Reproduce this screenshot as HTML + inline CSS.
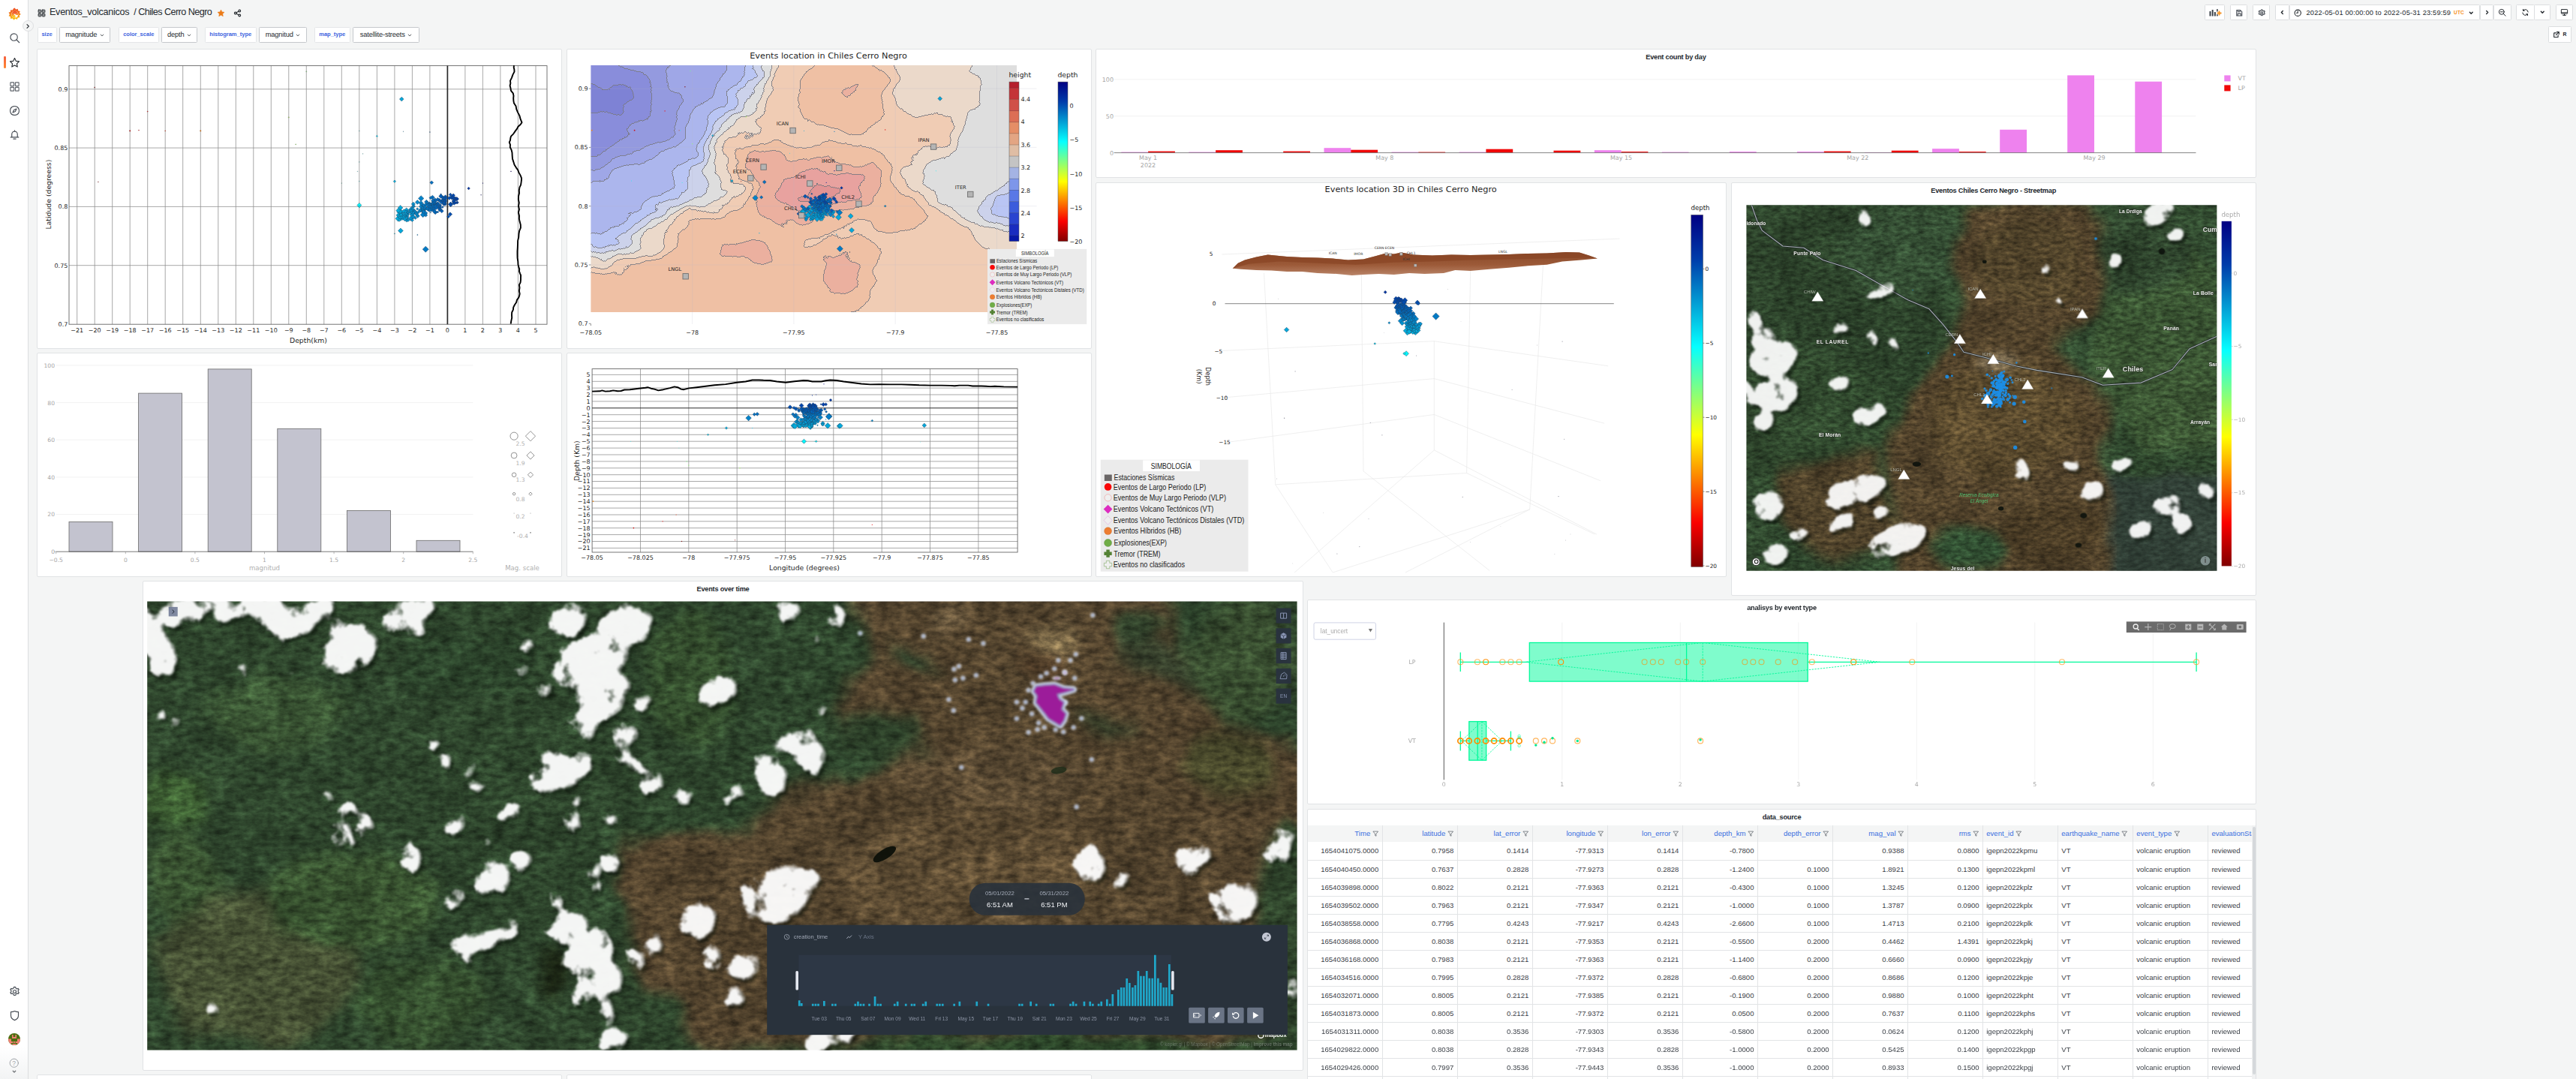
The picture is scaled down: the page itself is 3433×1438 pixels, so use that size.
<!DOCTYPE html>
<html lang="en"><head><meta charset="utf-8"><title>Chiles Cerro Negro - Grafana</title>
<style>
*{box-sizing:border-box}
html,body{margin:0;padding:0}
body{width:3433px;height:1438px;overflow:hidden;background:#f4f5f5;font-family:"Liberation Sans",sans-serif;color:#24292e;position:relative}
.panel{position:absolute;background:#fff;border:1px solid #e1e3e5;border-radius:2px;overflow:hidden}
.ptitle{position:absolute;left:0;right:0;top:5px;text-align:center;font-size:9.2px;font-weight:bold;color:#24292e;letter-spacing:-0.22px;line-height:11px}
.abs{position:absolute}
svg{position:absolute;left:0;top:0;overflow:visible}
svg text{white-space:pre}
.dj{font-family:"DejaVu Sans",sans-serif}

</style></head>
<body>
<div class="abs" id="sidemenu" style="left:0;top:0;width:37.5px;height:1438px;background:#fff;border-right:1px solid #dcdee0"></div>
<svg class="abs" style="left:10.5px;top:10px" width="17" height="18" viewBox="0 0 34 36">
<defs><linearGradient id="glg" x1="0" y1="1" x2="0" y2="0"><stop offset="0" stop-color="#fbca0a"/><stop offset="0.55" stop-color="#f37a20"/><stop offset="1" stop-color="#ef4e28"/></linearGradient></defs>
<path fill="url(#glg)" d="M17 1 L20.5 5.2 L25.5 3.6 L26.3 8.6 L31.5 9.8 L29.8 14.6 L33.5 18 L29.6 21.2 L30.6 26.4 L25.4 26.8 L23.6 31.8 L19 29.4 L14.8 33.5 L11.6 29 L6.2 29.8 L6 24.6 L1.2 22.4 L3.8 18 L1 13.4 L5.8 11.6 L6.4 6.4 L11.6 7.2 L14 2.6 Z"/>
<circle cx="17.5" cy="18.5" r="9.2" fill="#fff"/>
<path fill="none" stroke="url(#glg)" stroke-width="3.6" stroke-linecap="round" d="M24.5 18.5 A7 7 0 1 0 17.5 25.5"/>
<path fill="none" stroke="url(#glg)" stroke-width="3" stroke-linecap="round" d="M17.5 22 A3.5 3.5 0 1 1 21 18.5"/>
</svg>
<div class="abs" style="left:5px;top:75px;width:2.7px;height:16px;border-radius:1.3px;background:linear-gradient(#f55f3e,#f83)"></div>
<svg class="abs" style="left:11.5px;top:42.5px" width="15.0" height="15.0" viewBox="0 0 24 24" fill="none" stroke="#464c54" stroke-width="1.84" stroke-linecap="round" stroke-linejoin="round"><circle cx="10.5" cy="10.5" r="7.5"/><path d="M16 16 L22 22"/></svg>
<svg class="abs" style="left:11.5px;top:75.5px" width="15.0" height="15.0" viewBox="0 0 24 24" fill="none" stroke="#24292e" stroke-width="1.84" stroke-linecap="round" stroke-linejoin="round"><path d="M12 2.5 L14.9 8.6 L21.6 9.5 L16.7 14.2 L17.9 20.9 L12 17.7 L6.1 20.9 L7.3 14.2 L2.4 9.5 L9.1 8.6 Z"/></svg>
<svg class="abs" style="left:11.5px;top:107.5px" width="15.0" height="15.0" viewBox="0 0 24 24" fill="none" stroke="#60656c" stroke-width="1.84" stroke-linecap="round" stroke-linejoin="round"><rect x="3" y="3" width="7.5" height="7.5" rx="0.8"/><rect x="13.5" y="3" width="7.5" height="7.5" rx="0.8"/><rect x="3" y="13.5" width="7.5" height="7.5" rx="0.8"/><rect x="13.5" y="13.5" width="7.5" height="7.5" rx="0.8"/></svg>
<svg class="abs" style="left:11.5px;top:139.5px" width="15.0" height="15.0" viewBox="0 0 24 24" fill="none" stroke="#464c54" stroke-width="1.84" stroke-linecap="round" stroke-linejoin="round"><circle cx="12" cy="12" r="9.5" stroke-dasharray="13 1.6"/><path d="M16 8 L13.5 13.5 L8 16 L10.5 10.5 Z"/></svg>
<svg class="abs" style="left:11.5px;top:171.5px" width="15.0" height="15.0" viewBox="0 0 24 24" fill="none" stroke="#464c54" stroke-width="1.84" stroke-linecap="round" stroke-linejoin="round"><path d="M6 17.5 V11 a6 6 0 0 1 12 0 V17.5 M3.5 17.5 H20.5 M9.5 21 H14.5 M12 3 v2"/></svg>
<div class="abs" style="left:29.5px;top:27px;width:15px;height:15px;border-radius:50%;background:#f4f5f5;border:1px solid #dcdee0"></div>
<svg class="abs" style="left:33.3px;top:30.6px" width="8.0" height="8.0" viewBox="0 0 24 24" fill="none" stroke="#24292e" stroke-width="3.30" stroke-linecap="round" stroke-linejoin="round"><path d="M9 5 L16 12 L9 19"/></svg>
<svg class="abs" style="left:11.5px;top:1313.5px" width="15.0" height="15.0" viewBox="0 0 24 24" fill="none" stroke="#464c54" stroke-width="1.84" stroke-linecap="round" stroke-linejoin="round"><circle cx="12" cy="12" r="3.2"/><path d="M12 2.2 l2 .3 .8 2.6 2.1 1.2 2.6-.9 1.6 2.4-1.7 2 .1 1.2.0 1.2 1.7 2-1.6 2.5-2.6-.9-2.1 1.2-.8 2.6-2 .3-2-.3-.8-2.6-2.1-1.2-2.6.9-1.6-2.5 1.7-2 -.1-1.2 .1-1.2-1.7-2 1.6-2.4 2.6.9 2.1-1.2.8-2.6z"/></svg>
<svg class="abs" style="left:11.5px;top:1345.5px" width="15.0" height="15.0" viewBox="0 0 24 24" fill="none" stroke="#464c54" stroke-width="1.84" stroke-linecap="round" stroke-linejoin="round"><path d="M12 2.5 C9 4 6.5 4.3 4 4.3 V12 c0 5 3.5 8 8 9.8 c4.5-1.8 8-4.8 8-9.800 V4.3 C17.5 4.3 15 4 12 2.500z"/></svg>
<svg class="abs" style="left:11px;top:1377px" width="16" height="16" viewBox="0 0 16 16"><defs><clipPath id="avc"><circle cx="8" cy="8" r="8"/></clipPath></defs><g clip-path="url(#avc)"><rect width="16" height="16" fill="#4a6f10"/><path fill="#f08074" d="M5 2h1.6v3h2.8V2H11v5H5zM0 7.500h4V11h2v2H4v3H0zM16 7.500h-4V11h-2v2h2v3h4zM6.500 11h3v1.800h-3zM5.500 14h5v2h-5z"/></g></svg>
<svg class="abs" style="left:12.2px;top:1410.2px" width="13.5" height="13.5" viewBox="0 0 24 24" fill="none" stroke="#7b8087" stroke-width="1.60" stroke-linecap="round" stroke-linejoin="round"><circle cx="12" cy="12" r="10"/></svg>
<div class="abs" style="left:16.3px;top:1411px;font-size:8.5px;color:#8e9297;line-height:12px">?</div>
<svg class="abs" style="left:16.0px;top:1424.5px" width="6.0" height="6.0" viewBox="0 0 24 24" fill="none" stroke="#24292e" stroke-width="4.80" stroke-linecap="round" stroke-linejoin="round"><path d="M5 9 L12 16 L19 9"/></svg>
<div class="abs" style="left:0;top:1395px;width:37px;height:43px;background:linear-gradient(rgba(255,255,255,0),rgba(230,232,234,.5))"></div>
<svg class="abs" style="left:49.8px;top:11.7px" width="11.0" height="11.0" viewBox="0 0 24 24" fill="none" stroke="#24292e" stroke-width="2.07" stroke-linecap="round" stroke-linejoin="round"><rect x="2.5" y="2.5" width="8" height="8" rx="1"/><rect x="13.500" y="2.500" width="8" height="8" rx="1"/><rect x="2.500" y="13.500" width="8" height="8" rx="1"/><rect x="13.500" y="13.500" width="8" height="8" rx="1"/><path d="M2.500 6.500h19M2.500 17.500h19M6.500 2.500v19M17.500 2.500v19" stroke-width="1.2"/></svg>
<div class="abs" id="dtitle" style="left:66px;top:8.6px;font-size:12.6px;line-height:15px;color:#24292e;white-space:nowrap;letter-spacing:-0.28px"><span>Eventos_volcanicos</span><span style="margin-left:6px;letter-spacing:-0.54px">/ Chiles Cerro Negro</span></div>
<svg class="abs" style="left:288.5px;top:11.5px" width="11" height="11" viewBox="0 0 24 24"><path fill="#eb7b18" stroke="#eb7b18" stroke-width="1.5" stroke-linejoin="round" d="M12 2.5 L14.9 8.6 L21.6 9.5 L16.7 14.2 L17.9 20.9 L12 17.7 L6.1 20.9 L7.3 14.2 L2.4 9.5 L9.1 8.6 Z"/></svg>
<svg class="abs" style="left:311.0px;top:11.5px" width="11.0" height="11.0" viewBox="0 0 24 24" fill="none" stroke="#24292e" stroke-width="2.40" stroke-linecap="round" stroke-linejoin="round"><circle cx="18" cy="5.500" r="3"/><circle cx="6" cy="12" r="3"/><circle cx="18" cy="18.500" r="3"/><path d="M8.700 10.500 L15.300 7 M8.700 13.500 L15.300 17"/></svg>
<div class="abs vlabel" style="left:49.5px;top:35.5px;width:26.0px">size</div>
<div class="abs vval" style="left:79.0px;top:35.5px;width:68.0px"><span>magnitude</span><svg style="position:static;margin-left:3.5px" width="6" height="6" viewBox="0 0 24 24" fill="none" stroke="#24292e" stroke-width="3.4" stroke-linecap="round" stroke-linejoin="round"><path d="M5 8.500 L12 15.500 L19 8.500"/></svg></div>
<div class="abs vlabel" style="left:158.0px;top:35.5px;width:53.5px">color_scale</div>
<div class="abs vval" style="left:215.0px;top:35.5px;width:48.0px"><span>depth</span><svg style="position:static;margin-left:3.5px" width="6" height="6" viewBox="0 0 24 24" fill="none" stroke="#24292e" stroke-width="3.4" stroke-linecap="round" stroke-linejoin="round"><path d="M5 8.500 L12 15.500 L19 8.500"/></svg></div>
<div class="abs vlabel" style="left:273.0px;top:35.5px;width:68.5px">histogram_type</div>
<div class="abs vval" style="left:345.0px;top:35.5px;width:64.0px"><span>magnitud</span><svg style="position:static;margin-left:3.5px" width="6" height="6" viewBox="0 0 24 24" fill="none" stroke="#24292e" stroke-width="3.4" stroke-linecap="round" stroke-linejoin="round"><path d="M5 8.500 L12 15.500 L19 8.500"/></svg></div>
<div class="abs vlabel" style="left:419.0px;top:35.5px;width:47.5px">map_type</div>
<div class="abs vval" style="left:470.0px;top:35.5px;width:89.0px"><span>satellite-streets</span><svg style="position:static;margin-left:3.5px" width="6" height="6" viewBox="0 0 24 24" fill="none" stroke="#24292e" stroke-width="3.4" stroke-linecap="round" stroke-linejoin="round"><path d="M5 8.500 L12 15.500 L19 8.500"/></svg></div>
<style>
.vlabel{height:21.3px;background:#fff;border:1px solid #e4e6e8;border-radius:1.5px;font-size:7.6px;font-weight:bold;color:#4266e0;line-height:18.3px;text-align:center;white-space:nowrap;letter-spacing:-0.05px}
.vval{height:21.3px;background:#fff;border:1px solid #c5c8cc;border-radius:1.5px;font-size:9.3px;color:#24292e;line-height:19.5px;padding-top:1.4px;white-space:nowrap;display:flex;align-items:center;justify-content:center;letter-spacing:-0.15px}
.tbtn{position:absolute;top:6.2px;height:21.3px;background:#fff;border:1px solid #dcdee0;border-radius:1.500px}
</style>
<div class="tbtn" style="left:2937.8px;width:27.7px;top:6.2px"></div>
<div class="tbtn" style="left:2971.8px;width:23.7px;top:6.2px"></div>
<div class="tbtn" style="left:3001.8px;width:23.7px;top:6.2px"></div>
<div class="tbtn" style="left:3031.8px;width:19.2px;top:6.2px"></div>
<div class="tbtn" style="left:3050.5px;width:254.5px;top:6.2px"></div>
<div class="tbtn" style="left:3304.5px;width:18.5px;top:6.2px"></div>
<div class="tbtn" style="left:3322.5px;width:24.5px;top:6.2px"></div>
<div class="tbtn" style="left:3352.5px;width:25.0px;top:6.2px"></div>
<div class="tbtn" style="left:3376.5px;width:22.5px;top:6.2px"></div>
<div class="tbtn" style="left:3405.5px;width:23.5px;top:6.2px"></div>
<div class="tbtn" style="left:3396.0px;width:30.5px;top:35.4px"></div>
<svg class="abs" style="left:2943.500px;top:10px" width="17" height="13" viewBox="0 0 17 13"><g fill="#3d434a"><rect x="0.500" y="5" width="2" height="6.500" rx=".5"/><rect x="3.700" y="3" width="2" height="8.500" rx=".5"/><rect x="6.900" y="6" width="2" height="5.500" rx=".5"/><rect x="10.100" y="2" width="1.600" height="3.500" rx=".5"/><rect x="10.100" y="9" width="1.600" height="2.500" rx=".5"/></g><path d="M13.500 4.500v6M10.500 7.500h6" stroke="#f5901d" stroke-width="1.800"/></svg>
<svg class="abs" style="left:2978.8px;top:11.6px" width="10.5" height="10.5" viewBox="0 0 24 24" fill="none" stroke="#464c54" stroke-width="2.51" stroke-linecap="round" stroke-linejoin="round"><path d="M4 3.500h11l5 5V20.500H4z M8 3.500v5h6v-5 M7.500 20.500v-6.500h9v6.500" /></svg>
<svg class="abs" style="left:3008.8px;top:11.6px" width="10.5" height="10.5" viewBox="0 0 24 24" fill="none" stroke="#464c54" stroke-width="2.51" stroke-linecap="round" stroke-linejoin="round"><circle cx="12" cy="12" r="3.200"/><path d="M12 2.200 l2 .3 .8 2.600 2.100 1.200 2.600-.9 1.600 2.400-1.700 2 .1 1.200.0 1.200 1.700 2-1.600 2.500-2.600-.9-2.100 1.200-.8 2.600-2 .3-2-.3-.8-2.600-2.100-1.200-2.600.9-1.600-2.500 1.700-2 -.1-1.200 .1-1.200-1.700-2 1.600-2.400 2.600.9 2.100-1.200.8-2.600z"/></svg>
<svg class="abs" style="left:3038.0px;top:13.3px" width="7.0" height="7.0" viewBox="0 0 24 24" fill="none" stroke="#24292e" stroke-width="4.46" stroke-linecap="round" stroke-linejoin="round"><path d="M15 5 L8 12 L15 19"/></svg>
<svg class="abs" style="left:3057.2px;top:11.6px" width="10.5" height="10.5" viewBox="0 0 24 24" fill="none" stroke="#24292e" stroke-width="2.51" stroke-linecap="round" stroke-linejoin="round"><circle cx="12" cy="12" r="9.500"/><path d="M12 6.500V12H8"/></svg>
<div class="abs" id="trange" style="left:3073.5px;top:10.7px;font-size:9.3px;line-height:12px;color:#24292e;white-space:nowrap;letter-spacing:0.17px">2022-05-01 00:00:00 to 2022-05-31 23:59:59</div>
<div class="abs" style="left:3270px;top:11.6px;font-size:6.500px;line-height:9px;color:#f5901d;font-weight:bold;letter-spacing:.2px">UTC</div>
<svg class="abs" style="left:3290.2px;top:13.6px" width="6.5" height="6.5" viewBox="0 0 24 24" fill="none" stroke="#24292e" stroke-width="5.54" stroke-linecap="round" stroke-linejoin="round"><path d="M5 8.500 L12 15.500 L19 8.500"/></svg>
<svg class="abs" style="left:3310.5px;top:13.3px" width="7.0" height="7.0" viewBox="0 0 24 24" fill="none" stroke="#24292e" stroke-width="4.46" stroke-linecap="round" stroke-linejoin="round"><path d="M9 5 L16 12 L9 19"/></svg>
<svg class="abs" style="left:3329.0px;top:11.3px" width="11.0" height="11.0" viewBox="0 0 24 24" fill="none" stroke="#24292e" stroke-width="2.18" stroke-linecap="round" stroke-linejoin="round"><circle cx="10.500" cy="10.500" r="7.500"/><path d="M16 16 L22 22 M7 10.500h7"/></svg>
<svg class="abs" style="left:3359.5px;top:11.3px" width="11.0" height="11.0" viewBox="0 0 24 24" fill="none" stroke="#24292e" stroke-width="2.18" stroke-linecap="round" stroke-linejoin="round"><path d="M20 11 A8 8 0 0 0 5.500 7 M4 13 a8 8 0 0 0 14.500 4 M5.500 3v4h4 M18.500 21v-4h-4"/></svg>
<svg class="abs" style="left:3384.8px;top:13.1px" width="6.5" height="6.5" viewBox="0 0 24 24" fill="none" stroke="#24292e" stroke-width="5.54" stroke-linecap="round" stroke-linejoin="round"><path d="M5 8.500 L12 15.500 L19 8.500"/></svg>
<svg class="abs" style="left:3412.0px;top:11.3px" width="11.0" height="11.0" viewBox="0 0 24 24" fill="none" stroke="#24292e" stroke-width="2.18" stroke-linecap="round" stroke-linejoin="round"><rect x="3" y="3.500" width="18" height="12.500" rx="1.500"/><path d="M3 12.500h18 M8 20.500h8 M12 16v4.500"/></svg>
<svg class="abs" style="left:3401.5px;top:41.1px" width="10.0" height="10.0" viewBox="0 0 24 24" fill="none" stroke="#24292e" stroke-width="2.64" stroke-linecap="round" stroke-linejoin="round"><path d="M13 4h7v7 M20 4 L10.500 13.500 M17 14v5.500a1 1 0 0 1-1 1H5a1 1 0 0 1-1-1V8a1 1 0 0 1 1-1h5.500"/></svg>
<div class="abs" style="left:3415.500px;top:41.4px;font-size:6.800px;line-height:9px;font-weight:bold;color:#24292e">R</div><div class="panel" id="p1" style="left:49.0px;top:65.4px;width:700.2px;height:399.6px"><svg width="698.2" height="397.6" viewBox="50.0 66.4 698.2 397.6" class="dj"><path d="M102.7 88.0V432.6M126.2 88.0V432.6M149.7 88.0V432.6M173.2 88.0V432.6M196.7 88.0V432.6M220.2 88.0V432.6M243.7 88.0V432.6M267.3 88.0V432.6M290.8 88.0V432.6M314.3 88.0V432.6M337.8 88.0V432.6M361.3 88.0V432.6M384.8 88.0V432.6M408.3 88.0V432.6M431.8 88.0V432.6M455.3 88.0V432.6M478.8 88.0V432.6M502.4 88.0V432.6M525.9 88.0V432.6M549.4 88.0V432.6M572.9 88.0V432.6M619.9 88.0V432.6M643.4 88.0V432.6M666.9 88.0V432.6M690.4 88.0V432.6M714.0 88.0V432.6M92.0 119.2H729.0M92.0 197.5H729.0M92.0 275.8H729.0M92.0 354.1H729.0" stroke="#8c8c8c" stroke-width="0.75" fill="none"/><rect x="92.0" y="88.0" width="637.0" height="344.6" fill="none" stroke="#666" stroke-width="0.9"/><path d="M596.4 88.0V432.6" stroke="#2a2a2a" stroke-width="1.7"/><path d="M685.0 87.5L684.7 90.3L685.4 93.2L685.5 96.0L683.4 100.0L682.0 104.0L680.0 108.0L680.4 111.3L679.6 114.7L680.5 118.0L681.0 121.3L683.8 124.7L684.5 128.0L684.2 131.3L684.4 134.7L685.0 138.0L687.6 142.0L688.3 146.0L690.0 150.0L692.4 154.5L693.6 159.1L695.5 163.6L693.6 166.4L690.5 169.2L689.0 172.0L686.6 175.3L684.3 178.7L681.0 182.0L680.3 184.7L680.0 187.3L678.8 190.0L680.0 193.3L679.8 196.7L681.5 200.0L682.5 204.0L682.7 208.0L683.0 212.0L684.3 216.0L685.5 220.0L688.0 224.0L690.3 227.0L691.3 230.0L693.0 233.0L694.1 235.3L695.0 237.7L695.0 240.0L694.6 243.3L694.1 246.7L692.5 250.0L691.8 254.0L692.0 258.0L691.0 262.0L690.9 266.3L691.8 270.7L691.0 275.0L692.0 279.3L690.9 283.7L692.0 288.0L691.9 292.0L692.7 296.0L693.8 300.0L693.9 304.0L692.2 308.0L691.5 312.0L691.2 316.7L690.1 321.3L690.0 326.0L689.8 330.7L689.5 335.3L689.5 340.0L689.6 344.3L690.3 348.7L690.5 353.0L691.2 356.0L692.2 359.0L692.0 362.0L693.0 364.7L694.1 367.3L694.0 370.0L694.0 373.3L693.6 376.7L692.0 380.0L692.5 384.0L691.9 388.0L692.7 392.0L692.1 394.7L691.1 397.3L689.0 400.0L688.1 403.3L685.9 406.7L684.2 410.0L683.9 413.3L682.2 416.7L682.0 420.0L682.2 424.0L681.3 428.0L680.7 432.0" stroke="#000" stroke-width="1.9" fill="none" stroke-linejoin="round"/><circle cx="267.3" cy="174.8" r="0.82" fill="#fd8400" stroke="#402020" stroke-width="0.25" opacity="0.9"/><circle cx="173.2" cy="174.8" r="0.82" fill="#d30000" stroke="#402020" stroke-width="0.25" opacity="0.9"/><circle cx="196.7" cy="149.0" r="0.63" fill="#fa0200" stroke="#402020" stroke-width="0.25" opacity="0.9"/><circle cx="126.2" cy="116.9" r="0.63" fill="#800000" stroke="#402020" stroke-width="0.25" opacity="0.9"/><circle cx="220.2" cy="174.8" r="0.53" fill="#fb2d00" stroke="#402020" stroke-width="0.25" opacity="0.9"/><circle cx="130.9" cy="242.9" r="0.53" fill="#880000" stroke="#402020" stroke-width="0.25" opacity="0.9"/><circle cx="478.8" cy="242.1" r="0.45" fill="#05f7fb" stroke="#402020" stroke-width="0.25" opacity="0.9"/><circle cx="478.8" cy="174.8" r="0.45" fill="#05f7fb" stroke="#402020" stroke-width="0.25" opacity="0.9"/><circle cx="455.3" cy="244.5" r="0.45" fill="#25ffdf" stroke="#402020" stroke-width="0.25" opacity="0.9"/><circle cx="408.3" cy="95.7" r="0.60" fill="#7aff88" stroke="#402020" stroke-width="0.25" opacity="0.9"/><circle cx="394.2" cy="192.8" r="0.60" fill="#93ff6e" stroke="#402020" stroke-width="0.25" opacity="0.9"/><circle cx="384.8" cy="156.8" r="0.68" fill="#a4ff5d" stroke="#402020" stroke-width="0.25" opacity="0.9"/><circle cx="483.6" cy="205.3" r="0.45" fill="#05f0f9" stroke="#402020" stroke-width="0.25" opacity="0.9"/><circle cx="478.8" cy="216.3" r="0.45" fill="#05f7fb" stroke="#402020" stroke-width="0.25" opacity="0.9"/><circle cx="476.5" cy="228.8" r="0.45" fill="#05fafd" stroke="#402020" stroke-width="0.25" opacity="0.9"/><circle cx="537.6" cy="175.6" r="0.45" fill="#03a4d7" stroke="#402020" stroke-width="0.25" opacity="0.9"/><circle cx="572.9" cy="176.4" r="0.60" fill="#0173c2" stroke="#402020" stroke-width="0.25" opacity="0.9"/><circle cx="556.4" cy="313.4" r="0.68" fill="#028acc" stroke="#402020" stroke-width="0.25" opacity="0.9"/><circle cx="681.0" cy="228.8" r="0.60" fill="#000083" stroke="#402020" stroke-width="0.25" opacity="0.9"/><circle cx="643.4" cy="244.5" r="0.53" fill="#002198" stroke="#402020" stroke-width="0.25" opacity="0.9"/><circle cx="641.1" cy="260.1" r="0.53" fill="#002399" stroke="#402020" stroke-width="0.25" opacity="0.9"/><circle cx="185.0" cy="174.0" r="0.63" fill="#e70000" stroke="#402020" stroke-width="0.25" opacity="0.9"/><circle cx="525.9" cy="311.8" r="0.60" fill="#03b5df" stroke="#402020" stroke-width="0.25" opacity="0.9"/><path d="M539.2 285.1L544.0 289.9L539.2 294.6L534.5 289.9Z" fill="#03a2d6" stroke="#24405e" stroke-width="0.45"/><path d="M567.2 328.6L571.3 332.6L567.2 336.7L563.2 332.6Z" fill="#027ac5" stroke="#24405e" stroke-width="0.45"/><path d="M565.8 280.4L569.9 284.4L565.8 288.4L561.8 284.4Z" fill="#027cc6" stroke="#24405e" stroke-width="0.45"/><path d="M534.2 279.2L538.1 283.1L534.2 287.1L530.3 283.1Z" fill="#03a9d9" stroke="#24405e" stroke-width="0.45"/><path d="M534.1 286.8L538.0 290.7L534.1 294.6L530.2 290.7Z" fill="#03a9da" stroke="#24405e" stroke-width="0.45"/><path d="M536.2 283.9L540.0 287.8L536.2 291.7L532.3 287.8Z" fill="#03a6d8" stroke="#24405e" stroke-width="0.45"/><path d="M530.7 287.9L534.6 291.7L530.7 295.6L526.9 291.7Z" fill="#03aedc" stroke="#24405e" stroke-width="0.45"/><path d="M561.1 261.1L564.9 264.8L561.1 268.6L557.4 264.8Z" fill="#0283c9" stroke="#24405e" stroke-width="0.45"/><path d="M532.5 279.2L536.3 282.9L532.5 286.7L528.8 282.9Z" fill="#03abda" stroke="#24405e" stroke-width="0.45"/><path d="M549.5 278.5L553.2 282.2L549.5 285.8L545.8 282.2Z" fill="#0293d0" stroke="#24405e" stroke-width="0.45"/><path d="M571.9 269.4L575.5 273.0L571.9 276.6L568.3 273.0Z" fill="#0174c2" stroke="#24405e" stroke-width="0.45"/><path d="M579.7 264.1L583.2 267.6L579.7 271.2L576.1 267.6Z" fill="#0169be" stroke="#24405e" stroke-width="0.45"/><path d="M573.4 272.3L576.9 275.9L573.4 279.4L569.8 275.9Z" fill="#0172c1" stroke="#24405e" stroke-width="0.45"/><path d="M579.3 268.3L582.8 271.9L579.3 275.4L575.8 271.9Z" fill="#016abe" stroke="#24405e" stroke-width="0.45"/><path d="M577.7 275.4L581.3 278.9L577.7 282.4L574.2 278.9Z" fill="#016cbf" stroke="#24405e" stroke-width="0.45"/><path d="M563.4 276.2L566.9 279.7L563.4 283.2L559.9 279.7Z" fill="#0280c8" stroke="#24405e" stroke-width="0.45"/><path d="M591.0 265.7L594.5 269.2L591.0 272.7L587.5 269.2Z" fill="#0159b7" stroke="#24405e" stroke-width="0.45"/><path d="M563.7 283.2L567.2 286.6L563.7 290.1L560.2 286.6Z" fill="#027fc7" stroke="#24405e" stroke-width="0.45"/><path d="M532.9 285.7L536.4 289.1L532.9 292.6L529.5 289.1Z" fill="#03abda" stroke="#24405e" stroke-width="0.45"/><path d="M574.0 271.5L577.5 274.9L574.0 278.4L570.6 274.9Z" fill="#0171c1" stroke="#24405e" stroke-width="0.45"/><path d="M533.9 304.5L537.3 307.9L533.9 311.3L530.5 307.9Z" fill="#03a9da" stroke="#24405e" stroke-width="0.45"/><path d="M592.8 264.7L596.2 268.1L592.8 271.5L589.4 268.1Z" fill="#0157b6" stroke="#24405e" stroke-width="0.45"/><path d="M549.5 276.2L552.8 279.5L549.5 282.9L546.1 279.5Z" fill="#0293d0" stroke="#24405e" stroke-width="0.45"/><path d="M531.3 283.8L534.6 287.2L531.3 290.5L527.9 287.2Z" fill="#03addb" stroke="#24405e" stroke-width="0.45"/><path d="M533.6 274.0L536.9 277.4L533.6 280.7L530.3 277.4Z" fill="#03aada" stroke="#24405e" stroke-width="0.45"/><path d="M540.0 286.0L543.4 289.3L540.0 292.6L536.7 289.3Z" fill="#03a1d6" stroke="#24405e" stroke-width="0.45"/><path d="M600.6 269.5L603.9 272.8L600.6 276.1L597.3 272.8Z" fill="#004cb1" stroke="#24405e" stroke-width="0.45"/><path d="M550.5 286.0L553.8 289.3L550.5 292.6L547.2 289.3Z" fill="#0292cf" stroke="#24405e" stroke-width="0.45"/><path d="M542.0 289.9L545.3 293.2L542.0 296.5L538.7 293.2Z" fill="#039ed5" stroke="#24405e" stroke-width="0.45"/><path d="M566.1 274.9L569.4 278.1L566.1 281.4L562.8 278.1Z" fill="#027cc6" stroke="#24405e" stroke-width="0.45"/><path d="M541.6 287.3L544.8 290.5L541.6 293.6L538.5 290.5Z" fill="#039ed5" stroke="#24405e" stroke-width="0.45"/><path d="M602.2 260.4L605.4 263.6L602.2 266.7L599.1 263.6Z" fill="#0049b0" stroke="#24405e" stroke-width="0.45"/><path d="M533.5 279.2L536.7 282.4L533.5 285.5L530.4 282.4Z" fill="#03aada" stroke="#24405e" stroke-width="0.45"/><path d="M606.8 262.4L610.0 265.6L606.8 268.7L603.7 265.6Z" fill="#0043ad" stroke="#24405e" stroke-width="0.45"/><path d="M563.1 272.2L566.2 275.3L563.1 278.4L560.0 275.3Z" fill="#0280c8" stroke="#24405e" stroke-width="0.45"/><path d="M581.2 272.7L584.3 275.8L581.2 278.9L578.2 275.8Z" fill="#0167bd" stroke="#24405e" stroke-width="0.45"/><path d="M541.7 277.3L544.8 280.4L541.7 283.5L538.6 280.4Z" fill="#039ed5" stroke="#24405e" stroke-width="0.45"/><path d="M547.4 288.5L550.5 291.6L547.4 294.7L544.3 291.6Z" fill="#0296d1" stroke="#24405e" stroke-width="0.45"/><path d="M539.3 288.9L542.4 291.9L539.3 295.0L536.2 291.9Z" fill="#03a2d6" stroke="#24405e" stroke-width="0.45"/><path d="M562.7 277.4L565.8 280.5L562.7 283.5L559.6 280.5Z" fill="#0281c8" stroke="#24405e" stroke-width="0.45"/><path d="M580.6 271.6L583.6 274.6L580.6 277.7L577.5 274.6Z" fill="#0168bd" stroke="#24405e" stroke-width="0.45"/><path d="M530.8 278.0L533.9 281.0L530.8 284.0L527.8 281.0Z" fill="#03aedc" stroke="#24405e" stroke-width="0.45"/><path d="M561.0 267.9L564.0 270.9L561.0 273.9L558.0 270.9Z" fill="#0283c9" stroke="#24405e" stroke-width="0.45"/><path d="M585.6 274.0L588.6 277.0L585.6 280.0L582.5 277.0Z" fill="#0161ba" stroke="#24405e" stroke-width="0.45"/><path d="M605.2 267.7L608.3 270.7L605.2 273.7L602.2 270.7Z" fill="#0045ae" stroke="#24405e" stroke-width="0.45"/><path d="M478.8 270.9L481.9 273.9L478.8 276.9L475.8 273.9Z" fill="#05f7fb" stroke="#24405e" stroke-width="0.45"/><path d="M538.4 279.1L541.4 282.1L538.4 285.1L535.4 282.1Z" fill="#03a3d7" stroke="#24405e" stroke-width="0.45"/><path d="M552.9 280.0L555.9 283.0L552.9 286.0L549.9 283.0Z" fill="#028fce" stroke="#24405e" stroke-width="0.45"/><path d="M579.9 272.1L582.9 275.1L579.9 278.1L577.0 275.1Z" fill="#0169bd" stroke="#24405e" stroke-width="0.45"/><path d="M552.6 279.6L555.6 282.5L552.6 285.5L549.7 282.5Z" fill="#028fce" stroke="#24405e" stroke-width="0.45"/><path d="M556.3 266.9L559.2 269.9L556.3 272.8L553.3 269.9Z" fill="#028acc" stroke="#24405e" stroke-width="0.45"/><path d="M587.7 259.0L590.6 261.9L587.7 264.8L584.7 261.9Z" fill="#015eb9" stroke="#24405e" stroke-width="0.45"/><path d="M583.4 269.1L586.3 272.0L583.4 274.9L580.5 272.0Z" fill="#0164bb" stroke="#24405e" stroke-width="0.45"/><path d="M578.1 266.1L581.0 269.0L578.1 272.0L575.1 269.0Z" fill="#016bbf" stroke="#24405e" stroke-width="0.45"/><path d="M535.3 129.6L538.1 132.5L535.3 135.4L532.4 132.5Z" fill="#03a7d9" stroke="#24405e" stroke-width="0.45"/><path d="M576.4 260.6L579.3 263.4L576.4 266.3L573.6 263.4Z" fill="#016ec0" stroke="#24405e" stroke-width="0.45"/><path d="M580.2 280.5L583.0 283.3L580.2 286.2L577.3 283.3Z" fill="#0168bd" stroke="#24405e" stroke-width="0.45"/><path d="M572.7 269.8L575.6 272.6L572.7 275.4L569.9 272.6Z" fill="#0173c2" stroke="#24405e" stroke-width="0.45"/><path d="M542.4 280.7L545.2 283.5L542.4 286.3L539.6 283.5Z" fill="#029dd4" stroke="#24405e" stroke-width="0.45"/><path d="M583.4 269.7L586.2 272.5L583.4 275.4L580.5 272.5Z" fill="#0164bb" stroke="#24405e" stroke-width="0.45"/><path d="M591.7 269.3L594.6 272.1L591.7 274.9L588.9 272.1Z" fill="#0158b6" stroke="#24405e" stroke-width="0.45"/><path d="M568.3 266.7L571.1 269.5L568.3 272.3L565.5 269.5Z" fill="#0279c5" stroke="#24405e" stroke-width="0.45"/><path d="M575.4 277.1L578.2 279.9L575.4 282.6L572.7 279.9Z" fill="#016fc0" stroke="#24405e" stroke-width="0.45"/><path d="M582.0 271.0L584.8 273.8L582.0 276.6L579.3 273.8Z" fill="#0166bc" stroke="#24405e" stroke-width="0.45"/><path d="M578.3 272.5L581.0 275.2L578.3 278.0L575.5 275.2Z" fill="#016bbe" stroke="#24405e" stroke-width="0.45"/><path d="M592.5 267.7L595.3 270.4L592.5 273.2L589.7 270.4Z" fill="#0157b6" stroke="#24405e" stroke-width="0.45"/><path d="M571.1 276.8L573.9 279.6L571.1 282.3L568.4 279.6Z" fill="#0175c3" stroke="#24405e" stroke-width="0.45"/><path d="M547.1 277.1L549.8 279.8L547.1 282.6L544.3 279.8Z" fill="#0297d2" stroke="#24405e" stroke-width="0.45"/><path d="M599.9 283.2L602.7 286.0L599.9 288.7L597.2 286.0Z" fill="#004db1" stroke="#24405e" stroke-width="0.45"/><path d="M554.7 281.9L557.4 284.6L554.7 287.3L552.0 284.6Z" fill="#028ccd" stroke="#24405e" stroke-width="0.45"/><path d="M592.6 269.1L595.3 271.8L592.6 274.5L589.9 271.8Z" fill="#0157b6" stroke="#24405e" stroke-width="0.45"/><path d="M608.8 263.0L611.5 265.7L608.8 268.4L606.1 265.7Z" fill="#0040ac" stroke="#24405e" stroke-width="0.45"/><path d="M562.7 274.3L565.4 277.0L562.7 279.7L560.0 277.0Z" fill="#0281c8" stroke="#24405e" stroke-width="0.45"/><path d="M591.9 267.1L594.6 269.8L591.9 272.5L589.2 269.8Z" fill="#0158b6" stroke="#24405e" stroke-width="0.45"/><path d="M582.2 273.4L584.9 276.0L582.2 278.7L579.5 276.0Z" fill="#0165bc" stroke="#24405e" stroke-width="0.45"/><path d="M593.6 260.1L596.3 262.8L593.6 265.4L591.0 262.8Z" fill="#0155b5" stroke="#24405e" stroke-width="0.45"/><path d="M572.6 271.8L575.3 274.5L572.6 277.1L570.0 274.5Z" fill="#0173c2" stroke="#24405e" stroke-width="0.45"/><path d="M556.7 285.6L559.4 288.2L556.7 290.9L554.1 288.2Z" fill="#0289cc" stroke="#24405e" stroke-width="0.45"/><path d="M567.5 275.5L570.2 278.2L567.5 280.8L564.9 278.2Z" fill="#027ac5" stroke="#24405e" stroke-width="0.45"/><path d="M550.9 269.7L553.5 272.3L550.9 274.9L548.2 272.3Z" fill="#0292cf" stroke="#24405e" stroke-width="0.45"/><path d="M542.6 283.7L545.2 286.3L542.6 288.9L540.0 286.3Z" fill="#029dd4" stroke="#24405e" stroke-width="0.45"/><path d="M571.3 271.4L573.9 274.0L571.3 276.6L568.7 274.0Z" fill="#0175c3" stroke="#24405e" stroke-width="0.45"/><path d="M547.6 280.6L550.2 283.2L547.6 285.8L545.0 283.2Z" fill="#0296d1" stroke="#24405e" stroke-width="0.45"/><path d="M588.7 266.1L591.3 268.7L588.7 271.3L586.1 268.7Z" fill="#015cb8" stroke="#24405e" stroke-width="0.45"/><path d="M577.1 265.4L579.7 267.9L577.1 270.5L574.5 267.9Z" fill="#016dbf" stroke="#24405e" stroke-width="0.45"/><path d="M541.1 280.6L543.6 283.2L541.1 285.8L538.5 283.2Z" fill="#039fd5" stroke="#24405e" stroke-width="0.45"/><path d="M550.0 283.4L552.6 286.0L550.0 288.6L547.5 286.0Z" fill="#0293d0" stroke="#24405e" stroke-width="0.45"/><path d="M585.5 264.6L588.1 267.2L585.5 269.7L582.9 267.2Z" fill="#0161ba" stroke="#24405e" stroke-width="0.45"/><path d="M604.5 265.8L607.1 268.4L604.5 270.9L602.0 268.4Z" fill="#0046ae" stroke="#24405e" stroke-width="0.45"/><path d="M590.5 261.3L593.1 263.9L590.5 266.4L588.0 263.9Z" fill="#015ab7" stroke="#24405e" stroke-width="0.45"/><path d="M580.0 272.7L582.5 275.2L580.0 277.8L577.4 275.2Z" fill="#0169bd" stroke="#24405e" stroke-width="0.45"/><path d="M588.7 279.1L591.3 281.7L588.7 284.2L586.2 281.7Z" fill="#015cb8" stroke="#24405e" stroke-width="0.45"/><path d="M579.0 279.7L581.5 282.2L579.0 284.8L576.4 282.2Z" fill="#016abe" stroke="#24405e" stroke-width="0.45"/><path d="M564.4 279.8L566.9 282.4L564.4 284.9L561.9 282.4Z" fill="#027ec7" stroke="#24405e" stroke-width="0.45"/><path d="M554.9 282.7L557.4 285.2L554.9 287.7L552.4 285.2Z" fill="#028ccd" stroke="#24405e" stroke-width="0.45"/><path d="M560.9 278.3L563.4 280.8L560.9 283.3L558.4 280.8Z" fill="#0283c9" stroke="#24405e" stroke-width="0.45"/><path d="M575.2 241.3L577.7 243.7L575.2 246.1L572.8 243.7Z" fill="#016fc0" stroke="#24405e" stroke-width="0.45"/><path d="M604.2 258.3L606.6 260.7L604.2 263.2L601.7 260.7Z" fill="#0047af" stroke="#24405e" stroke-width="0.45"/><path d="M598.8 261.9L601.2 264.3L598.8 266.8L596.3 264.3Z" fill="#004eb2" stroke="#24405e" stroke-width="0.45"/><path d="M560.1 278.0L562.5 280.5L560.1 282.9L557.6 280.5Z" fill="#0285ca" stroke="#24405e" stroke-width="0.45"/><path d="M543.1 282.9L545.6 285.3L543.1 287.8L540.7 285.3Z" fill="#029cd4" stroke="#24405e" stroke-width="0.45"/><path d="M560.8 273.1L563.2 275.6L560.8 278.0L558.4 275.6Z" fill="#0284c9" stroke="#24405e" stroke-width="0.45"/><path d="M600.3 270.0L602.7 272.5L600.3 274.9L597.9 272.5Z" fill="#004cb1" stroke="#24405e" stroke-width="0.45"/><path d="M562.1 270.6L564.5 273.0L562.1 275.4L559.7 273.0Z" fill="#0282c8" stroke="#24405e" stroke-width="0.45"/><path d="M534.4 283.8L536.8 286.2L534.4 288.5L532.0 286.2Z" fill="#03a9d9" stroke="#24405e" stroke-width="0.45"/><path d="M591.3 268.0L593.7 270.4L591.3 272.8L588.9 270.4Z" fill="#0159b7" stroke="#24405e" stroke-width="0.45"/><path d="M592.7 263.7L595.1 266.1L592.7 268.5L590.3 266.1Z" fill="#0157b6" stroke="#24405e" stroke-width="0.45"/><path d="M534.4 284.5L536.8 286.8L534.4 289.2L532.1 286.8Z" fill="#03a9d9" stroke="#24405e" stroke-width="0.45"/><path d="M563.4 275.4L565.8 277.8L563.4 280.2L561.1 277.8Z" fill="#0280c8" stroke="#24405e" stroke-width="0.45"/><path d="M564.3 271.7L566.7 274.1L564.3 276.4L562.0 274.1Z" fill="#027fc7" stroke="#24405e" stroke-width="0.45"/><path d="M593.9 262.5L596.2 264.8L593.9 267.1L591.5 264.8Z" fill="#0155b5" stroke="#24405e" stroke-width="0.45"/><path d="M569.8 276.2L572.2 278.5L569.8 280.9L567.5 278.5Z" fill="#0277c4" stroke="#24405e" stroke-width="0.45"/><path d="M588.8 266.4L591.1 268.8L588.8 271.1L586.5 268.8Z" fill="#015cb8" stroke="#24405e" stroke-width="0.45"/><path d="M572.6 275.7L575.0 278.0L572.6 280.3L570.3 278.0Z" fill="#0173c2" stroke="#24405e" stroke-width="0.45"/><path d="M567.4 284.8L569.8 287.2L567.4 289.5L565.1 287.2Z" fill="#027ac5" stroke="#24405e" stroke-width="0.45"/><path d="M551.1 272.9L553.4 275.2L551.1 277.5L548.8 275.2Z" fill="#0291cf" stroke="#24405e" stroke-width="0.45"/><path d="M576.2 269.2L578.5 271.6L576.2 273.9L573.9 271.6Z" fill="#016ec0" stroke="#24405e" stroke-width="0.45"/><path d="M567.1 270.8L569.4 273.1L567.1 275.4L564.8 273.1Z" fill="#027bc5" stroke="#24405e" stroke-width="0.45"/><path d="M572.9 278.2L575.2 280.5L572.9 282.8L570.6 280.5Z" fill="#0173c2" stroke="#24405e" stroke-width="0.45"/><path d="M605.4 262.2L607.7 264.5L605.4 266.8L603.1 264.5Z" fill="#0045ae" stroke="#24405e" stroke-width="0.45"/><path d="M603.7 261.8L606.0 264.1L603.7 266.4L601.5 264.1Z" fill="#0047af" stroke="#24405e" stroke-width="0.45"/><path d="M604.9 266.2L607.2 268.5L604.9 270.7L602.7 268.5Z" fill="#0046ae" stroke="#24405e" stroke-width="0.45"/><path d="M581.2 275.5L583.4 277.7L581.2 279.9L578.9 277.7Z" fill="#0167bd" stroke="#24405e" stroke-width="0.45"/><path d="M574.4 273.8L576.7 276.1L574.4 278.3L572.2 276.1Z" fill="#0170c1" stroke="#24405e" stroke-width="0.45"/><path d="M591.7 268.5L593.9 270.7L591.7 272.9L589.5 270.7Z" fill="#0158b6" stroke="#24405e" stroke-width="0.45"/><path d="M569.8 271.8L572.0 274.0L569.8 276.2L567.6 274.0Z" fill="#0277c4" stroke="#24405e" stroke-width="0.45"/><path d="M583.3 263.7L585.5 265.9L583.3 268.1L581.1 265.9Z" fill="#0164bb" stroke="#24405e" stroke-width="0.45"/><path d="M586.8 276.8L589.0 279.0L586.8 281.1L584.6 279.0Z" fill="#015fb9" stroke="#24405e" stroke-width="0.45"/><path d="M541.9 288.6L544.1 290.8L541.9 293.0L539.8 290.8Z" fill="#039ed5" stroke="#24405e" stroke-width="0.45"/><path d="M574.1 261.9L576.2 264.1L574.1 266.2L571.9 264.1Z" fill="#0171c1" stroke="#24405e" stroke-width="0.45"/><path d="M549.4 291.7L551.5 293.8L549.4 296.0L547.2 293.8Z" fill="#0294d0" stroke="#24405e" stroke-width="0.45"/><path d="M566.0 275.5L568.2 277.7L566.0 279.8L563.9 277.7Z" fill="#027cc6" stroke="#24405e" stroke-width="0.45"/><path d="M589.5 265.2L591.7 267.3L589.5 269.5L587.4 267.3Z" fill="#015bb8" stroke="#24405e" stroke-width="0.45"/><path d="M537.6 287.4L539.7 289.6L537.6 291.7L535.5 289.6Z" fill="#03a4d7" stroke="#24405e" stroke-width="0.45"/><path d="M600.3 257.7L602.4 259.8L600.3 261.9L598.2 259.8Z" fill="#004cb1" stroke="#24405e" stroke-width="0.45"/><path d="M579.4 267.4L581.5 269.6L579.4 271.7L577.3 269.6Z" fill="#0169be" stroke="#24405e" stroke-width="0.45"/><path d="M555.8 285.0L557.9 287.0L555.8 289.1L553.7 287.0Z" fill="#028bcc" stroke="#24405e" stroke-width="0.45"/><path d="M586.4 273.5L588.5 275.6L586.4 277.7L584.3 275.6Z" fill="#0160b9" stroke="#24405e" stroke-width="0.45"/><path d="M609.3 268.2L611.4 270.3L609.3 272.4L607.3 270.3Z" fill="#003fab" stroke="#24405e" stroke-width="0.45"/><path d="M532.3 291.5L534.3 293.6L532.3 295.7L530.2 293.6Z" fill="#03acdb" stroke="#24405e" stroke-width="0.45"/><path d="M609.0 263.1L611.1 265.2L609.0 267.2L607.0 265.2Z" fill="#0040ac" stroke="#24405e" stroke-width="0.45"/><path d="M562.9 278.1L564.9 280.1L562.9 282.1L560.8 280.1Z" fill="#0281c8" stroke="#24405e" stroke-width="0.45"/><path d="M544.1 291.8L546.1 293.8L544.1 295.8L542.0 293.8Z" fill="#029bd3" stroke="#24405e" stroke-width="0.45"/><path d="M592.0 262.3L594.1 264.4L592.0 266.4L590.0 264.4Z" fill="#0158b6" stroke="#24405e" stroke-width="0.45"/><path d="M566.6 274.2L568.7 276.2L566.6 278.2L564.6 276.2Z" fill="#027bc6" stroke="#24405e" stroke-width="0.45"/><path d="M546.3 279.5L548.3 281.5L546.3 283.5L544.3 281.5Z" fill="#0298d2" stroke="#24405e" stroke-width="0.45"/><path d="M597.6 287.1L599.6 289.1L597.6 291.1L595.6 289.1Z" fill="#0150b3" stroke="#24405e" stroke-width="0.45"/><path d="M588.0 268.5L590.0 270.5L588.0 272.4L586.0 270.5Z" fill="#015db9" stroke="#24405e" stroke-width="0.45"/><path d="M543.3 281.5L545.3 283.5L543.3 285.5L541.3 283.5Z" fill="#029cd4" stroke="#24405e" stroke-width="0.45"/><path d="M572.8 273.7L574.8 275.7L572.8 277.7L570.9 275.7Z" fill="#0173c2" stroke="#24405e" stroke-width="0.45"/><path d="M547.8 284.5L549.7 286.4L547.8 288.4L545.8 286.4Z" fill="#0296d1" stroke="#24405e" stroke-width="0.45"/><path d="M585.2 277.0L587.1 279.0L585.2 281.0L583.2 279.0Z" fill="#0161ba" stroke="#24405e" stroke-width="0.45"/><path d="M535.4 287.8L537.4 289.8L535.4 291.7L533.5 289.8Z" fill="#03a7d9" stroke="#24405e" stroke-width="0.45"/><path d="M543.0 286.9L544.9 288.8L543.0 290.8L541.0 288.8Z" fill="#029dd4" stroke="#24405e" stroke-width="0.45"/><path d="M557.9 280.9L559.8 282.9L557.9 284.8L555.9 282.9Z" fill="#0288cb" stroke="#24405e" stroke-width="0.45"/><path d="M542.2 284.9L544.1 286.9L542.2 288.8L540.2 286.9Z" fill="#039ed5" stroke="#24405e" stroke-width="0.45"/><path d="M550.9 282.0L552.9 283.9L550.9 285.8L549.0 283.9Z" fill="#0291cf" stroke="#24405e" stroke-width="0.45"/><path d="M553.6 289.1L555.5 291.0L553.6 292.9L551.7 291.0Z" fill="#028ece" stroke="#24405e" stroke-width="0.45"/><path d="M569.1 268.8L571.0 270.7L569.1 272.6L567.2 270.7Z" fill="#0278c4" stroke="#24405e" stroke-width="0.45"/><path d="M586.0 266.1L587.9 268.0L586.0 269.9L584.1 268.0Z" fill="#0160ba" stroke="#24405e" stroke-width="0.45"/><path d="M585.9 278.6L587.8 280.4L585.9 282.3L584.1 280.4Z" fill="#0160ba" stroke="#24405e" stroke-width="0.45"/><path d="M538.7 283.7L540.5 285.6L538.7 287.4L536.9 285.6Z" fill="#03a3d7" stroke="#24405e" stroke-width="0.45"/><path d="M547.8 279.3L549.6 281.1L547.8 282.9L546.0 281.1Z" fill="#0296d1" stroke="#24405e" stroke-width="0.45"/><path d="M576.9 272.4L578.7 274.2L576.9 276.0L575.1 274.2Z" fill="#016dbf" stroke="#24405e" stroke-width="0.45"/><path d="M624.6 249.7L626.4 251.5L624.6 253.3L622.8 251.5Z" fill="#0031a3" stroke="#24405e" stroke-width="0.45"/><path d="M542.9 285.7L544.7 287.5L542.9 289.2L541.1 287.5Z" fill="#029dd4" stroke="#24405e" stroke-width="0.45"/><path d="M541.2 283.7L543.0 285.5L541.2 287.3L539.4 285.5Z" fill="#039fd5" stroke="#24405e" stroke-width="0.45"/><path d="M592.2 266.3L594.0 268.0L592.2 269.8L590.5 268.0Z" fill="#0157b6" stroke="#24405e" stroke-width="0.45"/><path d="M553.3 280.7L555.1 282.5L553.3 284.2L551.6 282.5Z" fill="#028ece" stroke="#24405e" stroke-width="0.45"/><path d="M544.7 282.0L546.4 283.7L544.7 285.4L543.0 283.7Z" fill="#029ad3" stroke="#24405e" stroke-width="0.45"/><path d="M525.9 240.4L527.6 242.1L525.9 243.8L524.2 242.1Z" fill="#03b5df" stroke="#24405e" stroke-width="0.45"/><path d="M586.2 272.6L587.9 274.3L586.2 276.0L584.5 274.3Z" fill="#0160ba" stroke="#24405e" stroke-width="0.45"/><path d="M590.1 262.5L591.8 264.2L590.1 265.9L588.4 264.2Z" fill="#015ab7" stroke="#24405e" stroke-width="0.45"/><path d="M607.4 269.2L609.0 270.8L607.4 272.5L605.7 270.8Z" fill="#0042ad" stroke="#24405e" stroke-width="0.45"/><path d="M556.3 277.2L557.9 278.9L556.3 280.5L554.6 278.9Z" fill="#028acc" stroke="#24405e" stroke-width="0.45"/><path d="M578.2 268.7L579.8 270.3L578.2 271.9L576.6 270.3Z" fill="#016bbf" stroke="#24405e" stroke-width="0.45"/><path d="M575.7 274.3L577.2 275.8L575.7 277.4L574.1 275.8Z" fill="#016fc0" stroke="#24405e" stroke-width="0.45"/><path d="M531.6 286.1L533.1 287.6L531.6 289.1L530.1 287.6Z" fill="#03addb" stroke="#24405e" stroke-width="0.45"/><path d="M543.1 285.4L544.6 286.9L543.1 288.4L541.6 286.9Z" fill="#029cd4" stroke="#24405e" stroke-width="0.45"/><path d="M583.4 281.4L584.9 282.9L583.4 284.4L581.9 282.9Z" fill="#0164bb" stroke="#24405e" stroke-width="0.45"/><path d="M571.3 274.4L572.8 275.9L571.3 277.3L569.8 275.9Z" fill="#0175c3" stroke="#24405e" stroke-width="0.45"/><path d="M589.8 274.9L591.3 276.4L589.8 277.8L588.4 276.4Z" fill="#015bb7" stroke="#24405e" stroke-width="0.45"/><path d="M548.6 275.6L550.0 277.0L548.6 278.4L547.1 277.0Z" fill="#0295d1" stroke="#24405e" stroke-width="0.45"/><path d="M577.2 273.9L578.6 275.3L577.2 276.8L575.8 275.3Z" fill="#016dbf" stroke="#24405e" stroke-width="0.45"/><path d="M543.6 281.8L545.0 283.2L543.6 284.6L542.2 283.2Z" fill="#029cd4" stroke="#24405e" stroke-width="0.45"/><path d="M536.7 290.9L538.0 292.3L536.7 293.7L535.3 292.3Z" fill="#03a5d8" stroke="#24405e" stroke-width="0.45"/><path d="M579.6 270.2L581.0 271.5L579.6 272.9L578.3 271.5Z" fill="#0169be" stroke="#24405e" stroke-width="0.45"/><path d="M478.8 274.4L480.2 275.8L478.8 277.2L477.5 275.8Z" fill="#05f7fb" stroke="#24405e" stroke-width="0.45"/><path d="M551.7 274.4L553.1 275.8L551.7 277.2L550.4 275.8Z" fill="#0290cf" stroke="#24405e" stroke-width="0.45"/><path d="M600.7 261.4L602.0 262.8L600.7 264.1L599.3 262.8Z" fill="#004bb1" stroke="#24405e" stroke-width="0.45"/><path d="M589.9 266.0L591.2 267.3L589.9 268.6L588.5 267.3Z" fill="#015bb7" stroke="#24405e" stroke-width="0.45"/><path d="M587.4 272.4L588.7 273.7L587.4 275.0L586.2 273.7Z" fill="#015eb9" stroke="#24405e" stroke-width="0.45"/><path d="M604.6 263.8L605.9 265.1L604.6 266.3L603.4 265.1Z" fill="#0046ae" stroke="#24405e" stroke-width="0.45"/><path d="M593.9 271.9L595.2 273.1L593.9 274.3L592.7 273.1Z" fill="#0155b5" stroke="#24405e" stroke-width="0.45"/><path d="M579.1 272.4L580.2 273.5L579.1 274.7L577.9 273.5Z" fill="#016abe" stroke="#24405e" stroke-width="0.45"/><path d="M502.4 180.7L503.5 181.8L502.4 183.0L501.2 181.8Z" fill="#04d6ed" stroke="#24405e" stroke-width="0.45"/><path d="M575.2 270.3L576.3 271.4L575.2 272.6L574.1 271.4Z" fill="#016fc0" stroke="#24405e" stroke-width="0.45"/><path d="M587.6 258.3L588.6 259.4L587.6 260.5L586.5 259.4Z" fill="#015eb9" stroke="#24405e" stroke-width="0.45"/><path d="M609.6 269.3L610.6 270.3L609.6 271.3L608.7 270.3Z" fill="#003fab" stroke="#24405e" stroke-width="0.45"/><path d="M591.2 266.2L592.2 267.2L591.2 268.1L590.3 267.2Z" fill="#0159b7" stroke="#24405e" stroke-width="0.45"/><path d="M535.7 287.8L536.6 288.7L535.7 289.6L534.7 288.7Z" fill="#03a7d9" stroke="#24405e" stroke-width="0.45"/><path d="M576.3 278.6L577.1 279.4L576.3 280.2L575.5 279.4Z" fill="#016ec0" stroke="#24405e" stroke-width="0.45"/><path d="M573.8 283.0L574.6 283.7L573.8 284.5L573.1 283.7Z" fill="#0171c1" stroke="#24405e" stroke-width="0.45"/><path d="M562.9 273.1L563.6 273.8L562.9 274.5L562.1 273.8Z" fill="#0281c8" stroke="#24405e" stroke-width="0.45"/><path d="M551.2 279.4L551.9 280.1L551.2 280.8L550.5 280.1Z" fill="#0291cf" stroke="#24405e" stroke-width="0.45"/><path d="M604.3 270.2L605.0 270.9L604.3 271.6L603.6 270.9Z" fill="#0046af" stroke="#24405e" stroke-width="0.45"/><path d="M573.2 271.0L573.9 271.7L573.2 272.4L572.5 271.7Z" fill="#0172c2" stroke="#24405e" stroke-width="0.45"/><path d="M562.6 279.7L563.3 280.4L562.6 281.1L561.9 280.4Z" fill="#0281c8" stroke="#24405e" stroke-width="0.45"/><path d="M607.4 265.9L608.1 266.6L607.4 267.3L606.7 266.6Z" fill="#0042ad" stroke="#24405e" stroke-width="0.45"/><path d="M582.3 271.8L583.0 272.5L582.3 273.2L581.6 272.5Z" fill="#0165bc" stroke="#24405e" stroke-width="0.45"/><g font-size="8" fill="#1f1f1f"><text x="102.7" y="443" text-anchor="middle">−21</text><text x="126.2" y="443" text-anchor="middle">−20</text><text x="149.7" y="443" text-anchor="middle">−19</text><text x="173.2" y="443" text-anchor="middle">−18</text><text x="196.7" y="443" text-anchor="middle">−17</text><text x="220.2" y="443" text-anchor="middle">−16</text><text x="243.7" y="443" text-anchor="middle">−15</text><text x="267.3" y="443" text-anchor="middle">−14</text><text x="290.8" y="443" text-anchor="middle">−13</text><text x="314.3" y="443" text-anchor="middle">−12</text><text x="337.8" y="443" text-anchor="middle">−11</text><text x="361.3" y="443" text-anchor="middle">−10</text><text x="384.8" y="443" text-anchor="middle">−9</text><text x="408.3" y="443" text-anchor="middle">−8</text><text x="431.8" y="443" text-anchor="middle">−7</text><text x="455.3" y="443" text-anchor="middle">−6</text><text x="478.8" y="443" text-anchor="middle">−5</text><text x="502.4" y="443" text-anchor="middle">−4</text><text x="525.9" y="443" text-anchor="middle">−3</text><text x="549.4" y="443" text-anchor="middle">−2</text><text x="572.9" y="443" text-anchor="middle">−1</text><text x="596.4" y="443" text-anchor="middle">0</text><text x="619.9" y="443" text-anchor="middle">1</text><text x="643.4" y="443" text-anchor="middle">2</text><text x="666.9" y="443" text-anchor="middle">3</text><text x="690.4" y="443" text-anchor="middle">4</text><text x="714.0" y="443" text-anchor="middle">5</text><text x="90.3" y="122.2" text-anchor="end">0.9</text><text x="90.3" y="200.5" text-anchor="end">0.85</text><text x="90.3" y="278.8" text-anchor="end">0.8</text><text x="90.3" y="357.1" text-anchor="end">0.75</text><text x="90.3" y="435.4" text-anchor="end">0.7</text></g><text x="411" y="457.3" text-anchor="middle" font-size="9.3" fill="#1f1f1f">Depth(km)</text><text transform="translate(68,259.5) rotate(-90)" text-anchor="middle" font-size="9.3" fill="#1f1f1f">Latidude (degreess)</text></svg></div>
<div class="panel" id="p2" style="left:754.5px;top:65.4px;width:700.2px;height:399.6px"><svg width="698.2" height="397.6" viewBox="755.5 66.4 698.2 397.6" class="dj"><defs><clipPath id="p2clip"><rect x="786.9" y="87.4" width="567.6" height="329.0"/></clipPath><filter id="p2f" x="600" y="-100" width="1000" height="800" filterUnits="userSpaceOnUse" color-interpolation-filters="sRGB">
<feGaussianBlur in="SourceGraphic" stdDeviation="15" result="b"/>
<feTurbulence type="fractalNoise" baseFrequency="0.011 0.017" numOctaves="3" seed="11" result="n"/>
<feDisplacementMap in="b" in2="n" scale="62" xChannelSelector="R" yChannelSelector="G" result="d0"/>
<feTurbulence type="fractalNoise" baseFrequency="0.035" numOctaves="2" seed="5" result="n2"/>
<feDisplacementMap in="d0" in2="n2" scale="6" xChannelSelector="G" yChannelSelector="R" result="d"/>
<feComponentTransfer in="d" result="q"><feFuncR type="discrete" tableValues="0.0000 0.0769 0.1538 0.2308 0.3077 0.3846 0.4615 0.5385 0.6154 0.6923 0.7692 0.8462 0.9231 1.0000"/><feFuncG type="discrete" tableValues="0.0000 0.0769 0.1538 0.2308 0.3077 0.3846 0.4615 0.5385 0.6154 0.6923 0.7692 0.8462 0.9231 1.0000"/><feFuncB type="discrete" tableValues="0.0000 0.0769 0.1538 0.2308 0.3077 0.3846 0.4615 0.5385 0.6154 0.6923 0.7692 0.8462 0.9231 1.0000"/></feComponentTransfer>
<feConvolveMatrix in="q" order="3" kernelMatrix="0 -1 0 -1 4 -1 0 -1 0" divisor="1" bias="0" preserveAlpha="true" edgeMode="duplicate" result="e"/>
<feColorMatrix in="e" type="matrix" values="0 0 0 0 0.47  0 0 0 0 0.47  0 0 0 0 0.5  11 0 0 0 0" result="ln"/>
<feComponentTransfer in="d" result="c"><feFuncR type="discrete" tableValues="0.498 0.541 0.584 0.627 0.678 0.729 0.800 0.871 0.925 0.945 0.941 0.925 0.910 0.886"/><feFuncG type="discrete" tableValues="0.510 0.553 0.604 0.655 0.714 0.773 0.824 0.871 0.851 0.800 0.753 0.694 0.639 0.584"/><feFuncB type="discrete" tableValues="0.839 0.859 0.878 0.906 0.933 0.957 0.925 0.871 0.796 0.706 0.647 0.627 0.627 0.584"/></feComponentTransfer>
<feMerge result="m"><feMergeNode in="c"/><feMergeNode in="ln"/></feMerge><feGaussianBlur in="m" stdDeviation="0.45"/>
</filter><linearGradient id="p2h" x1="0" y1="0" x2="0" y2="1"><stop offset="0.0000" stop-color="#b5202c"/><stop offset="0.0386" stop-color="#b5202c"/><stop offset="0.0386" stop-color="#c43438"/><stop offset="0.1098" stop-color="#c43438"/><stop offset="0.1098" stop-color="#d05048"/><stop offset="0.1810" stop-color="#d05048"/><stop offset="0.1810" stop-color="#dc6e55"/><stop offset="0.2522" stop-color="#dc6e55"/><stop offset="0.2522" stop-color="#e58e66"/><stop offset="0.3234" stop-color="#e58e66"/><stop offset="0.3234" stop-color="#e3a583"/><stop offset="0.3946" stop-color="#e3a583"/><stop offset="0.3946" stop-color="#dfbda4"/><stop offset="0.4658" stop-color="#dfbda4"/><stop offset="0.4658" stop-color="#c4c4c4"/><stop offset="0.5370" stop-color="#c4c4c4"/><stop offset="0.5370" stop-color="#a4b3e4"/><stop offset="0.6082" stop-color="#a4b3e4"/><stop offset="0.6082" stop-color="#7d96ea"/><stop offset="0.6794" stop-color="#7d96ea"/><stop offset="0.6794" stop-color="#5a78e6"/><stop offset="0.7506" stop-color="#5a78e6"/><stop offset="0.7506" stop-color="#3c5cdc"/><stop offset="0.8218" stop-color="#3c5cdc"/><stop offset="0.8218" stop-color="#2a44d0"/><stop offset="0.8930" stop-color="#2a44d0"/><stop offset="0.8930" stop-color="#1a2cc0"/><stop offset="0.9642" stop-color="#1a2cc0"/><stop offset="0.9642" stop-color="#0818a8"/><stop offset="1.0000" stop-color="#0818a8"/></linearGradient><linearGradient id="p2jet" x1="0" y1="0" x2="0" y2="1"><stop offset="0.000" stop-color="rgb(0,0,131)"/><stop offset="0.125" stop-color="rgb(0,60,170)"/><stop offset="0.375" stop-color="rgb(5,255,255)"/><stop offset="0.625" stop-color="rgb(255,255,0)"/><stop offset="0.875" stop-color="rgb(250,0,0)"/><stop offset="1.000" stop-color="rgb(128,0,0)"/></linearGradient></defs><g clip-path="url(#p2clip)"><g filter="url(#p2f)"><rect x="600" y="-100" width="1000" height="800" fill="rgb(180,180,180)"/><polygon points="1160.3,22.0 1471.9,22.0 1471.9,185.4 1262.9,191.1 1205.9,174.0 1171.7,136.0" fill="rgb(158,158,158)"/><polygon points="1175.5,326.0 1471.9,326.0 1471.9,477.9 1205.9,477.9 1186.9,401.9" fill="rgb(166,166,166)"/><ellipse cx="1129.9" cy="124.6" rx="57.0" ry="28.5" fill="rgb(202,202,202)"/><ellipse cx="1255.3" cy="174.0" rx="34.2" ry="13.3" fill="rgb(184,184,184)"/><ellipse cx="1255.3" cy="360.2" rx="41.8" ry="15.2" fill="rgb(188,188,188)"/><ellipse cx="845.0" cy="382.9" rx="125.4" ry="41.8" fill="rgb(200,200,200)"/><ellipse cx="1000.8" cy="333.6" rx="57.0" ry="22.8" fill="rgb(209,209,209)"/><ellipse cx="1114.7" cy="364.0" rx="34.2" ry="30.4" fill="rgb(209,209,209)"/><ellipse cx="1050.2" cy="401.9" rx="95.0" ry="22.8" fill="rgb(199,199,199)"/><ellipse cx="962.8" cy="291.8" rx="98.8" ry="26.6" fill="rgb(197,197,197)"/><ellipse cx="1198.3" cy="272.8" rx="34.2" ry="45.6" fill="rgb(195,195,195)"/><polygon points="1319.9,22.0 1471.9,22.0 1471.9,333.6 1312.3,322.2 1274.3,291.8 1243.9,261.4 1198.3,238.6 1217.3,212.0 1270.5,191.1 1293.3,136.0" fill="rgb(135,135,135)"/><polygon points="1471.9,227.2 1342.7,246.2 1308.5,269.0 1342.7,303.2 1471.9,322.2" fill="rgb(93,93,93)"/><polygon points="1042.6,22.0 1021.7,136.0 985.6,185.4 955.2,219.6 928.6,236.7 1023.6,235.5 1054.0,257.6 921.0,276.6 883.0,299.4 850.7,341.2 674.0,394.3 674.0,22.0" fill="rgb(129,129,129)"/><polygon points="1002.7,22.0 981.8,136.0 947.6,185.4 917.2,219.6 883.0,242.4 962.8,246.9 875.4,268.2 839.3,291.8 807.0,327.9 674.0,364.0 674.0,22.0" fill="rgb(78,78,78)"/><polygon points="940.0,22.0 941.9,117.0 917.2,155.0 890.6,185.4 856.4,210.1 674.0,234.8 674.0,22.0" fill="rgb(44,44,44)"/><polygon points="818.4,94.2 879.2,124.6 845.0,160.7 807.0,183.5 674.0,189.2 674.0,94.2" fill="rgb(15,15,15)"/><ellipse cx="902.0" cy="103.7" rx="41.8" ry="9.9" fill="rgb(87,87,87)" transform="rotate(-12 902.0 103.7)"/><ellipse cx="1091.9" cy="248.8" rx="81.7" ry="39.9" fill="rgb(213,213,213)" transform="rotate(-8 1091.9 248.8)"/><ellipse cx="1101.4" cy="251.1" rx="38.0" ry="19.8" fill="rgb(250,250,250)" transform="rotate(-5 1101.4 251.1)"/><ellipse cx="1012.2" cy="229.8" rx="32.3" ry="16.0" fill="rgb(228,228,228)" transform="rotate(-10 1012.2 229.8)"/></g></g><path d="M922.2 87.4V432.4M1057.4 87.4V432.4M1192.7 87.4V432.4M1328.0 87.4V432.4M786.9 118.5H1381.0M786.9 196.8H1381.0M786.9 275.1H1381.0M786.9 353.4H1381.0" stroke="#b8b8c8" stroke-width="0.5" opacity="0.45" fill="none"/><circle cx="788.3" cy="174.1" r="0.88" fill="#fd8400" opacity="0.9"/><circle cx="845.1" cy="174.1" r="0.88" fill="#d30000" opacity="0.9"/><circle cx="885.6" cy="148.3" r="0.68" fill="#fa0200" opacity="0.9"/><circle cx="912.4" cy="116.2" r="0.68" fill="#800000" opacity="0.9"/><circle cx="904.6" cy="174.1" r="0.57" fill="#fb2d00" opacity="0.9"/><circle cx="987.1" cy="242.2" r="0.57" fill="#880000" opacity="0.9"/><circle cx="841.0" cy="241.4" r="0.50" fill="#05f7fb" opacity="0.9"/><circle cx="905.9" cy="174.1" r="0.50" fill="#05f7fb" opacity="0.9"/><circle cx="908.6" cy="243.8" r="0.50" fill="#25ffdf" opacity="0.9"/><circle cx="919.5" cy="95.0" r="0.65" fill="#7aff88" opacity="0.9"/><circle cx="922.2" cy="192.1" r="0.65" fill="#93ff6e" opacity="0.9"/><circle cx="993.9" cy="156.1" r="0.72" fill="#a4ff5d" opacity="0.9"/><circle cx="1052.0" cy="204.6" r="0.50" fill="#05f0f9" opacity="0.9"/><circle cx="1098.0" cy="215.6" r="0.50" fill="#05f7fb" opacity="0.9"/><circle cx="1246.8" cy="228.1" r="0.50" fill="#05fafd" opacity="0.9"/><circle cx="1071.0" cy="174.9" r="0.50" fill="#03a4d7" opacity="0.9"/><circle cx="1111.5" cy="175.7" r="0.65" fill="#0173c2" opacity="0.9"/><circle cx="1114.3" cy="312.7" r="0.72" fill="#028acc" opacity="0.9"/><circle cx="1111.5" cy="228.1" r="0.65" fill="#000083" opacity="0.9"/><circle cx="1100.7" cy="243.8" r="0.57" fill="#002198" opacity="0.9"/><circle cx="1095.3" cy="259.4" r="0.57" fill="#002399" opacity="0.9"/><circle cx="1179.2" cy="173.3" r="0.68" fill="#e70000" opacity="0.9"/><circle cx="1011.4" cy="311.1" r="0.65" fill="#03b5df" opacity="0.9"/><path d="M1083.0 284.4L1087.7 289.2L1083.0 293.9L1078.2 289.2Z" fill="#03a2d6" stroke="#24405e" stroke-width="0.45"/><path d="M1118.9 327.9L1122.9 331.9L1118.9 336.0L1114.8 331.9Z" fill="#027ac5" stroke="#24405e" stroke-width="0.45"/><path d="M1118.3 279.7L1122.3 283.7L1118.3 287.7L1114.3 283.7Z" fill="#027cc6" stroke="#24405e" stroke-width="0.45"/><path d="M1069.4 278.5L1073.3 282.4L1069.4 286.4L1065.4 282.4Z" fill="#03a9d9" stroke="#24405e" stroke-width="0.45"/><path d="M1117.0 286.1L1120.8 290.0L1117.0 293.9L1113.1 290.0Z" fill="#03a9da" stroke="#24405e" stroke-width="0.45"/><path d="M1076.3 283.2L1080.2 287.1L1076.3 291.0L1072.4 287.1Z" fill="#03a6d8" stroke="#24405e" stroke-width="0.45"/><path d="M1092.8 287.2L1096.6 291.0L1092.8 294.9L1088.9 291.0Z" fill="#03aedc" stroke="#24405e" stroke-width="0.45"/><path d="M1006.0 260.4L1009.8 264.1L1006.0 267.9L1002.3 264.1Z" fill="#0283c9" stroke="#24405e" stroke-width="0.45"/><path d="M1071.0 278.5L1074.8 282.2L1071.0 286.0L1067.3 282.2Z" fill="#03abda" stroke="#24405e" stroke-width="0.45"/><path d="M1093.2 277.8L1096.9 281.5L1093.2 285.1L1089.5 281.5Z" fill="#0293d0" stroke="#24405e" stroke-width="0.45"/><path d="M1088.3 275.5L1091.9 279.0L1088.3 282.5L1084.8 279.0Z" fill="#0280c8" stroke="#24405e" stroke-width="0.45"/><path d="M1106.4 282.5L1109.9 285.9L1106.4 289.4L1102.9 285.9Z" fill="#027fc7" stroke="#24405e" stroke-width="0.45"/><path d="M1133.2 285.0L1136.6 288.4L1133.2 291.9L1129.7 288.4Z" fill="#03abda" stroke="#24405e" stroke-width="0.45"/><path d="M1134.5 303.8L1138.0 307.2L1134.5 310.6L1131.1 307.2Z" fill="#03a9da" stroke="#24405e" stroke-width="0.45"/><path d="M1084.8 275.5L1088.2 278.8L1084.8 282.2L1081.5 278.8Z" fill="#0293d0" stroke="#24405e" stroke-width="0.45"/><path d="M1092.8 283.1L1096.2 286.5L1092.8 289.8L1089.5 286.5Z" fill="#03addb" stroke="#24405e" stroke-width="0.45"/><path d="M1078.3 273.3L1081.6 276.7L1078.3 280.0L1074.9 276.7Z" fill="#03aada" stroke="#24405e" stroke-width="0.45"/><path d="M1088.2 285.3L1091.5 288.6L1088.2 291.9L1084.9 288.6Z" fill="#03a1d6" stroke="#24405e" stroke-width="0.45"/><path d="M1091.7 285.3L1094.9 288.6L1091.7 291.9L1088.4 288.6Z" fill="#0292cf" stroke="#24405e" stroke-width="0.45"/><path d="M1088.4 289.2L1091.7 292.5L1088.4 295.8L1085.1 292.5Z" fill="#039ed5" stroke="#24405e" stroke-width="0.45"/><path d="M1094.3 274.2L1097.6 277.4L1094.3 280.7L1091.0 277.4Z" fill="#027cc6" stroke="#24405e" stroke-width="0.45"/><path d="M1095.7 286.6L1098.8 289.8L1095.7 292.9L1092.5 289.8Z" fill="#039ed5" stroke="#24405e" stroke-width="0.45"/><path d="M1091.0 278.5L1094.1 281.7L1091.0 284.8L1087.9 281.7Z" fill="#03aada" stroke="#24405e" stroke-width="0.45"/><path d="M1097.2 271.5L1100.3 274.6L1097.2 277.7L1094.1 274.6Z" fill="#0280c8" stroke="#24405e" stroke-width="0.45"/><path d="M1082.8 276.6L1085.9 279.7L1082.8 282.8L1079.7 279.7Z" fill="#039ed5" stroke="#24405e" stroke-width="0.45"/><path d="M1074.0 287.8L1077.1 290.9L1074.0 294.0L1070.9 290.9Z" fill="#0296d1" stroke="#24405e" stroke-width="0.45"/><path d="M1081.9 288.2L1085.0 291.2L1081.9 294.3L1078.8 291.2Z" fill="#03a2d6" stroke="#24405e" stroke-width="0.45"/><path d="M1074.8 276.7L1077.9 279.8L1074.8 282.8L1071.8 279.8Z" fill="#0281c8" stroke="#24405e" stroke-width="0.45"/><path d="M1091.5 277.3L1094.6 280.3L1091.5 283.3L1088.5 280.3Z" fill="#03aedc" stroke="#24405e" stroke-width="0.45"/><path d="M1088.5 267.2L1091.5 270.2L1088.5 273.2L1085.4 270.2Z" fill="#0283c9" stroke="#24405e" stroke-width="0.45"/><path d="M1083.7 270.2L1086.7 273.2L1083.7 276.2L1080.7 273.2Z" fill="#05f7fb" stroke="#24405e" stroke-width="0.45"/><path d="M1081.0 278.4L1084.0 281.4L1081.0 284.4L1078.0 281.4Z" fill="#03a3d7" stroke="#24405e" stroke-width="0.45"/><path d="M1102.8 279.3L1105.8 282.3L1102.8 285.3L1099.8 282.3Z" fill="#028fce" stroke="#24405e" stroke-width="0.45"/><path d="M1087.7 278.9L1090.7 281.8L1087.7 284.8L1084.7 281.8Z" fill="#028fce" stroke="#24405e" stroke-width="0.45"/><path d="M1100.1 266.2L1103.1 269.2L1100.1 272.1L1097.2 269.2Z" fill="#028acc" stroke="#24405e" stroke-width="0.45"/><path d="M1252.2 128.9L1255.1 131.8L1252.2 134.7L1249.4 131.8Z" fill="#03a7d9" stroke="#24405e" stroke-width="0.45"/><path d="M1110.0 280.0L1112.9 282.8L1110.0 285.6L1107.2 282.8Z" fill="#029dd4" stroke="#24405e" stroke-width="0.45"/><path d="M1086.4 276.4L1089.1 279.1L1086.4 281.9L1083.7 279.1Z" fill="#0297d2" stroke="#24405e" stroke-width="0.45"/><path d="M1079.6 281.2L1082.3 283.9L1079.6 286.6L1076.8 283.9Z" fill="#028ccd" stroke="#24405e" stroke-width="0.45"/><path d="M1094.8 273.6L1097.5 276.3L1094.8 279.0L1092.1 276.3Z" fill="#0281c8" stroke="#24405e" stroke-width="0.45"/><path d="M1094.6 284.9L1097.3 287.5L1094.6 290.2L1092.0 287.5Z" fill="#0289cc" stroke="#24405e" stroke-width="0.45"/><path d="M1070.9 274.8L1073.5 277.5L1070.9 280.1L1068.2 277.5Z" fill="#027ac5" stroke="#24405e" stroke-width="0.45"/><path d="M1099.8 269.0L1102.5 271.6L1099.8 274.2L1097.2 271.6Z" fill="#0292cf" stroke="#24405e" stroke-width="0.45"/><path d="M1096.2 283.0L1098.8 285.6L1096.2 288.2L1093.6 285.6Z" fill="#029dd4" stroke="#24405e" stroke-width="0.45"/><path d="M1091.6 279.9L1094.2 282.5L1091.6 285.1L1089.0 282.5Z" fill="#0296d1" stroke="#24405e" stroke-width="0.45"/><path d="M1091.1 279.9L1093.7 282.5L1091.1 285.1L1088.5 282.5Z" fill="#039fd5" stroke="#24405e" stroke-width="0.45"/><path d="M1089.6 282.7L1092.1 285.3L1089.6 287.9L1087.0 285.3Z" fill="#0293d0" stroke="#24405e" stroke-width="0.45"/><path d="M1090.1 279.1L1092.6 281.7L1090.1 284.2L1087.6 281.7Z" fill="#027ec7" stroke="#24405e" stroke-width="0.45"/><path d="M1091.1 282.0L1093.6 284.5L1091.1 287.0L1088.6 284.5Z" fill="#028ccd" stroke="#24405e" stroke-width="0.45"/><path d="M1098.4 277.6L1100.9 280.1L1098.4 282.6L1095.9 280.1Z" fill="#0283c9" stroke="#24405e" stroke-width="0.45"/><path d="M1084.9 277.3L1087.3 279.8L1084.9 282.2L1082.4 279.8Z" fill="#0285ca" stroke="#24405e" stroke-width="0.45"/><path d="M1099.4 282.2L1101.8 284.6L1099.4 287.1L1097.0 284.6Z" fill="#029cd4" stroke="#24405e" stroke-width="0.45"/><path d="M1097.5 272.4L1100.0 274.9L1097.5 277.3L1095.1 274.9Z" fill="#0284c9" stroke="#24405e" stroke-width="0.45"/><path d="M1096.5 269.9L1098.9 272.3L1096.5 274.7L1094.1 272.3Z" fill="#0282c8" stroke="#24405e" stroke-width="0.45"/><path d="M1084.1 283.1L1086.5 285.5L1084.1 287.8L1081.7 285.5Z" fill="#03a9d9" stroke="#24405e" stroke-width="0.45"/><path d="M1086.7 283.8L1089.1 286.1L1086.7 288.5L1084.3 286.1Z" fill="#03a9d9" stroke="#24405e" stroke-width="0.45"/><path d="M1098.1 274.7L1100.4 277.1L1098.1 279.5L1095.7 277.1Z" fill="#0280c8" stroke="#24405e" stroke-width="0.45"/><path d="M1089.3 271.0L1091.7 273.4L1089.3 275.7L1087.0 273.4Z" fill="#027fc7" stroke="#24405e" stroke-width="0.45"/><path d="M1084.8 284.1L1087.1 286.5L1084.8 288.8L1082.5 286.5Z" fill="#027ac5" stroke="#24405e" stroke-width="0.45"/><path d="M1089.1 272.2L1091.4 274.5L1089.1 276.8L1086.8 274.5Z" fill="#0291cf" stroke="#24405e" stroke-width="0.45"/><path d="M1089.4 270.1L1091.7 272.4L1089.4 274.7L1087.1 272.4Z" fill="#027bc5" stroke="#24405e" stroke-width="0.45"/><path d="M1080.2 287.9L1082.4 290.1L1080.2 292.3L1078.0 290.1Z" fill="#039ed5" stroke="#24405e" stroke-width="0.45"/><path d="M1073.7 291.0L1075.8 293.1L1073.7 295.3L1071.5 293.1Z" fill="#0294d0" stroke="#24405e" stroke-width="0.45"/><path d="M1099.4 274.8L1101.5 277.0L1099.4 279.1L1097.2 277.0Z" fill="#027cc6" stroke="#24405e" stroke-width="0.45"/><path d="M1110.1 286.7L1112.2 288.9L1110.1 291.0L1108.0 288.9Z" fill="#03a4d7" stroke="#24405e" stroke-width="0.45"/><path d="M1100.4 284.3L1102.5 286.3L1100.4 288.4L1098.3 286.3Z" fill="#028bcc" stroke="#24405e" stroke-width="0.45"/><path d="M1094.7 290.8L1096.8 292.9L1094.7 295.0L1092.6 292.9Z" fill="#03acdb" stroke="#24405e" stroke-width="0.45"/><path d="M1093.5 277.4L1095.5 279.4L1093.5 281.4L1091.5 279.4Z" fill="#0281c8" stroke="#24405e" stroke-width="0.45"/><path d="M1079.9 291.1L1082.0 293.1L1079.9 295.1L1077.9 293.1Z" fill="#029bd3" stroke="#24405e" stroke-width="0.45"/><path d="M1093.3 273.5L1095.3 275.5L1093.3 277.5L1091.3 275.5Z" fill="#027bc6" stroke="#24405e" stroke-width="0.45"/><path d="M1075.8 278.8L1077.8 280.8L1075.8 282.8L1073.8 280.8Z" fill="#0298d2" stroke="#24405e" stroke-width="0.45"/><path d="M1078.3 280.8L1080.3 282.8L1078.3 284.8L1076.3 282.8Z" fill="#029cd4" stroke="#24405e" stroke-width="0.45"/><path d="M1072.1 283.8L1074.1 285.7L1072.1 287.7L1070.1 285.7Z" fill="#0296d1" stroke="#24405e" stroke-width="0.45"/><path d="M1094.7 287.1L1096.6 289.1L1094.7 291.0L1092.7 289.1Z" fill="#03a7d9" stroke="#24405e" stroke-width="0.45"/><path d="M1096.2 286.2L1098.1 288.1L1096.2 290.1L1094.2 288.1Z" fill="#029dd4" stroke="#24405e" stroke-width="0.45"/><path d="M1085.3 280.2L1087.2 282.2L1085.3 284.1L1083.3 282.2Z" fill="#0288cb" stroke="#24405e" stroke-width="0.45"/><path d="M1083.2 284.2L1085.1 286.2L1083.2 288.1L1081.2 286.2Z" fill="#039ed5" stroke="#24405e" stroke-width="0.45"/><path d="M1097.8 281.3L1099.7 283.2L1097.8 285.1L1095.8 283.2Z" fill="#0291cf" stroke="#24405e" stroke-width="0.45"/><path d="M1093.9 288.4L1095.8 290.3L1093.9 292.2L1092.0 290.3Z" fill="#028ece" stroke="#24405e" stroke-width="0.45"/><path d="M1109.6 283.0L1111.5 284.9L1109.6 286.7L1107.8 284.9Z" fill="#03a3d7" stroke="#24405e" stroke-width="0.45"/><path d="M1103.2 278.6L1105.0 280.4L1103.2 282.2L1101.4 280.4Z" fill="#0296d1" stroke="#24405e" stroke-width="0.45"/><path d="M1090.2 285.0L1092.0 286.8L1090.2 288.5L1088.4 286.8Z" fill="#029dd4" stroke="#24405e" stroke-width="0.45"/><path d="M1094.4 283.0L1096.2 284.8L1094.4 286.6L1092.6 284.8Z" fill="#039fd5" stroke="#24405e" stroke-width="0.45"/><path d="M1074.2 280.0L1075.9 281.8L1074.2 283.5L1072.4 281.8Z" fill="#028ece" stroke="#24405e" stroke-width="0.45"/><path d="M1090.8 281.3L1092.5 283.0L1090.8 284.7L1089.0 283.0Z" fill="#029ad3" stroke="#24405e" stroke-width="0.45"/><path d="M974.9 239.7L976.6 241.4L974.9 243.1L973.2 241.4Z" fill="#03b5df" stroke="#24405e" stroke-width="0.45"/><path d="M1081.9 276.5L1083.6 278.2L1081.9 279.8L1080.3 278.2Z" fill="#028acc" stroke="#24405e" stroke-width="0.45"/><path d="M1086.0 285.4L1087.5 286.9L1086.0 288.4L1084.5 286.9Z" fill="#03addb" stroke="#24405e" stroke-width="0.45"/><path d="M1097.9 284.7L1099.4 286.2L1097.9 287.7L1096.4 286.2Z" fill="#029cd4" stroke="#24405e" stroke-width="0.45"/><path d="M1091.3 274.9L1092.7 276.3L1091.3 277.7L1089.8 276.3Z" fill="#0295d1" stroke="#24405e" stroke-width="0.45"/><path d="M1098.5 281.1L1099.9 282.5L1098.5 283.9L1097.1 282.5Z" fill="#029cd4" stroke="#24405e" stroke-width="0.45"/><path d="M1081.8 290.2L1083.2 291.6L1081.8 293.0L1080.4 291.6Z" fill="#03a5d8" stroke="#24405e" stroke-width="0.45"/><path d="M1100.7 273.7L1102.1 275.1L1100.7 276.5L1099.4 275.1Z" fill="#05f7fb" stroke="#24405e" stroke-width="0.45"/><path d="M1179.2 273.7L1180.5 275.1L1179.2 276.5L1177.8 275.1Z" fill="#0290cf" stroke="#24405e" stroke-width="0.45"/><path d="M949.2 180.0L950.4 181.1L949.2 182.3L948.1 181.1Z" fill="#04d6ed" stroke="#24405e" stroke-width="0.45"/><path d="M1102.6 287.1L1103.5 288.0L1102.6 288.9L1101.7 288.0Z" fill="#03a7d9" stroke="#24405e" stroke-width="0.45"/><path d="M1102.7 272.4L1103.5 273.1L1102.7 273.8L1102.0 273.1Z" fill="#0281c8" stroke="#24405e" stroke-width="0.45"/><path d="M1087.4 278.7L1088.1 279.4L1087.4 280.1L1086.7 279.4Z" fill="#0291cf" stroke="#24405e" stroke-width="0.45"/><path d="M1090.3 279.0L1091.0 279.7L1090.3 280.4L1089.6 279.7Z" fill="#0281c8" stroke="#24405e" stroke-width="0.45"/><path d="M1092.0 268.7L1095.6 272.3L1092.0 275.9L1088.4 272.3Z" fill="#0174c2" stroke="#24405e" stroke-width="0.45"/><path d="M1105.3 263.4L1108.9 266.9L1105.3 270.5L1101.8 266.9Z" fill="#0169be" stroke="#24405e" stroke-width="0.45"/><path d="M1094.5 271.6L1098.1 275.2L1094.5 278.7L1091.0 275.2Z" fill="#0172c1" stroke="#24405e" stroke-width="0.45"/><path d="M1096.3 267.6L1099.9 271.2L1096.3 274.7L1092.8 271.2Z" fill="#016abe" stroke="#24405e" stroke-width="0.45"/><path d="M1094.4 274.7L1097.9 278.2L1094.4 281.7L1090.9 278.2Z" fill="#016cbf" stroke="#24405e" stroke-width="0.45"/><path d="M1092.8 265.0L1096.3 268.5L1092.8 272.0L1089.3 268.5Z" fill="#0159b7" stroke="#24405e" stroke-width="0.45"/><path d="M1093.0 270.8L1096.4 274.2L1093.0 277.7L1089.5 274.2Z" fill="#0171c1" stroke="#24405e" stroke-width="0.45"/><path d="M1092.9 264.0L1096.3 267.4L1092.9 270.8L1089.5 267.4Z" fill="#0157b6" stroke="#24405e" stroke-width="0.45"/><path d="M1092.5 268.8L1095.8 272.1L1092.5 275.4L1089.2 272.1Z" fill="#004cb1" stroke="#24405e" stroke-width="0.45"/><path d="M1098.3 259.7L1101.5 262.9L1098.3 266.0L1095.2 262.9Z" fill="#0049b0" stroke="#24405e" stroke-width="0.45"/><path d="M1096.4 261.7L1099.6 264.9L1096.4 268.0L1093.3 264.9Z" fill="#0043ad" stroke="#24405e" stroke-width="0.45"/><path d="M1089.0 272.0L1092.1 275.1L1089.0 278.2L1085.9 275.1Z" fill="#0167bd" stroke="#24405e" stroke-width="0.45"/><path d="M1100.1 270.9L1103.1 273.9L1100.1 277.0L1097.0 273.9Z" fill="#0168bd" stroke="#24405e" stroke-width="0.45"/><path d="M1094.5 273.3L1097.5 276.3L1094.5 279.3L1091.5 276.3Z" fill="#0161ba" stroke="#24405e" stroke-width="0.45"/><path d="M1080.1 267.0L1083.1 270.0L1080.1 273.0L1077.1 270.0Z" fill="#0045ae" stroke="#24405e" stroke-width="0.45"/><path d="M1087.7 271.4L1090.7 274.4L1087.7 277.4L1084.7 274.4Z" fill="#0169bd" stroke="#24405e" stroke-width="0.45"/><path d="M1095.3 258.3L1098.2 261.2L1095.3 264.1L1092.4 261.2Z" fill="#015eb9" stroke="#24405e" stroke-width="0.45"/><path d="M1093.7 268.4L1096.6 271.3L1093.7 274.2L1090.7 271.3Z" fill="#0164bb" stroke="#24405e" stroke-width="0.45"/><path d="M1092.3 265.4L1095.2 268.3L1092.3 271.3L1089.4 268.3Z" fill="#016bbf" stroke="#24405e" stroke-width="0.45"/><path d="M1092.9 259.9L1095.7 262.7L1092.9 265.6L1090.0 262.7Z" fill="#016ec0" stroke="#24405e" stroke-width="0.45"/><path d="M1093.3 279.8L1096.1 282.6L1093.3 285.5L1090.4 282.6Z" fill="#0168bd" stroke="#24405e" stroke-width="0.45"/><path d="M1096.1 269.1L1098.9 271.9L1096.1 274.7L1093.2 271.9Z" fill="#0173c2" stroke="#24405e" stroke-width="0.45"/><path d="M1082.5 269.0L1085.4 271.8L1082.5 274.7L1079.7 271.8Z" fill="#0164bb" stroke="#24405e" stroke-width="0.45"/><path d="M1100.4 268.6L1103.2 271.4L1100.4 274.2L1097.5 271.4Z" fill="#0158b6" stroke="#24405e" stroke-width="0.45"/><path d="M1091.8 266.0L1094.5 268.8L1091.8 271.6L1089.0 268.8Z" fill="#0279c5" stroke="#24405e" stroke-width="0.45"/><path d="M1103.6 276.4L1106.3 279.2L1103.6 281.9L1100.8 279.2Z" fill="#016fc0" stroke="#24405e" stroke-width="0.45"/><path d="M1094.6 270.3L1097.3 273.1L1094.6 275.9L1091.8 273.1Z" fill="#0166bc" stroke="#24405e" stroke-width="0.45"/><path d="M1101.5 271.8L1104.3 274.5L1101.5 277.3L1098.8 274.5Z" fill="#016bbe" stroke="#24405e" stroke-width="0.45"/><path d="M1082.1 267.0L1084.8 269.7L1082.1 272.5L1079.3 269.7Z" fill="#0157b6" stroke="#24405e" stroke-width="0.45"/><path d="M1091.3 276.1L1094.1 278.9L1091.3 281.6L1088.6 278.9Z" fill="#0175c3" stroke="#24405e" stroke-width="0.45"/><path d="M1064.2 282.5L1066.9 285.3L1064.2 288.0L1061.5 285.3Z" fill="#004db1" stroke="#24405e" stroke-width="0.45"/><path d="M1087.6 268.4L1090.3 271.1L1087.6 273.8L1084.8 271.1Z" fill="#0157b6" stroke="#24405e" stroke-width="0.45"/><path d="M1110.9 262.3L1113.6 265.0L1110.9 267.7L1108.2 265.0Z" fill="#0040ac" stroke="#24405e" stroke-width="0.45"/><path d="M1098.2 266.4L1100.9 269.1L1098.2 271.8L1095.5 269.1Z" fill="#0158b6" stroke="#24405e" stroke-width="0.45"/><path d="M1096.3 272.7L1099.0 275.3L1096.3 278.0L1093.7 275.3Z" fill="#0165bc" stroke="#24405e" stroke-width="0.45"/><path d="M1072.5 259.4L1075.2 262.1L1072.5 264.7L1069.8 262.1Z" fill="#0155b5" stroke="#24405e" stroke-width="0.45"/><path d="M1092.9 271.1L1095.6 273.8L1092.9 276.4L1090.3 273.8Z" fill="#0173c2" stroke="#24405e" stroke-width="0.45"/><path d="M1090.9 270.7L1093.5 273.3L1090.9 275.9L1088.3 273.3Z" fill="#0175c3" stroke="#24405e" stroke-width="0.45"/><path d="M1084.0 265.4L1086.6 268.0L1084.0 270.6L1081.4 268.0Z" fill="#015cb8" stroke="#24405e" stroke-width="0.45"/><path d="M1088.1 264.7L1090.7 267.2L1088.1 269.8L1085.5 267.2Z" fill="#016dbf" stroke="#24405e" stroke-width="0.45"/><path d="M1087.3 263.9L1089.9 266.5L1087.3 269.0L1084.7 266.5Z" fill="#0161ba" stroke="#24405e" stroke-width="0.45"/><path d="M1096.9 265.1L1099.5 267.7L1096.9 270.2L1094.4 267.7Z" fill="#0046ae" stroke="#24405e" stroke-width="0.45"/><path d="M1099.1 260.6L1101.7 263.2L1099.1 265.7L1096.6 263.2Z" fill="#015ab7" stroke="#24405e" stroke-width="0.45"/><path d="M1103.0 272.0L1105.6 274.5L1103.0 277.1L1100.5 274.5Z" fill="#0169bd" stroke="#24405e" stroke-width="0.45"/><path d="M1107.8 278.4L1110.4 281.0L1107.8 283.5L1105.3 281.0Z" fill="#015cb8" stroke="#24405e" stroke-width="0.45"/><path d="M1101.3 279.0L1103.8 281.5L1101.3 284.1L1098.8 281.5Z" fill="#016abe" stroke="#24405e" stroke-width="0.45"/><path d="M1018.2 240.6L1020.7 243.0L1018.2 245.4L1015.8 243.0Z" fill="#016fc0" stroke="#24405e" stroke-width="0.45"/><path d="M1096.8 257.6L1099.2 260.0L1096.8 262.5L1094.4 260.0Z" fill="#0047af" stroke="#24405e" stroke-width="0.45"/><path d="M1096.5 261.2L1098.9 263.6L1096.5 266.1L1094.1 263.6Z" fill="#004eb2" stroke="#24405e" stroke-width="0.45"/><path d="M1091.7 269.3L1094.1 271.8L1091.7 274.2L1089.3 271.8Z" fill="#004cb1" stroke="#24405e" stroke-width="0.45"/><path d="M1102.5 267.3L1104.9 269.7L1102.5 272.1L1100.1 269.7Z" fill="#0159b7" stroke="#24405e" stroke-width="0.45"/><path d="M1080.0 263.0L1082.3 265.4L1080.0 267.8L1077.6 265.4Z" fill="#0157b6" stroke="#24405e" stroke-width="0.45"/><path d="M1098.4 261.8L1100.7 264.1L1098.4 266.4L1096.1 264.1Z" fill="#0155b5" stroke="#24405e" stroke-width="0.45"/><path d="M1099.7 275.5L1102.1 277.8L1099.7 280.2L1097.4 277.8Z" fill="#0277c4" stroke="#24405e" stroke-width="0.45"/><path d="M1094.5 265.7L1096.8 268.1L1094.5 270.4L1092.2 268.1Z" fill="#015cb8" stroke="#24405e" stroke-width="0.45"/><path d="M1103.3 275.0L1105.6 277.3L1103.3 279.6L1101.0 277.3Z" fill="#0173c2" stroke="#24405e" stroke-width="0.45"/><path d="M1106.5 268.5L1108.8 270.9L1106.5 273.2L1104.2 270.9Z" fill="#016ec0" stroke="#24405e" stroke-width="0.45"/><path d="M1072.3 277.5L1074.6 279.8L1072.3 282.1L1070.0 279.8Z" fill="#0173c2" stroke="#24405e" stroke-width="0.45"/><path d="M1092.4 261.5L1094.7 263.8L1092.4 266.1L1090.1 263.8Z" fill="#0045ae" stroke="#24405e" stroke-width="0.45"/><path d="M1090.7 261.1L1093.0 263.4L1090.7 265.7L1088.4 263.4Z" fill="#0047af" stroke="#24405e" stroke-width="0.45"/><path d="M1090.5 265.5L1092.7 267.8L1090.5 270.0L1088.2 267.8Z" fill="#0046ae" stroke="#24405e" stroke-width="0.45"/><path d="M1083.7 274.8L1085.9 277.0L1083.7 279.2L1081.4 277.0Z" fill="#0167bd" stroke="#24405e" stroke-width="0.45"/><path d="M1068.3 273.1L1070.6 275.4L1068.3 277.6L1066.1 275.4Z" fill="#0170c1" stroke="#24405e" stroke-width="0.45"/><path d="M1100.4 267.8L1102.6 270.0L1100.4 272.2L1098.1 270.0Z" fill="#0158b6" stroke="#24405e" stroke-width="0.45"/><path d="M1096.1 271.1L1098.3 273.3L1096.1 275.5L1093.9 273.3Z" fill="#0277c4" stroke="#24405e" stroke-width="0.45"/><path d="M1094.3 263.0L1096.4 265.2L1094.3 267.4L1092.1 265.2Z" fill="#0164bb" stroke="#24405e" stroke-width="0.45"/><path d="M1076.7 276.1L1078.8 278.3L1076.7 280.4L1074.5 278.3Z" fill="#015fb9" stroke="#24405e" stroke-width="0.45"/><path d="M1014.2 261.2L1016.3 263.4L1014.2 265.5L1012.0 263.4Z" fill="#0171c1" stroke="#24405e" stroke-width="0.45"/><path d="M1096.8 264.5L1098.9 266.6L1096.8 268.8L1094.6 266.6Z" fill="#015bb8" stroke="#24405e" stroke-width="0.45"/><path d="M1100.4 257.0L1102.5 259.1L1100.4 261.2L1098.3 259.1Z" fill="#004cb1" stroke="#24405e" stroke-width="0.45"/><path d="M1103.1 266.7L1105.2 268.9L1103.1 271.0L1101.0 268.9Z" fill="#0169be" stroke="#24405e" stroke-width="0.45"/><path d="M1105.6 272.8L1107.7 274.9L1105.6 277.0L1103.5 274.9Z" fill="#0160b9" stroke="#24405e" stroke-width="0.45"/><path d="M1114.3 267.5L1116.3 269.6L1114.3 271.7L1112.2 269.6Z" fill="#003fab" stroke="#24405e" stroke-width="0.45"/><path d="M1091.9 262.4L1093.9 264.5L1091.9 266.5L1089.9 264.5Z" fill="#0040ac" stroke="#24405e" stroke-width="0.45"/><path d="M1085.9 261.6L1088.0 263.7L1085.9 265.7L1083.9 263.7Z" fill="#0158b6" stroke="#24405e" stroke-width="0.45"/><path d="M1069.6 286.4L1071.6 288.4L1069.6 290.4L1067.6 288.4Z" fill="#0150b3" stroke="#24405e" stroke-width="0.45"/><path d="M1088.2 267.8L1090.2 269.8L1088.2 271.7L1086.2 269.8Z" fill="#015db9" stroke="#24405e" stroke-width="0.45"/><path d="M1104.5 273.0L1106.5 275.0L1104.5 277.0L1102.5 275.0Z" fill="#0173c2" stroke="#24405e" stroke-width="0.45"/><path d="M1089.9 276.3L1091.8 278.3L1089.9 280.3L1087.9 278.3Z" fill="#0161ba" stroke="#24405e" stroke-width="0.45"/><path d="M1083.3 268.1L1085.2 270.0L1083.3 271.9L1081.4 270.0Z" fill="#0278c4" stroke="#24405e" stroke-width="0.45"/><path d="M1086.2 265.4L1088.1 267.3L1086.2 269.2L1084.3 267.3Z" fill="#0160ba" stroke="#24405e" stroke-width="0.45"/><path d="M1090.4 277.9L1092.3 279.7L1090.4 281.6L1088.6 279.7Z" fill="#0160ba" stroke="#24405e" stroke-width="0.45"/><path d="M1083.0 271.7L1084.8 273.5L1083.0 275.3L1081.2 273.5Z" fill="#016dbf" stroke="#24405e" stroke-width="0.45"/><path d="M1121.0 249.0L1122.8 250.8L1121.0 252.6L1119.2 250.8Z" fill="#0031a3" stroke="#24405e" stroke-width="0.45"/><path d="M1112.9 265.6L1114.7 267.3L1112.9 269.1L1111.1 267.3Z" fill="#0157b6" stroke="#24405e" stroke-width="0.45"/><path d="M1080.9 271.9L1082.6 273.6L1080.9 275.3L1079.2 273.6Z" fill="#0160ba" stroke="#24405e" stroke-width="0.45"/><path d="M1076.3 261.8L1078.0 263.5L1076.3 265.2L1074.6 263.5Z" fill="#015ab7" stroke="#24405e" stroke-width="0.45"/><path d="M1099.4 268.5L1101.0 270.1L1099.4 271.8L1097.7 270.1Z" fill="#0042ad" stroke="#24405e" stroke-width="0.45"/><path d="M1090.1 268.0L1091.7 269.6L1090.1 271.2L1088.5 269.6Z" fill="#016bbf" stroke="#24405e" stroke-width="0.45"/><path d="M1089.3 273.6L1090.9 275.1L1089.3 276.7L1087.8 275.1Z" fill="#016fc0" stroke="#24405e" stroke-width="0.45"/><path d="M1114.9 280.7L1116.3 282.2L1114.9 283.7L1113.4 282.2Z" fill="#0164bb" stroke="#24405e" stroke-width="0.45"/><path d="M1102.1 273.7L1103.6 275.2L1102.1 276.6L1100.6 275.2Z" fill="#0175c3" stroke="#24405e" stroke-width="0.45"/><path d="M1106.1 274.2L1107.6 275.7L1106.1 277.1L1104.7 275.7Z" fill="#015bb7" stroke="#24405e" stroke-width="0.45"/><path d="M1086.0 273.2L1087.5 274.6L1086.0 276.1L1084.6 274.6Z" fill="#016dbf" stroke="#24405e" stroke-width="0.45"/><path d="M1091.0 269.5L1092.4 270.8L1091.0 272.2L1089.7 270.8Z" fill="#0169be" stroke="#24405e" stroke-width="0.45"/><path d="M1091.4 260.7L1092.7 262.1L1091.4 263.4L1090.0 262.1Z" fill="#004bb1" stroke="#24405e" stroke-width="0.45"/><path d="M1102.2 265.3L1103.6 266.6L1102.2 267.9L1100.9 266.6Z" fill="#015bb7" stroke="#24405e" stroke-width="0.45"/><path d="M1084.4 271.7L1085.6 273.0L1084.4 274.3L1083.1 273.0Z" fill="#015eb9" stroke="#24405e" stroke-width="0.45"/><path d="M1092.4 263.1L1093.6 264.4L1092.4 265.6L1091.1 264.4Z" fill="#0046ae" stroke="#24405e" stroke-width="0.45"/><path d="M1093.6 271.2L1094.8 272.4L1093.6 273.6L1092.4 272.4Z" fill="#0155b5" stroke="#24405e" stroke-width="0.45"/><path d="M1087.8 271.7L1088.9 272.8L1087.8 274.0L1086.6 272.8Z" fill="#016abe" stroke="#24405e" stroke-width="0.45"/><path d="M1092.1 269.6L1093.3 270.7L1092.1 271.9L1091.0 270.7Z" fill="#016fc0" stroke="#24405e" stroke-width="0.45"/><path d="M1081.3 257.6L1082.4 258.7L1081.3 259.8L1080.2 258.7Z" fill="#015eb9" stroke="#24405e" stroke-width="0.45"/><path d="M1107.3 268.6L1108.3 269.6L1107.3 270.6L1106.4 269.6Z" fill="#003fab" stroke="#24405e" stroke-width="0.45"/><path d="M1098.2 265.5L1099.2 266.5L1098.2 267.4L1097.3 266.5Z" fill="#0159b7" stroke="#24405e" stroke-width="0.45"/><path d="M1085.7 277.9L1086.6 278.7L1085.7 279.5L1084.9 278.7Z" fill="#016ec0" stroke="#24405e" stroke-width="0.45"/><path d="M1082.5 282.3L1083.3 283.0L1082.5 283.8L1081.8 283.0Z" fill="#0171c1" stroke="#24405e" stroke-width="0.45"/><path d="M1101.7 269.5L1102.4 270.2L1101.7 270.9L1101.0 270.2Z" fill="#0046af" stroke="#24405e" stroke-width="0.45"/><path d="M1107.7 270.3L1108.4 271.0L1107.7 271.7L1107.0 271.0Z" fill="#0172c2" stroke="#24405e" stroke-width="0.45"/><path d="M1093.2 265.2L1093.9 265.9L1093.2 266.6L1092.5 265.9Z" fill="#0042ad" stroke="#24405e" stroke-width="0.45"/><path d="M1101.4 271.1L1102.1 271.8L1101.4 272.5L1100.7 271.8Z" fill="#0165bc" stroke="#24405e" stroke-width="0.45"/><rect x="1052.4" y="170.7" width="7.4" height="7.4" fill="#b4b4b4" stroke="#6f6f6f" stroke-width="0.9"/><text x="1050.6" y="167.6" text-anchor="end" font-size="6.7" fill="#222">ICAN</text><rect x="1239.9" y="192.3" width="7.4" height="7.4" fill="#b4b4b4" stroke="#6f6f6f" stroke-width="0.9"/><text x="1238.1" y="189.2" text-anchor="end" font-size="6.7" fill="#222">IPAN</text><rect x="1013.4" y="219.3" width="7.4" height="7.4" fill="#b4b4b4" stroke="#6f6f6f" stroke-width="0.9"/><text x="1011.6" y="216.2" text-anchor="end" font-size="6.7" fill="#222">CERN</text><rect x="996.1" y="234.1" width="7.4" height="7.4" fill="#b4b4b4" stroke="#6f6f6f" stroke-width="0.9"/><text x="994.3" y="231.0" text-anchor="end" font-size="6.7" fill="#222">ECEN</text><rect x="1114.1" y="220.5" width="7.4" height="7.4" fill="#b4b4b4" stroke="#6f6f6f" stroke-width="0.9"/><text x="1112.3" y="217.4" text-anchor="end" font-size="6.7" fill="#222">IMOR</text><rect x="1075.1" y="241.2" width="7.4" height="7.4" fill="#b4b4b4" stroke="#6f6f6f" stroke-width="0.9"/><text x="1073.3" y="238.1" text-anchor="end" font-size="6.7" fill="#222">ICHI</text><rect x="1140.3" y="268.3" width="7.4" height="7.4" fill="#b4b4b4" stroke="#6f6f6f" stroke-width="0.9"/><text x="1138.5" y="265.2" text-anchor="end" font-size="6.7" fill="#222">CHL2</text><rect x="1064.0" y="283.8" width="7.4" height="7.4" fill="#b4b4b4" stroke="#6f6f6f" stroke-width="0.9"/><text x="1062.2" y="280.7" text-anchor="end" font-size="6.7" fill="#222">CHL1</text><rect x="1289.1" y="255.7" width="7.4" height="7.4" fill="#b4b4b4" stroke="#6f6f6f" stroke-width="0.9"/><text x="1287.3" y="252.6" text-anchor="end" font-size="6.7" fill="#222">ITER</text><rect x="909.5" y="365.0" width="7.4" height="7.4" fill="#b4b4b4" stroke="#6f6f6f" stroke-width="0.9"/><text x="907.7" y="361.9" text-anchor="end" font-size="6.7" fill="#222">LNGL</text><g font-size="8" fill="#1f1f1f"><text x="786.9" y="446" text-anchor="middle">−78.05</text><text x="922.2" y="446" text-anchor="middle">−78</text><text x="1057.4" y="446" text-anchor="middle">−77.95</text><text x="1192.7" y="446" text-anchor="middle">−77.9</text><text x="1328.0" y="446" text-anchor="middle">−77.85</text><text x="783" y="121.5" text-anchor="end">0.9</text><text x="783" y="199.8" text-anchor="end">0.85</text><text x="783" y="278.1" text-anchor="end">0.8</text><text x="783" y="356.4" text-anchor="end">0.75</text><text x="783" y="434.7" text-anchor="end">0.7</text></g><path d="M784.3 118.5h2.6M784.3 196.8h2.6M784.3 275.1h2.6M784.3 353.4h2.6M784.3 431.7h2.6M786.9 432v2.5" stroke="#444" stroke-width="0.6"/><text x="1103.5" y="78.8" text-anchor="middle" font-size="11.3" fill="#1f1f1f">Events location in Chiles Cerro Negro</text><rect x="1344.5" y="109.5" width="13" height="212.5" fill="url(#p2h)" stroke="#555" stroke-width="0.5"/><path d="M1344.5 117.7h13M1344.5 132.8h13M1344.5 148.0h13M1344.5 163.1h13M1344.5 178.2h13M1344.5 193.4h13M1344.5 208.5h13M1344.5 223.6h13M1344.5 238.7h13M1344.5 253.9h13M1344.5 269.0h13M1344.5 284.1h13M1344.5 299.3h13M1344.5 314.4h13" stroke="#444" stroke-width="0.5" opacity=".6"/><text x="1344" y="103" font-size="9.3" fill="#1f1f1f">height</text><g font-size="8" fill="#1f1f1f"><text x="1360" y="135.0">4.4</text><text x="1360" y="165.0">4</text><text x="1360" y="196.0">3.6</text><text x="1360" y="226.0">3.2</text><text x="1360" y="257.0">2.8</text><text x="1360" y="287.0">2.4</text><text x="1360" y="317.0">2</text></g><rect x="1409.5" y="109.5" width="13" height="212.5" fill="url(#p2jet)" stroke="#555" stroke-width="0.5"/><text x="1409" y="103" font-size="9.3" fill="#1f1f1f">depth</text><g font-size="8" fill="#1f1f1f"><text x="1425" y="144.9">0</text><text x="1425" y="189.9">−5</text><text x="1425" y="235.0">−10</text><text x="1425" y="280.0">−15</text><text x="1425" y="325.0">−20</text></g><g transform="translate(1315.5 332.3) scale(0.4935)" font-family="'Liberation Sans',sans-serif"><rect x="0" y="0" width="268" height="203" fill="#ebebeb"/><rect x="76.700" y="1" width="103.300" height="19.800" fill="#fff"/><text x="91.200" y="16.200" font-size="14.500" fill="#222" textLength="73.700" lengthAdjust="spacingAndGlyphs">SIMBOLOGÍA</text><rect x="6.900" y="27.0" width="13.500" height="11.500" fill="#6a6666"/><text x="24.2" y="37.7" font-size="14.500" fill="#1a1a1a" textLength="110.0" lengthAdjust="spacingAndGlyphs">Estaciones Sísmicas</text><circle cx="13.3" cy="49.4" r="6.600" fill="#fa0808"/><text x="23.1" y="55.2" font-size="14.500" fill="#1a1a1a" textLength="168.1" lengthAdjust="spacingAndGlyphs">Eventos de Largo Periodo (LP)</text><circle cx="13.3" cy="69.0" r="6.300" fill="#efefef" stroke="#ee8a8a" stroke-width="0.700"/><text x="23.1" y="74.0" font-size="14.500" fill="#1a1a1a" textLength="204.6" lengthAdjust="spacingAndGlyphs">Eventos de Muy Largo Periodo (VLP)</text><path d="M13.3 81.8l8 8l-8 8l-8-8z" fill="#dd2cc0"/><text x="23.1" y="94.8" font-size="14.500" fill="#1a1a1a" textLength="181.9" lengthAdjust="spacingAndGlyphs">Eventos Volcano Tectónicos (VT)</text><path d="M13.3 102.0l7.500 8l-7.500 8l-7.500-8z" fill="#efefef" stroke="#e0a0dc" stroke-width="0.700"/><text x="23.1" y="115.0" font-size="14.500" fill="#1a1a1a" textLength="237.9" lengthAdjust="spacingAndGlyphs">Eventos Volcano Tectónicos Distales (VTD)</text><circle cx="13.3" cy="129.4" r="6.700" fill="#ed7d31" stroke="#c06020" stroke-width=".5"/><text x="23.8" y="134.4" font-size="14.500" fill="#1a1a1a" textLength="122.7" lengthAdjust="spacingAndGlyphs">Eventos Híbridos (HB)</text><circle cx="13.3" cy="151.0" r="6.800" fill="#70ad47" stroke="#508030" stroke-width=".5"/><text x="24.2" y="156.3" font-size="14.500" fill="#1a1a1a" textLength="95.8" lengthAdjust="spacingAndGlyphs">Explosiones(EXP)</text><path d="M10.3 163.3h6v4h4v6h-4v4h-6v-4h-4v-6h4z" fill="#548235"/><text x="23.8" y="176.3" font-size="14.500" fill="#1a1a1a" textLength="84.8" lengthAdjust="spacingAndGlyphs">Tremor (TREM)</text><path d="M10.3 183.6h6v4h4v6h-4v4h-6v-4h-4v-6h4z" fill="#efefef" stroke="#70a050" stroke-width=".7"/><text x="23.1" y="195.6" font-size="14.500" fill="#1a1a1a" textLength="129.8" lengthAdjust="spacingAndGlyphs">Eventos no clasificados</text></g></svg></div>
<div class="panel" id="p3" style="left:49.0px;top:470.4px;width:700.2px;height:298.4px"><svg width="698.2" height="296.4" viewBox="50.0 471.4 698.2 296.4" class="dj"><path d="M74.7 685.9H630.4M74.7 636.3H630.4M74.7 586.6H630.4M74.7 537.0H630.4M74.7 487.3H630.4" stroke="#ececec" stroke-width="0.7"/><rect x="92.0" y="695.9" width="58" height="39.7" fill="#c3c3cf" stroke="#6a6a6a" stroke-width="0.8"/><rect x="184.6" y="524.5" width="58" height="211.1" fill="#c3c3cf" stroke="#6a6a6a" stroke-width="0.8"/><rect x="277.2" y="492.3" width="58" height="243.3" fill="#c3c3cf" stroke="#6a6a6a" stroke-width="0.8"/><rect x="369.8" y="571.7" width="58" height="163.9" fill="#c3c3cf" stroke="#6a6a6a" stroke-width="0.8"/><rect x="462.4" y="681.0" width="58" height="54.6" fill="#c3c3cf" stroke="#6a6a6a" stroke-width="0.8"/><rect x="555.0" y="720.7" width="58" height="14.9" fill="#c3c3cf" stroke="#6a6a6a" stroke-width="0.8"/><path d="M74.700 735.600H630.400" stroke="#555" stroke-width="0.8"/><path d="M74.7 735.6v3M167.3 735.6v3M259.9 735.6v3M352.5 735.6v3M445.1 735.6v3M537.7 735.6v3M630.3 735.6v3M72 735.6h2.700" stroke="#888" stroke-width="0.6"/><g font-size="7.6" fill="#a6a6a6"><text x="74.7" y="749.8" text-anchor="middle">−0.5</text><text x="167.3" y="749.8" text-anchor="middle">0</text><text x="259.9" y="749.8" text-anchor="middle">0.5</text><text x="352.5" y="749.8" text-anchor="middle">1</text><text x="445.1" y="749.8" text-anchor="middle">1.5</text><text x="537.7" y="749.8" text-anchor="middle">2</text><text x="630.3" y="749.8" text-anchor="middle">2.5</text><text x="73" y="738.6" text-anchor="end">0</text><text x="73" y="688.9" text-anchor="end">20</text><text x="73" y="639.3" text-anchor="end">40</text><text x="73" y="589.6" text-anchor="end">60</text><text x="73" y="540.0" text-anchor="end">80</text><text x="73" y="490.3" text-anchor="end">100</text></g><text x="352.5" y="760" text-anchor="middle" font-size="8.6" fill="#b0b0b0">magnitud</text><text x="696" y="760" text-anchor="middle" font-size="8.6" fill="#b0b0b0">Mag. scale</text><circle cx="685.1" cy="581.6" r="5.1" fill="none" stroke="#777" stroke-width="0.8"/><path d="M707.0 575.0L713.6 581.6L707.0 588.2L700.4 581.6Z" fill="none" stroke="#777" stroke-width="0.80"/><text x="693.5" y="594.8" text-anchor="middle" font-size="7.6" fill="#b0b0b0">2.5</text><circle cx="685.1" cy="607.4" r="3.9" fill="none" stroke="#777" stroke-width="0.8"/><path d="M707.0 602.3L712.1 607.4L707.0 612.5L701.9 607.4Z" fill="none" stroke="#777" stroke-width="0.80"/><text x="693.5" y="620.6" text-anchor="middle" font-size="7.6" fill="#b0b0b0">1.9</text><circle cx="685.1" cy="633.2" r="2.8" fill="none" stroke="#777" stroke-width="0.8"/><path d="M707.0 629.6L710.6 633.2L707.0 636.8L703.4 633.2Z" fill="none" stroke="#777" stroke-width="0.80"/><text x="693.5" y="642.7" text-anchor="middle" font-size="7.6" fill="#b0b0b0">1.3</text><circle cx="685.1" cy="658.6" r="1.7" fill="none" stroke="#777" stroke-width="0.8"/><path d="M707.0 656.4L709.2 658.6L707.0 660.8L704.8 658.6Z" fill="none" stroke="#777" stroke-width="0.80"/><text x="693.5" y="668.1" text-anchor="middle" font-size="7.6" fill="#b0b0b0">0.8</text><circle cx="685.1" cy="684.4" r="0.5" fill="#888"/><circle cx="707" cy="684.4" r="0.5" fill="#888"/><text x="693.5" y="691.4" text-anchor="middle" font-size="7.6" fill="#b0b0b0">0.2</text><circle cx="685.1" cy="710.2" r="0.9" fill="#888"/><circle cx="707" cy="710.2" r="0.9" fill="#888"/><text x="696.5" y="717.2" text-anchor="middle" font-size="7.6" fill="#b0b0b0">-0.4</text></svg></div>
<div class="panel" id="p4" style="left:754.5px;top:470.4px;width:700.2px;height:298.4px"><svg width="698.2" height="296.4" viewBox="755.5 471.4 698.2 296.4" class="dj"><path d="M853.0 492.0V736.4M917.3 492.0V736.4M981.7 492.0V736.4M1046.0 492.0V736.4M1110.3 492.0V736.4M1174.7 492.0V736.4M1239.0 492.0V736.4M1303.4 492.0V736.4M788.6 730.8H1355.6M788.6 721.9H1355.6M788.6 713.0H1355.6M788.6 704.1H1355.6M788.6 695.2H1355.6M788.6 686.4H1355.6M788.6 677.5H1355.6M788.6 668.6H1355.6M788.6 659.7H1355.6M788.6 650.8H1355.6M788.6 641.9H1355.6M788.6 633.1H1355.6M788.6 624.2H1355.6M788.6 615.3H1355.6M788.6 606.4H1355.6M788.6 597.5H1355.6M788.6 588.6H1355.6M788.6 579.7H1355.6M788.6 570.9H1355.6M788.6 562.0H1355.6M788.6 553.1H1355.6M788.6 535.3H1355.6M788.6 526.4H1355.6M788.6 517.5H1355.6M788.6 508.7H1355.6M788.6 499.8H1355.6" stroke="#8c8c8c" stroke-width="0.75" fill="none"/><rect x="788.6" y="492.0" width="567.0" height="244.4" fill="none" stroke="#666" stroke-width="0.9"/><path d="M788.6 544.2H1355.6" stroke="#2a2a2a" stroke-width="1"/><path d="M788.6 522.0L798.9 521.7L801.9 520.8L806.3 522.0L812.3 521.7L816.7 520.8L822.7 521.7L827.1 521.4L831.6 519.9L839.0 519.6L850.8 518.1L859.7 517.2L862.7 516.6L867.1 518.1L871.6 519.0L876.9 520.8L883.5 519.6L892.3 517.5L898.3 515.8L902.7 516.6L907.2 519.0L910.7 519.6L917.6 517.8L927.9 516.6L939.8 515.2L951.7 513.7L966.5 512.5L981.3 510.1L993.2 508.9L1002.1 506.9L1011.0 506.9L1016.9 507.2L1025.8 507.4L1034.7 508.9L1046.6 510.1L1058.4 508.6L1070.3 507.4L1076.2 507.7L1082.1 508.9L1094.0 508.9L1099.9 507.7L1105.9 506.9L1114.8 507.4L1123.7 508.9L1135.5 510.4L1147.4 511.9L1159.3 512.8L1171.1 512.5L1185.9 512.8L1200.8 512.8L1212.6 513.1L1224.5 513.7L1239.3 514.0L1254.2 514.0L1266.0 514.3L1271.9 514.6L1277.9 514.0L1289.7 514.0L1295.7 514.9L1307.5 514.9L1313.5 515.2L1319.4 515.5L1325.3 515.2L1337.2 515.8L1355.6 516.0" stroke="#000" stroke-width="1.9" fill="none" stroke-linejoin="round"/><circle cx="789.9" cy="668.6" r="0.82" fill="#fd8400" opacity="0.9"/><circle cx="843.9" cy="704.1" r="0.82" fill="#d30000" opacity="0.9"/><circle cx="882.6" cy="695.2" r="0.63" fill="#fa0200" opacity="0.9"/><circle cx="908.0" cy="721.9" r="0.63" fill="#800000" opacity="0.9"/><circle cx="900.6" cy="686.4" r="0.53" fill="#fb2d00" opacity="0.9"/><circle cx="979.1" cy="720.1" r="0.53" fill="#880000" opacity="0.9"/><circle cx="840.1" cy="588.6" r="0.45" fill="#05f7fb" opacity="0.9"/><circle cx="901.9" cy="588.6" r="0.45" fill="#05f7fb" opacity="0.9"/><circle cx="904.4" cy="597.5" r="0.45" fill="#25ffdf" opacity="0.9"/><circle cx="914.7" cy="615.3" r="0.60" fill="#7aff88" opacity="0.9"/><circle cx="917.3" cy="620.6" r="0.60" fill="#93ff6e" opacity="0.9"/><circle cx="985.5" cy="624.2" r="0.68" fill="#a4ff5d" opacity="0.9"/><circle cx="1040.9" cy="586.8" r="0.45" fill="#05f0f9" opacity="0.9"/><circle cx="1084.6" cy="588.6" r="0.45" fill="#05f7fb" opacity="0.9"/><circle cx="1226.2" cy="589.5" r="0.45" fill="#05fafd" opacity="0.9"/><circle cx="1058.9" cy="566.4" r="0.45" fill="#03a4d7" opacity="0.9"/><circle cx="1097.5" cy="553.1" r="0.60" fill="#0173c2" opacity="0.9"/><circle cx="1100.1" cy="559.3" r="0.68" fill="#028acc" opacity="0.9"/><circle cx="1097.5" cy="512.2" r="0.60" fill="#000083" opacity="0.9"/><circle cx="1087.2" cy="526.4" r="0.53" fill="#002198" opacity="0.9"/><circle cx="1082.0" cy="527.3" r="0.53" fill="#002399" opacity="0.9"/><circle cx="1161.8" cy="699.7" r="0.63" fill="#e70000" opacity="0.9"/><circle cx="1002.2" cy="570.9" r="0.60" fill="#03b5df" opacity="0.9"/><path d="M1070.3 561.1L1075.0 565.8L1070.3 570.5L1065.6 565.8Z" fill="#03a2d6" stroke="#24405e" stroke-width="0.45"/><path d="M1104.4 551.2L1108.5 555.2L1104.4 559.3L1100.4 555.2Z" fill="#027ac5" stroke="#24405e" stroke-width="0.45"/><path d="M1103.9 551.7L1108.0 555.8L1103.9 559.8L1099.9 555.8Z" fill="#027cc6" stroke="#24405e" stroke-width="0.45"/><path d="M1057.4 563.8L1061.3 567.7L1057.4 571.6L1053.4 567.7Z" fill="#03a9d9" stroke="#24405e" stroke-width="0.45"/><path d="M1102.6 563.9L1106.5 567.7L1102.6 571.6L1098.7 567.7Z" fill="#03a9da" stroke="#24405e" stroke-width="0.45"/><path d="M1063.9 563.1L1067.8 567.0L1063.9 570.8L1060.0 567.0Z" fill="#03a6d8" stroke="#24405e" stroke-width="0.45"/><path d="M1079.6 565.2L1083.5 569.0L1079.6 572.9L1075.8 569.0Z" fill="#03aedc" stroke="#24405e" stroke-width="0.45"/><path d="M997.1 553.8L1000.8 557.5L997.1 561.3L993.3 557.5Z" fill="#0283c9" stroke="#24405e" stroke-width="0.45"/><path d="M1058.9 564.6L1062.7 568.3L1058.9 572.1L1055.2 568.3Z" fill="#03abda" stroke="#24405e" stroke-width="0.45"/><path d="M1080.0 558.2L1083.7 561.9L1080.0 565.6L1076.3 561.9Z" fill="#0293d0" stroke="#24405e" stroke-width="0.45"/><path d="M1078.8 549.8L1082.5 553.4L1078.8 557.1L1075.2 553.4Z" fill="#0174c2" stroke="#24405e" stroke-width="0.45"/><path d="M1091.6 547.0L1095.1 550.5L1091.6 554.1L1088.0 550.5Z" fill="#0169be" stroke="#24405e" stroke-width="0.45"/><path d="M1081.3 549.4L1084.8 552.9L1081.3 556.4L1077.8 552.9Z" fill="#0172c1" stroke="#24405e" stroke-width="0.45"/><path d="M1083.0 547.1L1086.5 550.7L1083.0 554.2L1079.5 550.7Z" fill="#016abe" stroke="#24405e" stroke-width="0.45"/><path d="M1081.1 547.7L1084.7 551.3L1081.1 554.8L1077.6 551.3Z" fill="#016cbf" stroke="#24405e" stroke-width="0.45"/><path d="M1075.4 553.1L1078.9 556.7L1075.4 560.2L1071.9 556.7Z" fill="#0280c8" stroke="#24405e" stroke-width="0.45"/><path d="M1079.7 542.7L1083.2 546.2L1079.7 549.7L1076.2 546.2Z" fill="#0159b7" stroke="#24405e" stroke-width="0.45"/><path d="M1092.6 553.1L1096.1 556.6L1092.6 560.0L1089.1 556.6Z" fill="#027fc7" stroke="#24405e" stroke-width="0.45"/><path d="M1118.1 564.7L1121.5 568.2L1118.1 571.6L1114.6 568.2Z" fill="#03abda" stroke="#24405e" stroke-width="0.45"/><path d="M1079.8 549.2L1083.3 552.7L1079.8 556.1L1076.4 552.7Z" fill="#0171c1" stroke="#24405e" stroke-width="0.45"/><path d="M1119.4 564.4L1122.8 567.8L1119.4 571.2L1115.9 567.8Z" fill="#03a9da" stroke="#24405e" stroke-width="0.45"/><path d="M1079.7 542.2L1083.1 545.6L1079.7 549.0L1076.3 545.6Z" fill="#0157b6" stroke="#24405e" stroke-width="0.45"/><path d="M1072.1 558.6L1075.4 561.9L1072.1 565.3L1068.7 561.9Z" fill="#0293d0" stroke="#24405e" stroke-width="0.45"/><path d="M1079.7 565.5L1083.0 568.8L1079.7 572.2L1076.3 568.8Z" fill="#03addb" stroke="#24405e" stroke-width="0.45"/><path d="M1065.8 564.6L1069.1 567.9L1065.8 571.3L1062.5 567.9Z" fill="#03aada" stroke="#24405e" stroke-width="0.45"/><path d="M1075.3 562.2L1078.6 565.5L1075.3 568.8L1071.9 565.5Z" fill="#03a1d6" stroke="#24405e" stroke-width="0.45"/><path d="M1079.4 539.3L1082.7 542.6L1079.4 545.9L1076.1 542.6Z" fill="#004cb1" stroke="#24405e" stroke-width="0.45"/><path d="M1078.6 558.3L1081.8 561.5L1078.6 564.8L1075.3 561.5Z" fill="#0292cf" stroke="#24405e" stroke-width="0.45"/><path d="M1075.5 561.5L1078.7 564.8L1075.5 568.0L1072.2 564.8Z" fill="#039ed5" stroke="#24405e" stroke-width="0.45"/><path d="M1081.1 552.4L1084.3 555.7L1081.1 558.9L1077.8 555.7Z" fill="#027cc6" stroke="#24405e" stroke-width="0.45"/><path d="M1082.4 561.7L1085.5 564.9L1082.4 568.0L1079.2 564.9Z" fill="#039ed5" stroke="#24405e" stroke-width="0.45"/><path d="M1084.9 538.9L1088.0 542.0L1084.9 545.2L1081.7 542.0Z" fill="#0049b0" stroke="#24405e" stroke-width="0.45"/><path d="M1077.9 564.8L1081.1 568.0L1077.9 571.1L1074.8 568.0Z" fill="#03aada" stroke="#24405e" stroke-width="0.45"/><path d="M1083.1 537.1L1086.2 540.3L1083.1 543.4L1080.0 540.3Z" fill="#0043ad" stroke="#24405e" stroke-width="0.45"/><path d="M1083.9 553.7L1087.0 556.8L1083.9 559.9L1080.8 556.8Z" fill="#0280c8" stroke="#24405e" stroke-width="0.45"/><path d="M1076.0 546.8L1079.1 549.9L1076.0 553.0L1072.9 549.9Z" fill="#0167bd" stroke="#24405e" stroke-width="0.45"/><path d="M1070.2 561.8L1073.2 564.9L1070.2 568.0L1067.1 564.9Z" fill="#039ed5" stroke="#24405e" stroke-width="0.45"/><path d="M1061.7 559.6L1064.8 562.7L1061.7 565.8L1058.7 562.7Z" fill="#0296d1" stroke="#24405e" stroke-width="0.45"/><path d="M1069.3 562.7L1072.3 565.8L1069.3 568.9L1066.2 565.8Z" fill="#03a2d6" stroke="#24405e" stroke-width="0.45"/><path d="M1062.5 553.9L1065.6 556.9L1062.5 560.0L1059.5 556.9Z" fill="#0281c8" stroke="#24405e" stroke-width="0.45"/><path d="M1086.6 547.1L1089.6 550.2L1086.6 553.2L1083.5 550.2Z" fill="#0168bd" stroke="#24405e" stroke-width="0.45"/><path d="M1078.4 565.9L1081.5 569.0L1078.4 572.0L1075.4 569.0Z" fill="#03aedc" stroke="#24405e" stroke-width="0.45"/><path d="M1075.5 554.5L1078.6 557.6L1075.5 560.6L1072.5 557.6Z" fill="#0283c9" stroke="#24405e" stroke-width="0.45"/><path d="M1081.3 545.3L1084.3 548.3L1081.3 551.3L1078.2 548.3Z" fill="#0161ba" stroke="#24405e" stroke-width="0.45"/><path d="M1067.6 537.8L1070.6 540.9L1067.6 543.9L1064.5 540.9Z" fill="#0045ae" stroke="#24405e" stroke-width="0.45"/><path d="M1071.0 585.6L1074.0 588.6L1071.0 591.6L1067.9 588.6Z" fill="#05f7fb" stroke="#24405e" stroke-width="0.45"/><path d="M1068.4 563.1L1071.4 566.1L1068.4 569.1L1065.4 566.1Z" fill="#03a3d7" stroke="#24405e" stroke-width="0.45"/><path d="M1089.1 557.7L1092.1 560.6L1089.1 563.6L1086.2 560.6Z" fill="#028fce" stroke="#24405e" stroke-width="0.45"/><path d="M1074.8 547.4L1077.8 550.4L1074.8 553.4L1071.8 550.4Z" fill="#0169bd" stroke="#24405e" stroke-width="0.45"/><path d="M1074.8 557.8L1077.8 560.7L1074.8 563.7L1071.8 560.7Z" fill="#028fce" stroke="#24405e" stroke-width="0.45"/><path d="M1086.6 556.4L1089.6 559.4L1086.6 562.3L1083.7 559.4Z" fill="#028acc" stroke="#24405e" stroke-width="0.45"/><path d="M1082.0 544.6L1085.0 547.5L1082.0 550.4L1079.1 547.5Z" fill="#015eb9" stroke="#24405e" stroke-width="0.45"/><path d="M1080.5 546.2L1083.4 549.1L1080.5 552.0L1077.5 549.1Z" fill="#0164bb" stroke="#24405e" stroke-width="0.45"/><path d="M1079.2 548.2L1082.1 551.1L1079.2 554.0L1076.3 551.1Z" fill="#016bbf" stroke="#24405e" stroke-width="0.45"/><path d="M1231.3 564.4L1234.2 567.3L1231.3 570.2L1228.5 567.3Z" fill="#03a7d9" stroke="#24405e" stroke-width="0.45"/><path d="M1079.7 548.9L1082.6 551.7L1079.7 554.6L1076.8 551.7Z" fill="#016ec0" stroke="#24405e" stroke-width="0.45"/><path d="M1080.1 547.5L1083.0 550.3L1080.1 553.2L1077.2 550.3Z" fill="#0168bd" stroke="#24405e" stroke-width="0.45"/><path d="M1082.8 550.3L1085.6 553.1L1082.8 556.0L1079.9 553.1Z" fill="#0173c2" stroke="#24405e" stroke-width="0.45"/><path d="M1096.0 561.8L1098.9 564.6L1096.0 567.4L1093.2 564.6Z" fill="#029dd4" stroke="#24405e" stroke-width="0.45"/><path d="M1069.9 546.3L1072.7 549.1L1069.9 552.0L1067.0 549.1Z" fill="#0164bb" stroke="#24405e" stroke-width="0.45"/><path d="M1086.8 543.1L1089.7 546.0L1086.8 548.8L1084.0 546.0Z" fill="#0158b6" stroke="#24405e" stroke-width="0.45"/><path d="M1078.7 552.0L1081.4 554.8L1078.7 557.6L1075.9 554.8Z" fill="#0279c5" stroke="#24405e" stroke-width="0.45"/><path d="M1089.9 549.4L1092.7 552.1L1089.9 554.9L1087.1 552.1Z" fill="#016fc0" stroke="#24405e" stroke-width="0.45"/><path d="M1081.3 546.9L1084.1 549.6L1081.3 552.4L1078.6 549.6Z" fill="#0166bc" stroke="#24405e" stroke-width="0.45"/><path d="M1088.0 548.3L1090.7 551.0L1088.0 553.8L1085.2 551.0Z" fill="#016bbe" stroke="#24405e" stroke-width="0.45"/><path d="M1069.5 542.9L1072.2 545.7L1069.5 548.4L1066.7 545.7Z" fill="#0157b6" stroke="#24405e" stroke-width="0.45"/><path d="M1078.3 551.0L1081.0 553.7L1078.3 556.5L1075.5 553.7Z" fill="#0175c3" stroke="#24405e" stroke-width="0.45"/><path d="M1073.6 560.1L1076.3 562.8L1073.6 565.6L1070.8 562.8Z" fill="#0297d2" stroke="#24405e" stroke-width="0.45"/><path d="M1052.4 540.1L1055.2 542.9L1052.4 545.6L1049.7 542.9Z" fill="#004db1" stroke="#24405e" stroke-width="0.45"/><path d="M1067.0 557.2L1069.8 560.0L1067.0 562.7L1064.3 560.0Z" fill="#028ccd" stroke="#24405e" stroke-width="0.45"/><path d="M1074.7 542.9L1077.4 545.6L1074.7 548.3L1071.9 545.6Z" fill="#0157b6" stroke="#24405e" stroke-width="0.45"/><path d="M1096.8 536.8L1099.5 539.5L1096.8 542.2L1094.1 539.5Z" fill="#0040ac" stroke="#24405e" stroke-width="0.45"/><path d="M1081.6 554.2L1084.3 556.9L1081.6 559.6L1078.9 556.9Z" fill="#0281c8" stroke="#24405e" stroke-width="0.45"/><path d="M1084.8 543.2L1087.5 545.9L1084.8 548.6L1082.1 545.9Z" fill="#0158b6" stroke="#24405e" stroke-width="0.45"/><path d="M1083.0 546.9L1085.7 549.6L1083.0 552.2L1080.3 549.6Z" fill="#0165bc" stroke="#24405e" stroke-width="0.45"/><path d="M1060.3 542.6L1063.0 545.2L1060.3 547.9L1057.7 545.2Z" fill="#0155b5" stroke="#24405e" stroke-width="0.45"/><path d="M1079.8 550.5L1082.4 553.2L1079.8 555.8L1077.1 553.2Z" fill="#0173c2" stroke="#24405e" stroke-width="0.45"/><path d="M1081.4 556.5L1084.0 559.2L1081.4 561.8L1078.7 559.2Z" fill="#0289cc" stroke="#24405e" stroke-width="0.45"/><path d="M1058.8 552.5L1061.4 555.1L1058.8 557.7L1056.2 555.1Z" fill="#027ac5" stroke="#24405e" stroke-width="0.45"/><path d="M1086.3 558.8L1089.0 561.4L1086.3 564.0L1083.7 561.4Z" fill="#0292cf" stroke="#24405e" stroke-width="0.45"/><path d="M1082.9 561.9L1085.5 564.5L1082.9 567.1L1080.3 564.5Z" fill="#029dd4" stroke="#24405e" stroke-width="0.45"/><path d="M1077.8 551.1L1080.4 553.7L1077.8 556.3L1075.2 553.7Z" fill="#0175c3" stroke="#24405e" stroke-width="0.45"/><path d="M1078.5 560.1L1081.1 562.6L1078.5 565.2L1075.9 562.6Z" fill="#0296d1" stroke="#24405e" stroke-width="0.45"/><path d="M1071.3 544.5L1073.9 547.1L1071.3 549.7L1068.7 547.1Z" fill="#015cb8" stroke="#24405e" stroke-width="0.45"/><path d="M1075.1 548.9L1077.7 551.5L1075.1 554.1L1072.5 551.5Z" fill="#016dbf" stroke="#24405e" stroke-width="0.45"/><path d="M1078.0 562.5L1080.6 565.1L1078.0 567.7L1075.4 565.1Z" fill="#039fd5" stroke="#24405e" stroke-width="0.45"/><path d="M1076.6 559.2L1079.1 561.7L1076.6 564.3L1074.0 561.7Z" fill="#0293d0" stroke="#24405e" stroke-width="0.45"/><path d="M1074.4 545.8L1077.0 548.3L1074.4 550.9L1071.9 548.3Z" fill="#0161ba" stroke="#24405e" stroke-width="0.45"/><path d="M1083.6 538.6L1086.1 541.1L1083.6 543.7L1081.0 541.1Z" fill="#0046ae" stroke="#24405e" stroke-width="0.45"/><path d="M1085.7 543.9L1088.2 546.4L1085.7 549.0L1083.1 546.4Z" fill="#015ab7" stroke="#24405e" stroke-width="0.45"/><path d="M1089.4 547.8L1091.9 550.4L1089.4 553.0L1086.8 550.4Z" fill="#0169bd" stroke="#24405e" stroke-width="0.45"/><path d="M1093.9 544.5L1096.5 547.1L1093.9 549.6L1091.4 547.1Z" fill="#015cb8" stroke="#24405e" stroke-width="0.45"/><path d="M1087.7 548.2L1090.3 550.8L1087.7 553.3L1085.2 550.8Z" fill="#016abe" stroke="#24405e" stroke-width="0.45"/><path d="M1077.0 553.8L1079.6 556.3L1077.0 558.8L1074.5 556.3Z" fill="#027ec7" stroke="#24405e" stroke-width="0.45"/><path d="M1078.0 557.4L1080.5 559.9L1078.0 562.4L1075.5 559.9Z" fill="#028ccd" stroke="#24405e" stroke-width="0.45"/><path d="M1085.0 555.1L1087.5 557.6L1085.0 560.1L1082.5 557.6Z" fill="#0283c9" stroke="#24405e" stroke-width="0.45"/><path d="M1008.7 549.8L1011.1 552.2L1008.7 554.6L1006.2 552.2Z" fill="#016fc0" stroke="#24405e" stroke-width="0.45"/><path d="M1083.5 538.8L1085.9 541.3L1083.5 543.7L1081.0 541.3Z" fill="#0047af" stroke="#24405e" stroke-width="0.45"/><path d="M1083.2 540.9L1085.6 543.3L1083.2 545.7L1080.7 543.3Z" fill="#004eb2" stroke="#24405e" stroke-width="0.45"/><path d="M1072.1 555.5L1074.5 557.9L1072.1 560.4L1069.7 557.9Z" fill="#0285ca" stroke="#24405e" stroke-width="0.45"/><path d="M1085.9 561.9L1088.3 564.3L1085.9 566.8L1083.5 564.3Z" fill="#029cd4" stroke="#24405e" stroke-width="0.45"/><path d="M1084.2 555.2L1086.6 557.7L1084.2 560.1L1081.7 557.7Z" fill="#0284c9" stroke="#24405e" stroke-width="0.45"/><path d="M1078.6 540.3L1081.0 542.7L1078.6 545.1L1076.2 542.7Z" fill="#004cb1" stroke="#24405e" stroke-width="0.45"/><path d="M1083.2 554.8L1085.6 557.1L1083.2 559.5L1080.8 557.1Z" fill="#0282c8" stroke="#24405e" stroke-width="0.45"/><path d="M1071.3 565.3L1073.7 567.6L1071.3 570.0L1069.0 567.6Z" fill="#03a9d9" stroke="#24405e" stroke-width="0.45"/><path d="M1088.8 543.7L1091.2 546.1L1088.8 548.5L1086.5 546.1Z" fill="#0159b7" stroke="#24405e" stroke-width="0.45"/><path d="M1067.4 543.2L1069.8 545.6L1067.4 548.0L1065.0 545.6Z" fill="#0157b6" stroke="#24405e" stroke-width="0.45"/><path d="M1073.8 565.3L1076.2 567.6L1073.8 570.0L1071.5 567.6Z" fill="#03a9d9" stroke="#24405e" stroke-width="0.45"/><path d="M1084.7 554.3L1087.0 556.7L1084.7 559.0L1082.3 556.7Z" fill="#0280c8" stroke="#24405e" stroke-width="0.45"/><path d="M1076.4 554.0L1078.7 556.3L1076.4 558.7L1074.0 556.3Z" fill="#027fc7" stroke="#24405e" stroke-width="0.45"/><path d="M1085.0 542.8L1087.3 545.2L1085.0 547.5L1082.6 545.2Z" fill="#0155b5" stroke="#24405e" stroke-width="0.45"/><path d="M1086.3 551.9L1088.6 554.2L1086.3 556.6L1083.9 554.2Z" fill="#0277c4" stroke="#24405e" stroke-width="0.45"/><path d="M1081.3 544.7L1083.6 547.1L1081.3 549.4L1078.9 547.1Z" fill="#015cb8" stroke="#24405e" stroke-width="0.45"/><path d="M1089.7 550.9L1092.0 553.2L1089.7 555.5L1087.3 553.2Z" fill="#0173c2" stroke="#24405e" stroke-width="0.45"/><path d="M1072.0 552.8L1074.4 555.1L1072.0 557.5L1069.7 555.1Z" fill="#027ac5" stroke="#24405e" stroke-width="0.45"/><path d="M1076.1 559.0L1078.4 561.3L1076.1 563.6L1073.8 561.3Z" fill="#0291cf" stroke="#24405e" stroke-width="0.45"/><path d="M1092.7 549.5L1095.0 551.8L1092.7 554.2L1090.4 551.8Z" fill="#016ec0" stroke="#24405e" stroke-width="0.45"/><path d="M1076.4 553.0L1078.7 555.3L1076.4 557.6L1074.1 555.3Z" fill="#027bc5" stroke="#24405e" stroke-width="0.45"/><path d="M1060.2 550.8L1062.5 553.1L1060.2 555.4L1057.9 553.1Z" fill="#0173c2" stroke="#24405e" stroke-width="0.45"/><path d="M1079.2 538.5L1081.5 540.8L1079.2 543.1L1076.9 540.8Z" fill="#0045ae" stroke="#24405e" stroke-width="0.45"/><path d="M1077.6 539.1L1079.9 541.4L1077.6 543.7L1075.4 541.4Z" fill="#0047af" stroke="#24405e" stroke-width="0.45"/><path d="M1077.4 538.7L1079.7 541.0L1077.4 543.2L1075.2 541.0Z" fill="#0046ae" stroke="#24405e" stroke-width="0.45"/><path d="M1071.0 547.7L1073.2 549.9L1071.0 552.2L1068.7 549.9Z" fill="#0167bd" stroke="#24405e" stroke-width="0.45"/><path d="M1056.3 550.3L1058.6 552.5L1056.3 554.7L1054.1 552.5Z" fill="#0170c1" stroke="#24405e" stroke-width="0.45"/><path d="M1086.8 543.8L1089.1 546.0L1086.8 548.2L1084.6 546.0Z" fill="#0158b6" stroke="#24405e" stroke-width="0.45"/><path d="M1082.8 552.1L1085.0 554.3L1082.8 556.5L1080.6 554.3Z" fill="#0277c4" stroke="#24405e" stroke-width="0.45"/><path d="M1081.0 547.0L1083.2 549.2L1081.0 551.3L1078.8 549.2Z" fill="#0164bb" stroke="#24405e" stroke-width="0.45"/><path d="M1064.3 545.7L1066.5 547.8L1064.3 550.0L1062.1 547.8Z" fill="#015fb9" stroke="#24405e" stroke-width="0.45"/><path d="M1067.7 562.6L1069.8 564.8L1067.7 566.9L1065.5 564.8Z" fill="#039ed5" stroke="#24405e" stroke-width="0.45"/><path d="M1004.8 550.5L1007.0 552.6L1004.8 554.8L1002.7 552.6Z" fill="#0171c1" stroke="#24405e" stroke-width="0.45"/><path d="M1061.4 559.8L1063.6 562.0L1061.4 564.1L1059.3 562.0Z" fill="#0294d0" stroke="#24405e" stroke-width="0.45"/><path d="M1085.9 553.5L1088.0 555.7L1085.9 557.8L1083.7 555.7Z" fill="#027cc6" stroke="#24405e" stroke-width="0.45"/><path d="M1083.4 544.7L1085.6 546.8L1083.4 548.9L1081.3 546.8Z" fill="#015bb8" stroke="#24405e" stroke-width="0.45"/><path d="M1096.1 564.3L1098.2 566.4L1096.1 568.5L1094.0 566.4Z" fill="#03a4d7" stroke="#24405e" stroke-width="0.45"/><path d="M1086.9 540.6L1089.0 542.7L1086.9 544.8L1084.8 542.7Z" fill="#004cb1" stroke="#24405e" stroke-width="0.45"/><path d="M1089.5 548.5L1091.6 550.6L1089.5 552.7L1087.4 550.6Z" fill="#0169be" stroke="#24405e" stroke-width="0.45"/><path d="M1086.9 557.5L1089.0 559.5L1086.9 561.6L1084.8 559.5Z" fill="#028bcc" stroke="#24405e" stroke-width="0.45"/><path d="M1091.8 545.9L1093.9 548.0L1091.8 550.1L1089.8 548.0Z" fill="#0160b9" stroke="#24405e" stroke-width="0.45"/><path d="M1100.1 537.2L1102.1 539.3L1100.1 541.4L1098.0 539.3Z" fill="#003fab" stroke="#24405e" stroke-width="0.45"/><path d="M1081.5 566.4L1083.5 568.4L1081.5 570.5L1079.4 568.4Z" fill="#03acdb" stroke="#24405e" stroke-width="0.45"/><path d="M1078.8 537.4L1080.8 539.4L1078.8 541.5L1076.7 539.4Z" fill="#0040ac" stroke="#24405e" stroke-width="0.45"/><path d="M1080.3 554.8L1082.4 556.9L1080.3 558.9L1078.3 556.9Z" fill="#0281c8" stroke="#24405e" stroke-width="0.45"/><path d="M1067.4 561.9L1069.4 564.0L1067.4 566.0L1065.4 564.0Z" fill="#029bd3" stroke="#24405e" stroke-width="0.45"/><path d="M1073.1 543.8L1075.1 545.9L1073.1 547.9L1071.1 545.9Z" fill="#0158b6" stroke="#24405e" stroke-width="0.45"/><path d="M1080.1 553.4L1082.1 555.4L1080.1 557.5L1078.1 555.4Z" fill="#027bc6" stroke="#24405e" stroke-width="0.45"/><path d="M1063.5 561.1L1065.5 563.1L1063.5 565.2L1061.5 563.1Z" fill="#0298d2" stroke="#24405e" stroke-width="0.45"/><path d="M1057.6 541.8L1059.6 543.8L1057.6 545.8L1055.6 543.8Z" fill="#0150b3" stroke="#24405e" stroke-width="0.45"/><path d="M1075.3 545.4L1077.3 547.4L1075.3 549.4L1073.3 547.4Z" fill="#015db9" stroke="#24405e" stroke-width="0.45"/><path d="M1065.9 562.3L1067.8 564.3L1065.9 566.3L1063.9 564.3Z" fill="#029cd4" stroke="#24405e" stroke-width="0.45"/><path d="M1090.8 551.1L1092.7 553.1L1090.8 555.1L1088.8 553.1Z" fill="#0173c2" stroke="#24405e" stroke-width="0.45"/><path d="M1059.9 560.6L1061.9 562.6L1059.9 564.5L1058.0 562.6Z" fill="#0296d1" stroke="#24405e" stroke-width="0.45"/><path d="M1076.9 546.5L1078.8 548.4L1076.9 550.4L1074.9 548.4Z" fill="#0161ba" stroke="#24405e" stroke-width="0.45"/><path d="M1081.4 565.3L1083.4 567.2L1081.4 569.2L1079.5 567.2Z" fill="#03a7d9" stroke="#24405e" stroke-width="0.45"/><path d="M1082.9 562.4L1084.8 564.4L1082.9 566.3L1080.9 564.4Z" fill="#029dd4" stroke="#24405e" stroke-width="0.45"/><path d="M1072.5 556.8L1074.4 558.8L1072.5 560.7L1070.5 558.8Z" fill="#0288cb" stroke="#24405e" stroke-width="0.45"/><path d="M1070.5 562.8L1072.4 564.7L1070.5 566.6L1068.6 564.7Z" fill="#039ed5" stroke="#24405e" stroke-width="0.45"/><path d="M1084.4 559.4L1086.3 561.4L1084.4 563.3L1082.4 561.4Z" fill="#0291cf" stroke="#24405e" stroke-width="0.45"/><path d="M1080.7 558.5L1082.6 560.4L1080.7 562.3L1078.8 560.4Z" fill="#028ece" stroke="#24405e" stroke-width="0.45"/><path d="M1070.6 552.6L1072.5 554.5L1070.6 556.4L1068.7 554.5Z" fill="#0278c4" stroke="#24405e" stroke-width="0.45"/><path d="M1073.4 546.2L1075.3 548.1L1073.4 550.0L1071.5 548.1Z" fill="#0160ba" stroke="#24405e" stroke-width="0.45"/><path d="M1077.4 546.3L1079.2 548.2L1077.4 550.0L1075.5 548.2Z" fill="#0160ba" stroke="#24405e" stroke-width="0.45"/><path d="M1095.7 564.2L1097.5 566.0L1095.7 567.8L1093.8 566.0Z" fill="#03a3d7" stroke="#24405e" stroke-width="0.45"/><path d="M1089.6 560.8L1091.4 562.6L1089.6 564.4L1087.8 562.6Z" fill="#0296d1" stroke="#24405e" stroke-width="0.45"/><path d="M1070.4 549.8L1072.2 551.6L1070.4 553.4L1068.6 551.6Z" fill="#016dbf" stroke="#24405e" stroke-width="0.45"/><path d="M1106.5 531.8L1108.3 533.5L1106.5 535.3L1104.7 533.5Z" fill="#0031a3" stroke="#24405e" stroke-width="0.45"/><path d="M1077.1 562.6L1078.9 564.4L1077.1 566.2L1075.4 564.4Z" fill="#029dd4" stroke="#24405e" stroke-width="0.45"/><path d="M1081.2 563.3L1083.0 565.1L1081.2 566.8L1079.4 565.1Z" fill="#039fd5" stroke="#24405e" stroke-width="0.45"/><path d="M1098.8 544.0L1100.5 545.8L1098.8 547.5L1097.0 545.8Z" fill="#0157b6" stroke="#24405e" stroke-width="0.45"/><path d="M1061.9 558.7L1063.6 560.5L1061.9 562.2L1060.2 560.5Z" fill="#028ece" stroke="#24405e" stroke-width="0.45"/><path d="M1077.7 562.0L1079.4 563.7L1077.7 565.5L1076.0 563.7Z" fill="#029ad3" stroke="#24405e" stroke-width="0.45"/><path d="M967.5 569.1L969.2 570.9L967.5 572.6L965.8 570.9Z" fill="#03b5df" stroke="#24405e" stroke-width="0.45"/><path d="M1068.3 546.4L1070.0 548.1L1068.3 549.7L1066.6 548.1Z" fill="#0160ba" stroke="#24405e" stroke-width="0.45"/><path d="M1063.9 544.9L1065.6 546.6L1063.9 548.3L1062.2 546.6Z" fill="#015ab7" stroke="#24405e" stroke-width="0.45"/><path d="M1085.9 538.4L1087.6 540.1L1085.9 541.7L1084.2 540.1Z" fill="#0042ad" stroke="#24405e" stroke-width="0.45"/><path d="M1069.3 557.7L1070.9 559.4L1069.3 561.0L1067.7 559.4Z" fill="#028acc" stroke="#24405e" stroke-width="0.45"/><path d="M1077.1 549.5L1078.7 551.1L1077.1 552.7L1075.5 551.1Z" fill="#016bbf" stroke="#24405e" stroke-width="0.45"/><path d="M1076.3 550.5L1077.9 552.0L1076.3 553.6L1074.8 552.0Z" fill="#016fc0" stroke="#24405e" stroke-width="0.45"/><path d="M1073.2 567.2L1074.7 568.7L1073.2 570.2L1071.7 568.7Z" fill="#03addb" stroke="#24405e" stroke-width="0.45"/><path d="M1084.5 562.9L1086.0 564.4L1084.5 565.9L1083.0 564.4Z" fill="#029cd4" stroke="#24405e" stroke-width="0.45"/><path d="M1100.6 547.6L1102.1 549.1L1100.6 550.6L1099.1 549.1Z" fill="#0164bb" stroke="#24405e" stroke-width="0.45"/><path d="M1088.5 552.2L1090.0 553.7L1088.5 555.2L1087.0 553.7Z" fill="#0175c3" stroke="#24405e" stroke-width="0.45"/><path d="M1092.3 545.2L1093.8 546.7L1092.3 548.1L1090.9 546.7Z" fill="#015bb7" stroke="#24405e" stroke-width="0.45"/><path d="M1078.2 560.9L1079.6 562.3L1078.2 563.7L1076.7 562.3Z" fill="#0295d1" stroke="#24405e" stroke-width="0.45"/><path d="M1073.2 550.0L1074.6 551.5L1073.2 552.9L1071.8 551.5Z" fill="#016dbf" stroke="#24405e" stroke-width="0.45"/><path d="M1085.1 562.8L1086.5 564.2L1085.1 565.5L1083.7 564.2Z" fill="#029cd4" stroke="#24405e" stroke-width="0.45"/><path d="M1069.2 565.4L1070.5 566.8L1069.2 568.1L1067.8 566.8Z" fill="#03a5d8" stroke="#24405e" stroke-width="0.45"/><path d="M1078.0 549.2L1079.3 550.5L1078.0 551.9L1076.6 550.5Z" fill="#0169be" stroke="#24405e" stroke-width="0.45"/><path d="M1087.2 587.3L1088.5 588.6L1087.2 590.0L1085.8 588.6Z" fill="#05f7fb" stroke="#24405e" stroke-width="0.45"/><path d="M1161.8 559.7L1163.2 561.1L1161.8 562.4L1160.5 561.1Z" fill="#0290cf" stroke="#24405e" stroke-width="0.45"/><path d="M1078.3 541.2L1079.6 542.6L1078.3 543.9L1076.9 542.6Z" fill="#004bb1" stroke="#24405e" stroke-width="0.45"/><path d="M1088.6 545.3L1089.9 546.7L1088.6 548.0L1087.3 546.7Z" fill="#015bb7" stroke="#24405e" stroke-width="0.45"/><path d="M1071.6 546.3L1072.9 547.6L1071.6 548.9L1070.3 547.6Z" fill="#015eb9" stroke="#24405e" stroke-width="0.45"/><path d="M1079.2 539.8L1080.5 541.1L1079.2 542.3L1078.0 541.1Z" fill="#0046ae" stroke="#24405e" stroke-width="0.45"/><path d="M1080.4 543.9L1081.7 545.1L1080.4 546.4L1079.2 545.1Z" fill="#0155b5" stroke="#24405e" stroke-width="0.45"/><path d="M1074.8 549.6L1076.0 550.7L1074.8 551.9L1073.7 550.7Z" fill="#016abe" stroke="#24405e" stroke-width="0.45"/><path d="M943.0 578.6L944.2 579.7L943.0 580.9L941.9 579.7Z" fill="#04d6ed" stroke="#24405e" stroke-width="0.45"/><path d="M1079.0 551.1L1080.1 552.2L1079.0 553.3L1077.9 552.2Z" fill="#016fc0" stroke="#24405e" stroke-width="0.45"/><path d="M1068.7 546.5L1069.8 547.5L1068.7 548.6L1067.6 547.5Z" fill="#015eb9" stroke="#24405e" stroke-width="0.45"/><path d="M1093.5 538.2L1094.4 539.2L1093.5 540.2L1092.5 539.2Z" fill="#003fab" stroke="#24405e" stroke-width="0.45"/><path d="M1084.8 545.2L1085.7 546.2L1084.8 547.1L1083.9 546.2Z" fill="#0159b7" stroke="#24405e" stroke-width="0.45"/><path d="M1089.0 566.2L1089.9 567.2L1089.0 568.1L1088.1 567.2Z" fill="#03a7d9" stroke="#24405e" stroke-width="0.45"/><path d="M1072.9 551.0L1073.8 551.8L1072.9 552.6L1072.1 551.8Z" fill="#016ec0" stroke="#24405e" stroke-width="0.45"/><path d="M1069.8 552.0L1070.6 552.7L1069.8 553.5L1069.1 552.7Z" fill="#0171c1" stroke="#24405e" stroke-width="0.45"/><path d="M1089.1 556.1L1089.8 556.9L1089.1 557.6L1088.4 556.9Z" fill="#0281c8" stroke="#24405e" stroke-width="0.45"/><path d="M1074.5 560.6L1075.2 561.3L1074.5 562.0L1073.8 561.3Z" fill="#0291cf" stroke="#24405e" stroke-width="0.45"/><path d="M1088.1 540.5L1088.8 541.2L1088.1 541.9L1087.4 541.2Z" fill="#0046af" stroke="#24405e" stroke-width="0.45"/><path d="M1093.8 552.3L1094.5 553.0L1093.8 553.7L1093.1 553.0Z" fill="#0172c2" stroke="#24405e" stroke-width="0.45"/><path d="M1077.3 556.3L1078.0 557.0L1077.3 557.7L1076.6 557.0Z" fill="#0281c8" stroke="#24405e" stroke-width="0.45"/><path d="M1080.0 539.4L1080.7 540.1L1080.0 540.8L1079.3 540.1Z" fill="#0042ad" stroke="#24405e" stroke-width="0.45"/><path d="M1087.8 548.8L1088.5 549.5L1087.8 550.2L1087.1 549.5Z" fill="#0165bc" stroke="#24405e" stroke-width="0.45"/><g font-size="8" fill="#1f1f1f"><text x="788.6" y="746.2" text-anchor="middle">−78.05</text><text x="853.0" y="746.2" text-anchor="middle">−78.025</text><text x="917.3" y="746.2" text-anchor="middle">−78</text><text x="981.7" y="746.2" text-anchor="middle">−77.975</text><text x="1046.0" y="746.2" text-anchor="middle">−77.95</text><text x="1110.3" y="746.2" text-anchor="middle">−77.925</text><text x="1174.7" y="746.2" text-anchor="middle">−77.9</text><text x="1239.0" y="746.2" text-anchor="middle">−77.875</text><text x="1303.4" y="746.2" text-anchor="middle">−77.85</text><text x="786.2" y="733.8" text-anchor="end">−21</text><text x="786.2" y="724.9" text-anchor="end">−20</text><text x="786.2" y="716.0" text-anchor="end">−19</text><text x="786.2" y="707.1" text-anchor="end">−18</text><text x="786.2" y="698.2" text-anchor="end">−17</text><text x="786.2" y="689.4" text-anchor="end">−16</text><text x="786.2" y="680.5" text-anchor="end">−15</text><text x="786.2" y="671.6" text-anchor="end">−14</text><text x="786.2" y="662.7" text-anchor="end">−13</text><text x="786.2" y="653.8" text-anchor="end">−12</text><text x="786.2" y="644.9" text-anchor="end">−11</text><text x="786.2" y="636.1" text-anchor="end">−10</text><text x="786.2" y="627.2" text-anchor="end">−9</text><text x="786.2" y="618.3" text-anchor="end">−8</text><text x="786.2" y="609.4" text-anchor="end">−7</text><text x="786.2" y="600.5" text-anchor="end">−6</text><text x="786.2" y="591.6" text-anchor="end">−5</text><text x="786.2" y="582.7" text-anchor="end">−4</text><text x="786.2" y="573.9" text-anchor="end">−3</text><text x="786.2" y="565.0" text-anchor="end">−2</text><text x="786.2" y="556.1" text-anchor="end">−1</text><text x="786.2" y="547.2" text-anchor="end">0</text><text x="786.2" y="538.3" text-anchor="end">1</text><text x="786.2" y="529.4" text-anchor="end">2</text><text x="786.2" y="520.5" text-anchor="end">3</text><text x="786.2" y="511.7" text-anchor="end">4</text><text x="786.2" y="502.8" text-anchor="end">5</text></g><text x="1071.5" y="760" text-anchor="middle" font-size="9.3" fill="#1f1f1f">Longitude (degrees)</text><text transform="translate(771,614.5) rotate(-90)" text-anchor="middle" font-size="9.3" fill="#1f1f1f">Depth (Km)</text></svg></div>
<div class="panel" id="p5" style="left:1460.0px;top:65.4px;width:1546.8px;height:171.8px"><div class="ptitle">Event count by day</div><svg width="1544.8" height="169.8" viewBox="1461.0 66.4 1544.8 169.8" class="dj"><path d="M1484.6 155.1H2926.5M1484.6 106.2H2926.5" stroke="#ececec" stroke-width="0.7"/><rect x="1494.3" y="203.0" width="35.8" height="1.0" fill="#ee82ee"/><rect x="1530.1" y="202.0" width="35.8" height="2.0" fill="#f00808"/><rect x="1584.3" y="203.0" width="35.8" height="1.0" fill="#ee82ee"/><rect x="1620.1" y="200.6" width="35.8" height="3.4" fill="#f00808"/><rect x="1710.2" y="202.0" width="35.8" height="2.0" fill="#f00808"/><rect x="1764.5" y="197.6" width="35.8" height="6.4" fill="#ee82ee"/><rect x="1800.3" y="200.1" width="35.8" height="3.9" fill="#f00808"/><rect x="1854.5" y="203.0" width="35.8" height="1.0" fill="#ee82ee"/><rect x="1890.3" y="203.0" width="35.8" height="1.0" fill="#f00808"/><rect x="1944.6" y="203.0" width="35.8" height="1.0" fill="#ee82ee"/><rect x="1980.4" y="199.1" width="35.8" height="4.9" fill="#f00808"/><rect x="2070.5" y="201.1" width="35.8" height="2.9" fill="#f00808"/><rect x="2124.8" y="200.6" width="35.8" height="3.4" fill="#ee82ee"/><rect x="2160.6" y="202.5" width="35.8" height="1.5" fill="#f00808"/><rect x="2214.8" y="203.0" width="35.8" height="1.0" fill="#ee82ee"/><rect x="2304.9" y="202.5" width="35.8" height="1.5" fill="#ee82ee"/><rect x="2395.0" y="202.5" width="35.8" height="1.5" fill="#ee82ee"/><rect x="2430.8" y="202.0" width="35.8" height="2.0" fill="#f00808"/><rect x="2485.0" y="203.4" width="35.8" height="0.6" fill="#ee82ee"/><rect x="2520.8" y="201.1" width="35.8" height="2.9" fill="#f00808"/><rect x="2575.1" y="198.6" width="35.8" height="5.4" fill="#ee82ee"/><rect x="2610.9" y="202.5" width="35.8" height="1.5" fill="#f00808"/><rect x="2665.2" y="173.2" width="35.8" height="30.8" fill="#ee82ee"/><rect x="2755.2" y="100.8" width="35.8" height="103.2" fill="#ee82ee"/><rect x="2845.3" y="109.1" width="35.8" height="94.9" fill="#ee82ee"/><path d="M1484.6 204H2926.5" stroke="#666" stroke-width="0.8"/><g font-size="8" fill="#a6a6a6"><text x="1530.1" y="213.200" text-anchor="middle">May 1</text><text x="1845.3" y="213.200" text-anchor="middle">May 8</text><text x="2160.6" y="213.200" text-anchor="middle">May 15</text><text x="2475.8" y="213.200" text-anchor="middle">May 22</text><text x="2791.1" y="213.200" text-anchor="middle">May 29</text><text x="1530" y="223" text-anchor="middle">2022</text><text x="1484" y="207.0" text-anchor="end">0</text><text x="1484" y="158.1" text-anchor="end">50</text><text x="1484" y="109.2" text-anchor="end">100</text><text x="2982.500" y="107.500">VT</text><text x="2982.500" y="120.500">LP</text></g><rect x="2964.3" y="100.800" width="8.300" height="8" fill="#ee82ee"/><rect x="2964.3" y="113.800" width="8.300" height="8" fill="#f00808"/></svg></div>
<div class="panel" id="p6" style="left:1460.0px;top:242.6px;width:841.3px;height:526.2px"><svg width="839.3" height="524.2" viewBox="1461.0 243.6 839.3 524.2" class="dj"><defs><linearGradient id="p6jet" x1="0" y1="0" x2="0" y2="1"><stop offset="0.000" stop-color="rgb(0,0,131)"/><stop offset="0.125" stop-color="rgb(0,60,170)"/><stop offset="0.375" stop-color="rgb(5,255,255)"/><stop offset="0.625" stop-color="rgb(255,255,0)"/><stop offset="0.875" stop-color="rgb(250,0,0)"/><stop offset="1.000" stop-color="rgb(128,0,0)"/></linearGradient><linearGradient id="p6t" x1="0" y1="0" x2="0" y2="1"><stop offset="0" stop-color="#8a4a2a"/><stop offset="0.55" stop-color="#9c5a38"/><stop offset="1" stop-color="#b98468"/></linearGradient></defs><text x="1880.2" y="256" text-anchor="middle" font-size="11.3" fill="#1f1f1f">Events location 3D in Chiles Cerro Negro</text><path d="M1628.4 338.6L2158.5 317.7M1628.4 467.0L1911.3 454.3M1911.3 454.3L2143.2 487.4M1629.4 529.7L1911.3 504.2M1911.3 504.2L2138.1 563.8M1633.5 589.3L1911.3 552.1M1911.3 552.1L2133.0 640.3M1684.5 363.5L1699.7 645.4M1814.4 365.6L1817.0 627.6M1959.7 360.5L1954.6 630.1M2056.5 352.3L2038.7 678.5M1911.3 454.3L1911.3 599.5M1699.7 645.4L1776.2 762.6M1817.0 627.6L1985.2 760.1M1954.6 630.1L2125.3 711.7M1911.3 599.5L2127.9 711.7M1911.3 599.5L1725.2 762.6M2038.7 678.5L1873.0 762.6M1699.7 645.4L1954.6 630.1M1776.2 762.6L2038.7 678.5" stroke="#e4e4e4" stroke-width="0.6" fill="none"/><path d="M1632.5 404.3L2150.8 404.3" stroke="#666" stroke-width="0.8"/><polygon points="1642.7,357.4 1649.8,350.3 1659.0,346.2 1674.3,342.1 1689.6,339.1 1699.7,340.1 1715.0,341.6 1735.4,342.6 1755.8,343.1 1776.2,344.2 1796.6,346.2 1817.0,345.2 1832.3,341.1 1845.0,337.5 1857.7,338.1 1867.9,336.0 1883.2,339.1 1908.7,340.1 1934.2,339.1 1959.7,339.6 1985.2,339.1 2010.7,338.6 2036.1,337.5 2061.6,337.0 2087.1,335.5 2104.9,336.0 2117.7,340.1 2128.9,344.2 2107.5,346.2 2082.0,348.2 2061.6,352.3 2036.1,353.9 2010.7,356.4 1985.2,358.4 1959.7,360.5 1939.3,359.5 1924.0,363.5 1898.5,364.6 1878.1,363.5 1857.7,365.6 1837.4,364.6 1817.0,365.6 1801.7,366.6 1781.3,364.6 1755.8,363.5 1735.4,361.5 1715.0,361.5 1694.6,360.0 1674.3,359.5 1653.9,358.4" fill="url(#p6t)"/><polygon points="1642.7,357.4 1649.8,350.3 1659.0,346.2 1674.3,342.1 1689.6,339.1 1699.7,340.1 1715.0,341.6 1735.4,342.6 1755.8,343.1 1776.2,344.2 1796.6,346.2 1817.0,345.2 1832.3,341.1 1845.0,337.5 1857.7,338.1 1867.9,336.0 1883.2,339.1 1908.7,340.1 1934.2,339.1 1959.7,339.6 1985.2,339.1 2010.7,338.6 2036.1,337.5 2061.6,337.0 2087.1,335.5 2104.9,336.0 2117.7,340.1 2128.9,344.2 2112.6,343.1 2061.6,344.2 2010.7,345.2 1959.7,346.2 1908.7,348.2 1857.7,349.3 1806.8,352.3 1755.8,350.3 1704.8,348.2 1664.1,351.3" fill="#8a4626" opacity="0.75"/><g font-size="4.6" fill="#333"><text x="1776.2" y="338.6" text-anchor="middle">ICAN</text><text x="1810.3" y="340.1" text-anchor="middle">IMOR</text><text x="1845.0" y="331.9" text-anchor="middle">CERN ECEN</text><text x="1880.7" y="338.6" text-anchor="middle">CHL1</text><text x="2003.0" y="337.0" text-anchor="middle">LNGL</text><text x="1874.1" y="346.7" text-anchor="middle">ICHI</text></g><rect x="1845.9" y="336.4" width="3.400" height="3.400" fill="#b8b8b8" stroke="#777" stroke-width=".4"/><rect x="1851.0" y="337.4" width="3.400" height="3.400" fill="#b8b8b8" stroke="#777" stroke-width=".4"/><rect x="1865.7" y="336.4" width="3.400" height="3.400" fill="#b8b8b8" stroke="#777" stroke-width=".4"/><rect x="1884.6" y="351.6" width="3.400" height="3.400" fill="#b8b8b8" stroke="#777" stroke-width=".4"/><circle cx="1949.2" cy="661.9" r="0.62" fill="#667" opacity="0.7"/><circle cx="2077.0" cy="661.2" r="0.67" fill="#667" opacity="0.7"/><circle cx="1711.6" cy="556.9" r="0.68" fill="#667" opacity="0.7"/><circle cx="1959.6" cy="722.3" r="0.35" fill="#667" opacity="0.7"/><circle cx="1887.6" cy="473.7" r="0.52" fill="#667" opacity="0.7"/><circle cx="1929.6" cy="385.0" r="0.39" fill="#667" opacity="0.7"/><circle cx="1811.8" cy="728.2" r="0.61" fill="#667" opacity="0.7"/><circle cx="1763.8" cy="682.9" r="0.36" fill="#667" opacity="0.7"/><circle cx="1947.0" cy="428.1" r="0.30" fill="#667" opacity="0.7"/><circle cx="2048.6" cy="459.6" r="0.39" fill="#667" opacity="0.7"/><circle cx="2093.0" cy="711.5" r="0.42" fill="#667" opacity="0.7"/><circle cx="2084.6" cy="584.9" r="0.57" fill="#667" opacity="0.7"/><circle cx="1781.9" cy="737.6" r="0.58" fill="#667" opacity="0.7"/><circle cx="2086.6" cy="719.6" r="0.42" fill="#667" opacity="0.7"/><circle cx="1844.5" cy="443.1" r="0.36" fill="#667" opacity="0.7"/><circle cx="1726.1" cy="494.5" r="0.54" fill="#667" opacity="0.7"/><circle cx="1701.4" cy="637.6" r="0.44" fill="#667" opacity="0.7"/><circle cx="1824.0" cy="691.0" r="0.49" fill="#667" opacity="0.7"/><circle cx="1826.3" cy="562.9" r="0.58" fill="#667" opacity="0.7"/><circle cx="1722.8" cy="750.5" r="0.31" fill="#667" opacity="0.7"/><circle cx="1999.9" cy="701.1" r="0.31" fill="#667" opacity="0.7"/><circle cx="2015.1" cy="519.2" r="0.53" fill="#667" opacity="0.7"/><circle cx="1703.6" cy="397.8" r="0.37" fill="#667" opacity="0.7"/><circle cx="2082.1" cy="454.7" r="0.60" fill="#667" opacity="0.7"/><circle cx="2071.9" cy="738.0" r="0.44" fill="#667" opacity="0.7"/><circle cx="1841.9" cy="579.4" r="0.61" fill="#667" opacity="0.7"/><path d="M1887.4 431.4L1892.9 436.9L1887.4 442.4L1882.0 436.9Z" fill="#03a2d6" stroke="#24405e" stroke-width="0.45"/><path d="M1913.6 416.5L1918.2 421.2L1913.6 425.8L1909.0 421.2Z" fill="#027ac5" stroke="#24405e" stroke-width="0.45"/><path d="M1873.9 417.3L1878.6 422.0L1873.9 426.6L1869.3 422.0Z" fill="#027cc6" stroke="#24405e" stroke-width="0.45"/><path d="M1885.3 435.2L1889.8 439.7L1885.3 444.2L1880.8 439.7Z" fill="#03a9d9" stroke="#24405e" stroke-width="0.45"/><path d="M1879.5 435.3L1883.9 439.8L1879.5 444.3L1875.0 439.8Z" fill="#03a9da" stroke="#24405e" stroke-width="0.45"/><path d="M1887.4 434.2L1891.9 438.6L1887.4 443.1L1883.0 438.6Z" fill="#03a6d8" stroke="#24405e" stroke-width="0.45"/><path d="M1886.5 437.2L1890.9 441.7L1886.5 446.1L1882.0 441.7Z" fill="#03aedc" stroke="#24405e" stroke-width="0.45"/><path d="M1886.3 420.3L1890.6 424.6L1886.3 428.9L1882.0 424.6Z" fill="#0283c9" stroke="#24405e" stroke-width="0.45"/><path d="M1884.7 436.3L1889.0 440.7L1884.7 445.0L1880.4 440.7Z" fill="#03abda" stroke="#24405e" stroke-width="0.45"/><path d="M1878.5 426.9L1882.7 431.1L1878.5 435.4L1874.2 431.1Z" fill="#0293d0" stroke="#24405e" stroke-width="0.45"/><path d="M1871.2 414.4L1875.4 418.5L1871.2 422.7L1867.1 418.5Z" fill="#0174c2" stroke="#24405e" stroke-width="0.45"/><path d="M1863.4 410.1L1867.5 414.2L1863.4 418.3L1859.3 414.2Z" fill="#0169be" stroke="#24405e" stroke-width="0.45"/><path d="M1872.9 413.7L1877.0 417.7L1872.9 421.8L1868.8 417.7Z" fill="#0172c1" stroke="#24405e" stroke-width="0.45"/><path d="M1869.2 410.3L1873.2 414.4L1869.2 418.5L1865.1 414.4Z" fill="#016abe" stroke="#24405e" stroke-width="0.45"/><path d="M1875.5 411.2L1879.5 415.3L1875.5 419.3L1871.4 415.3Z" fill="#016cbf" stroke="#24405e" stroke-width="0.45"/><path d="M1877.7 419.3L1881.7 423.3L1877.7 427.4L1873.6 423.3Z" fill="#0280c8" stroke="#24405e" stroke-width="0.45"/><path d="M1867.9 403.8L1871.9 407.8L1867.9 411.8L1863.8 407.8Z" fill="#0159b7" stroke="#24405e" stroke-width="0.45"/><path d="M1878.8 419.1L1882.8 423.1L1878.8 427.2L1874.8 423.1Z" fill="#027fc7" stroke="#24405e" stroke-width="0.45"/><path d="M1874.0 436.5L1878.0 440.4L1874.0 444.4L1870.1 440.4Z" fill="#03abda" stroke="#24405e" stroke-width="0.45"/><path d="M1872.5 413.4L1876.5 417.4L1872.5 421.3L1868.6 417.4Z" fill="#0171c1" stroke="#24405e" stroke-width="0.45"/><path d="M1889.2 436.0L1893.1 439.9L1889.2 443.8L1885.3 439.9Z" fill="#03a9da" stroke="#24405e" stroke-width="0.45"/><path d="M1866.9 402.9L1870.8 406.8L1866.9 410.7L1863.0 406.8Z" fill="#0157b6" stroke="#24405e" stroke-width="0.45"/><path d="M1878.4 427.3L1882.3 431.1L1878.4 435.0L1874.6 431.1Z" fill="#0293d0" stroke="#24405e" stroke-width="0.45"/><path d="M1882.7 437.5L1886.6 441.4L1882.7 445.2L1878.8 441.4Z" fill="#03addb" stroke="#24405e" stroke-width="0.45"/><path d="M1878.3 436.2L1882.1 440.1L1878.3 443.9L1874.5 440.1Z" fill="#03aada" stroke="#24405e" stroke-width="0.45"/><path d="M1885.6 432.6L1889.5 436.4L1885.6 440.3L1881.8 436.4Z" fill="#03a1d6" stroke="#24405e" stroke-width="0.45"/><path d="M1870.9 398.7L1874.7 402.5L1870.9 406.3L1867.1 402.5Z" fill="#004cb1" stroke="#24405e" stroke-width="0.45"/><path d="M1884.7 426.8L1888.5 430.6L1884.7 434.3L1881.0 430.6Z" fill="#0292cf" stroke="#24405e" stroke-width="0.45"/><path d="M1888.8 431.6L1892.5 435.3L1888.8 439.1L1885.0 435.3Z" fill="#039ed5" stroke="#24405e" stroke-width="0.45"/><path d="M1874.9 418.1L1878.6 421.8L1874.9 425.6L1871.1 421.8Z" fill="#027cc6" stroke="#24405e" stroke-width="0.45"/><path d="M1884.7 431.9L1888.3 435.5L1884.7 439.2L1881.1 435.5Z" fill="#039ed5" stroke="#24405e" stroke-width="0.45"/><path d="M1861.8 397.9L1865.4 401.5L1861.8 405.2L1858.2 401.5Z" fill="#0049b0" stroke="#24405e" stroke-width="0.45"/><path d="M1879.2 436.5L1882.8 440.1L1879.2 443.7L1875.6 440.1Z" fill="#03aada" stroke="#24405e" stroke-width="0.45"/><path d="M1863.9 395.3L1867.5 398.9L1863.9 402.5L1860.3 398.9Z" fill="#0043ad" stroke="#24405e" stroke-width="0.45"/><path d="M1871.7 420.0L1875.3 423.5L1871.7 427.1L1868.2 423.5Z" fill="#0280c8" stroke="#24405e" stroke-width="0.45"/><path d="M1874.3 409.8L1877.8 413.3L1874.3 416.9L1870.7 413.3Z" fill="#0167bd" stroke="#24405e" stroke-width="0.45"/><path d="M1879.6 431.9L1883.2 435.5L1879.6 439.1L1876.1 435.5Z" fill="#039ed5" stroke="#24405e" stroke-width="0.45"/><path d="M1891.1 428.8L1894.7 432.3L1891.1 435.9L1887.6 432.3Z" fill="#0296d1" stroke="#24405e" stroke-width="0.45"/><path d="M1889.4 433.3L1892.9 436.9L1889.4 440.4L1885.9 436.9Z" fill="#03a2d6" stroke="#24405e" stroke-width="0.45"/><path d="M1881.7 420.2L1885.3 423.7L1881.7 427.2L1878.2 423.7Z" fill="#0281c8" stroke="#24405e" stroke-width="0.45"/><path d="M1870.5 410.2L1874.0 413.7L1870.5 417.2L1867.0 413.7Z" fill="#0168bd" stroke="#24405e" stroke-width="0.45"/><path d="M1877.9 438.1L1881.4 441.6L1877.9 445.1L1874.4 441.6Z" fill="#03aedc" stroke="#24405e" stroke-width="0.45"/><path d="M1870.4 421.2L1873.9 424.7L1870.4 428.2L1866.9 424.7Z" fill="#0283c9" stroke="#24405e" stroke-width="0.45"/><path d="M1873.9 407.4L1877.4 410.9L1873.9 414.4L1870.4 410.9Z" fill="#0161ba" stroke="#24405e" stroke-width="0.45"/><path d="M1872.3 396.4L1875.8 399.8L1872.3 403.3L1868.8 399.8Z" fill="#0045ae" stroke="#24405e" stroke-width="0.45"/><path d="M1874.1 467.3L1877.5 470.8L1874.1 474.3L1870.6 470.8Z" fill="#05f7fb" stroke="#24405e" stroke-width="0.45"/><path d="M1881.5 433.9L1884.9 437.4L1881.5 440.8L1878.0 437.4Z" fill="#03a3d7" stroke="#24405e" stroke-width="0.45"/><path d="M1876.7 425.8L1880.2 429.2L1876.7 432.7L1873.3 429.2Z" fill="#028fce" stroke="#24405e" stroke-width="0.45"/><path d="M1874.0 410.6L1877.4 414.0L1874.0 417.5L1870.6 414.0Z" fill="#0169bd" stroke="#24405e" stroke-width="0.45"/><path d="M1880.2 426.0L1883.6 429.4L1880.2 432.8L1876.7 429.4Z" fill="#028fce" stroke="#24405e" stroke-width="0.45"/><path d="M1866.6 423.9L1869.9 427.3L1866.6 430.7L1863.2 427.3Z" fill="#028acc" stroke="#24405e" stroke-width="0.45"/><path d="M1861.2 406.3L1864.6 409.7L1861.2 413.1L1857.8 409.7Z" fill="#015eb9" stroke="#24405e" stroke-width="0.45"/><path d="M1870.0 408.7L1873.3 412.1L1870.0 415.5L1866.6 412.1Z" fill="#0164bb" stroke="#24405e" stroke-width="0.45"/><path d="M1867.9 411.8L1871.2 415.1L1867.9 418.5L1864.5 415.1Z" fill="#016bbf" stroke="#24405e" stroke-width="0.45"/><path d="M1714.6 435.8L1717.9 439.1L1714.6 442.4L1711.3 439.1Z" fill="#03a7d9" stroke="#24405e" stroke-width="0.45"/><path d="M1863.1 412.7L1866.4 416.0L1863.1 419.3L1859.8 416.0Z" fill="#016ec0" stroke="#24405e" stroke-width="0.45"/><path d="M1879.4 410.6L1882.7 413.9L1879.4 417.2L1876.1 413.9Z" fill="#0168bd" stroke="#24405e" stroke-width="0.45"/><path d="M1869.8 414.8L1873.1 418.1L1869.8 421.4L1866.6 418.1Z" fill="#0173c2" stroke="#24405e" stroke-width="0.45"/><path d="M1875.3 431.9L1878.5 435.1L1875.3 438.4L1872.0 435.1Z" fill="#029dd4" stroke="#24405e" stroke-width="0.45"/><path d="M1873.2 408.9L1876.5 412.1L1873.2 415.4L1870.0 412.1Z" fill="#0164bb" stroke="#24405e" stroke-width="0.45"/><path d="M1868.3 404.2L1871.6 407.4L1868.3 410.7L1865.1 407.4Z" fill="#0158b6" stroke="#24405e" stroke-width="0.45"/><path d="M1868.4 417.4L1871.6 420.6L1868.4 423.8L1865.2 420.6Z" fill="#0279c5" stroke="#24405e" stroke-width="0.45"/><path d="M1873.9 413.4L1877.1 416.6L1873.9 419.8L1870.7 416.6Z" fill="#016fc0" stroke="#24405e" stroke-width="0.45"/><path d="M1871.2 409.7L1874.4 412.9L1871.2 416.1L1868.0 412.9Z" fill="#0166bc" stroke="#24405e" stroke-width="0.45"/><path d="M1870.6 411.8L1873.8 415.0L1870.6 418.1L1867.4 415.0Z" fill="#016bbe" stroke="#24405e" stroke-width="0.45"/><path d="M1871.6 403.8L1874.8 407.0L1871.6 410.2L1868.4 407.0Z" fill="#0157b6" stroke="#24405e" stroke-width="0.45"/><path d="M1876.8 415.8L1880.0 419.0L1876.8 422.2L1873.6 419.0Z" fill="#0175c3" stroke="#24405e" stroke-width="0.45"/><path d="M1878.3 429.3L1881.4 432.5L1878.3 435.6L1875.1 432.5Z" fill="#0297d2" stroke="#24405e" stroke-width="0.45"/><path d="M1889.0 399.7L1892.1 402.8L1889.0 406.0L1885.8 402.8Z" fill="#004db1" stroke="#24405e" stroke-width="0.45"/><path d="M1884.0 425.1L1887.1 428.2L1884.0 431.3L1880.8 428.2Z" fill="#028ccd" stroke="#24405e" stroke-width="0.45"/><path d="M1871.4 403.8L1874.5 406.9L1871.4 410.0L1868.2 406.9Z" fill="#0157b6" stroke="#24405e" stroke-width="0.45"/><path d="M1860.4 394.7L1863.5 397.8L1860.4 400.9L1857.3 397.8Z" fill="#0040ac" stroke="#24405e" stroke-width="0.45"/><path d="M1873.8 420.6L1876.9 423.7L1873.8 426.8L1870.7 423.7Z" fill="#0281c8" stroke="#24405e" stroke-width="0.45"/><path d="M1867.0 404.2L1870.1 407.3L1867.0 410.4L1863.9 407.3Z" fill="#0158b6" stroke="#24405e" stroke-width="0.45"/><path d="M1872.6 409.7L1875.7 412.8L1872.6 415.9L1869.5 412.8Z" fill="#0165bc" stroke="#24405e" stroke-width="0.45"/><path d="M1867.7 403.3L1870.8 406.4L1867.7 409.4L1864.6 406.4Z" fill="#0155b5" stroke="#24405e" stroke-width="0.45"/><path d="M1872.2 415.1L1875.2 418.1L1872.2 421.2L1869.1 418.1Z" fill="#0173c2" stroke="#24405e" stroke-width="0.45"/><path d="M1883.1 424.0L1886.2 427.1L1883.1 430.1L1880.1 427.1Z" fill="#0289cc" stroke="#24405e" stroke-width="0.45"/><path d="M1880.8 418.0L1883.9 421.0L1880.8 424.0L1877.8 421.0Z" fill="#027ac5" stroke="#24405e" stroke-width="0.45"/><path d="M1868.6 427.4L1871.6 430.4L1868.6 433.4L1865.6 430.4Z" fill="#0292cf" stroke="#24405e" stroke-width="0.45"/><path d="M1881.1 432.0L1884.1 435.0L1881.1 438.0L1878.1 435.0Z" fill="#029dd4" stroke="#24405e" stroke-width="0.45"/><path d="M1872.3 415.9L1875.3 418.9L1872.3 421.9L1869.3 418.9Z" fill="#0175c3" stroke="#24405e" stroke-width="0.45"/><path d="M1879.7 429.2L1882.7 432.2L1879.7 435.2L1876.7 432.2Z" fill="#0296d1" stroke="#24405e" stroke-width="0.45"/><path d="M1869.7 406.2L1872.7 409.1L1869.7 412.1L1866.7 409.1Z" fill="#015cb8" stroke="#24405e" stroke-width="0.45"/><path d="M1868.0 412.6L1871.0 415.6L1868.0 418.6L1865.1 415.6Z" fill="#016dbf" stroke="#24405e" stroke-width="0.45"/><path d="M1879.9 432.9L1882.8 435.9L1879.9 438.9L1876.9 435.9Z" fill="#039fd5" stroke="#24405e" stroke-width="0.45"/><path d="M1882.5 427.9L1885.5 430.8L1882.5 433.8L1879.6 430.8Z" fill="#0293d0" stroke="#24405e" stroke-width="0.45"/><path d="M1867.6 408.0L1870.5 410.9L1867.6 413.9L1864.6 410.9Z" fill="#0161ba" stroke="#24405e" stroke-width="0.45"/><path d="M1866.1 397.3L1869.1 400.2L1866.1 403.2L1863.2 400.2Z" fill="#0046ae" stroke="#24405e" stroke-width="0.45"/><path d="M1861.8 405.2L1864.8 408.1L1861.8 411.0L1858.9 408.1Z" fill="#015ab7" stroke="#24405e" stroke-width="0.45"/><path d="M1870.3 411.1L1873.2 414.0L1870.3 416.9L1867.3 414.0Z" fill="#0169bd" stroke="#24405e" stroke-width="0.45"/><path d="M1874.3 406.2L1877.3 409.1L1874.3 412.0L1871.4 409.1Z" fill="#015cb8" stroke="#24405e" stroke-width="0.45"/><path d="M1876.4 411.7L1879.4 414.6L1876.4 417.5L1873.5 414.6Z" fill="#016abe" stroke="#24405e" stroke-width="0.45"/><path d="M1879.4 419.9L1882.3 422.7L1879.4 425.6L1876.5 422.7Z" fill="#027ec7" stroke="#24405e" stroke-width="0.45"/><path d="M1881.5 425.2L1884.4 428.1L1881.5 431.0L1878.6 428.1Z" fill="#028ccd" stroke="#24405e" stroke-width="0.45"/><path d="M1876.0 421.9L1878.9 424.7L1876.0 427.6L1873.2 424.7Z" fill="#0283c9" stroke="#24405e" stroke-width="0.45"/><path d="M1865.8 413.9L1868.6 416.7L1865.8 419.5L1863.0 416.7Z" fill="#016fc0" stroke="#24405e" stroke-width="0.45"/><path d="M1859.9 397.6L1862.7 400.4L1859.9 403.2L1857.1 400.4Z" fill="#0047af" stroke="#24405e" stroke-width="0.45"/><path d="M1862.9 400.7L1865.7 403.5L1862.9 406.3L1860.1 403.5Z" fill="#004eb2" stroke="#24405e" stroke-width="0.45"/><path d="M1879.2 422.4L1882.0 425.2L1879.2 428.0L1876.4 425.2Z" fill="#0285ca" stroke="#24405e" stroke-width="0.45"/><path d="M1879.5 431.9L1882.3 434.7L1879.5 437.5L1876.7 434.7Z" fill="#029cd4" stroke="#24405e" stroke-width="0.45"/><path d="M1871.9 422.0L1874.7 424.8L1871.9 427.6L1869.1 424.8Z" fill="#0284c9" stroke="#24405e" stroke-width="0.45"/><path d="M1870.8 399.8L1873.6 402.6L1870.8 405.4L1868.1 402.6Z" fill="#004cb1" stroke="#24405e" stroke-width="0.45"/><path d="M1870.0 421.3L1872.8 424.0L1870.0 426.8L1867.3 424.0Z" fill="#0282c8" stroke="#24405e" stroke-width="0.45"/><path d="M1884.1 436.9L1886.8 439.6L1884.1 442.4L1881.3 439.6Z" fill="#03a9d9" stroke="#24405e" stroke-width="0.45"/><path d="M1866.4 404.9L1869.1 407.7L1866.4 410.4L1863.6 407.7Z" fill="#0159b7" stroke="#24405e" stroke-width="0.45"/><path d="M1868.6 404.1L1871.3 406.9L1868.6 409.6L1865.8 406.9Z" fill="#0157b6" stroke="#24405e" stroke-width="0.45"/><path d="M1884.0 436.9L1886.7 439.6L1884.0 442.3L1881.3 439.6Z" fill="#03a9d9" stroke="#24405e" stroke-width="0.45"/><path d="M1873.6 420.6L1876.3 423.3L1873.6 426.0L1870.9 423.3Z" fill="#0280c8" stroke="#24405e" stroke-width="0.45"/><path d="M1872.8 420.1L1875.5 422.8L1872.8 425.5L1870.0 422.8Z" fill="#027fc7" stroke="#24405e" stroke-width="0.45"/><path d="M1862.8 403.5L1865.5 406.2L1862.8 408.9L1860.1 406.2Z" fill="#0155b5" stroke="#24405e" stroke-width="0.45"/><path d="M1873.8 417.0L1876.5 419.7L1873.8 422.4L1871.1 419.7Z" fill="#0277c4" stroke="#24405e" stroke-width="0.45"/><path d="M1867.1 406.4L1869.8 409.1L1867.1 411.7L1864.4 409.1Z" fill="#015cb8" stroke="#24405e" stroke-width="0.45"/><path d="M1872.4 415.5L1875.1 418.1L1872.4 420.8L1869.8 418.1Z" fill="#0173c2" stroke="#24405e" stroke-width="0.45"/><path d="M1884.7 418.4L1887.4 421.1L1884.7 423.7L1882.0 421.1Z" fill="#027ac5" stroke="#24405e" stroke-width="0.45"/><path d="M1873.8 427.6L1876.4 430.3L1873.8 432.9L1871.1 430.3Z" fill="#0291cf" stroke="#24405e" stroke-width="0.45"/><path d="M1866.3 413.5L1869.0 416.2L1866.3 418.8L1863.7 416.2Z" fill="#016ec0" stroke="#24405e" stroke-width="0.45"/><path d="M1872.0 418.6L1874.6 421.3L1872.0 423.9L1869.3 421.3Z" fill="#027bc5" stroke="#24405e" stroke-width="0.45"/><path d="M1882.4 415.4L1885.0 418.0L1882.4 420.6L1879.7 418.0Z" fill="#0173c2" stroke="#24405e" stroke-width="0.45"/><path d="M1864.1 397.1L1866.7 399.8L1864.1 402.4L1861.5 399.8Z" fill="#0045ae" stroke="#24405e" stroke-width="0.45"/><path d="M1864.2 398.1L1866.8 400.7L1864.2 403.3L1861.5 400.7Z" fill="#0047af" stroke="#24405e" stroke-width="0.45"/><path d="M1867.9 397.4L1870.5 400.0L1867.9 402.6L1865.3 400.0Z" fill="#0046ae" stroke="#24405e" stroke-width="0.45"/><path d="M1877.2 410.8L1879.8 413.3L1877.2 415.9L1874.6 413.3Z" fill="#0167bd" stroke="#24405e" stroke-width="0.45"/><path d="M1879.8 414.6L1882.3 417.1L1879.8 419.7L1877.2 417.1Z" fill="#0170c1" stroke="#24405e" stroke-width="0.45"/><path d="M1867.2 404.9L1869.8 407.5L1867.2 410.0L1864.6 407.5Z" fill="#0158b6" stroke="#24405e" stroke-width="0.45"/><path d="M1871.0 417.2L1873.5 419.7L1871.0 422.3L1868.4 419.7Z" fill="#0277c4" stroke="#24405e" stroke-width="0.45"/><path d="M1864.8 409.6L1867.3 412.2L1864.8 414.7L1862.3 412.2Z" fill="#0164bb" stroke="#24405e" stroke-width="0.45"/><path d="M1880.0 407.7L1882.5 410.2L1880.0 412.7L1877.5 410.2Z" fill="#015fb9" stroke="#24405e" stroke-width="0.45"/><path d="M1888.9 432.9L1891.4 435.4L1888.9 437.9L1886.4 435.4Z" fill="#039ed5" stroke="#24405e" stroke-width="0.45"/><path d="M1883.6 414.9L1886.1 417.3L1883.6 419.8L1881.1 417.3Z" fill="#0171c1" stroke="#24405e" stroke-width="0.45"/><path d="M1893.0 428.7L1895.5 431.2L1893.0 433.7L1890.6 431.2Z" fill="#0294d0" stroke="#24405e" stroke-width="0.45"/><path d="M1873.2 419.4L1875.7 421.8L1873.2 424.3L1870.7 421.8Z" fill="#027cc6" stroke="#24405e" stroke-width="0.45"/><path d="M1865.3 406.2L1867.8 408.7L1865.3 411.1L1862.8 408.7Z" fill="#015bb8" stroke="#24405e" stroke-width="0.45"/><path d="M1880.3 435.4L1882.7 437.8L1880.3 440.2L1877.8 437.8Z" fill="#03a4d7" stroke="#24405e" stroke-width="0.45"/><path d="M1858.2 400.2L1860.6 402.6L1858.2 405.0L1855.8 402.6Z" fill="#004cb1" stroke="#24405e" stroke-width="0.45"/><path d="M1865.5 411.9L1868.0 414.3L1865.5 416.7L1863.1 414.3Z" fill="#0169be" stroke="#24405e" stroke-width="0.45"/><path d="M1880.7 425.2L1883.1 427.6L1880.7 430.0L1878.3 427.6Z" fill="#028bcc" stroke="#24405e" stroke-width="0.45"/><path d="M1869.9 408.0L1872.3 410.4L1869.9 412.8L1867.5 410.4Z" fill="#0160b9" stroke="#24405e" stroke-width="0.45"/><path d="M1863.3 395.2L1865.7 397.5L1863.3 399.9L1861.0 397.5Z" fill="#003fab" stroke="#24405e" stroke-width="0.45"/><path d="M1887.5 438.4L1889.9 440.8L1887.5 443.2L1885.1 440.8Z" fill="#03acdb" stroke="#24405e" stroke-width="0.45"/><path d="M1864.8 395.4L1867.1 397.7L1864.8 400.1L1862.4 397.7Z" fill="#0040ac" stroke="#24405e" stroke-width="0.45"/><path d="M1876.7 421.3L1879.0 423.6L1876.7 426.0L1874.3 423.6Z" fill="#0281c8" stroke="#24405e" stroke-width="0.45"/><path d="M1891.4 431.8L1893.8 434.2L1891.4 436.5L1889.1 434.2Z" fill="#029bd3" stroke="#24405e" stroke-width="0.45"/><path d="M1865.6 404.9L1868.0 407.3L1865.6 409.6L1863.3 407.3Z" fill="#0158b6" stroke="#24405e" stroke-width="0.45"/><path d="M1873.5 419.2L1875.9 421.5L1873.5 423.8L1871.2 421.5Z" fill="#027bc6" stroke="#24405e" stroke-width="0.45"/><path d="M1882.3 430.6L1884.6 432.9L1882.3 435.3L1880.0 432.9Z" fill="#0298d2" stroke="#24405e" stroke-width="0.45"/><path d="M1890.2 401.8L1892.5 404.1L1890.2 406.4L1887.9 404.1Z" fill="#0150b3" stroke="#24405e" stroke-width="0.45"/><path d="M1870.1 407.2L1872.3 409.5L1870.1 411.8L1867.8 409.5Z" fill="#015db9" stroke="#24405e" stroke-width="0.45"/><path d="M1883.4 432.3L1885.6 434.6L1883.4 436.9L1881.1 434.6Z" fill="#029cd4" stroke="#24405e" stroke-width="0.45"/><path d="M1870.3 415.8L1872.5 418.0L1870.3 420.3L1868.0 418.0Z" fill="#0173c2" stroke="#24405e" stroke-width="0.45"/><path d="M1887.3 429.9L1889.6 432.1L1887.3 434.4L1885.1 432.1Z" fill="#0296d1" stroke="#24405e" stroke-width="0.45"/><path d="M1876.7 408.8L1879.0 411.1L1876.7 413.4L1874.4 411.1Z" fill="#0161ba" stroke="#24405e" stroke-width="0.45"/><path d="M1884.4 436.8L1886.6 439.0L1884.4 441.3L1882.1 439.0Z" fill="#03a7d9" stroke="#24405e" stroke-width="0.45"/><path d="M1883.2 432.5L1885.4 434.8L1883.2 437.0L1881.0 434.8Z" fill="#029dd4" stroke="#24405e" stroke-width="0.45"/><path d="M1881.1 424.2L1883.3 426.4L1881.1 428.7L1878.8 426.4Z" fill="#0288cb" stroke="#24405e" stroke-width="0.45"/><path d="M1884.9 433.0L1887.1 435.2L1884.9 437.5L1882.7 435.2Z" fill="#039ed5" stroke="#24405e" stroke-width="0.45"/><path d="M1878.7 428.1L1881.0 430.3L1878.7 432.5L1876.5 430.3Z" fill="#0291cf" stroke="#24405e" stroke-width="0.45"/><path d="M1885.6 426.7L1887.8 428.9L1885.6 431.0L1883.4 428.9Z" fill="#028ece" stroke="#24405e" stroke-width="0.45"/><path d="M1871.6 417.9L1873.7 420.1L1871.6 422.3L1869.4 420.1Z" fill="#0278c4" stroke="#24405e" stroke-width="0.45"/><path d="M1868.5 408.5L1870.7 410.7L1868.5 412.8L1866.4 410.7Z" fill="#0160ba" stroke="#24405e" stroke-width="0.45"/><path d="M1877.7 408.6L1879.9 410.7L1877.7 412.8L1875.6 410.7Z" fill="#0160ba" stroke="#24405e" stroke-width="0.45"/><path d="M1877.1 435.1L1879.2 437.2L1877.1 439.3L1875.0 437.2Z" fill="#03a3d7" stroke="#24405e" stroke-width="0.45"/><path d="M1875.1 430.0L1877.1 432.1L1875.1 434.2L1873.0 432.1Z" fill="#0296d1" stroke="#24405e" stroke-width="0.45"/><path d="M1874.4 413.7L1876.5 415.7L1874.4 417.8L1872.4 415.7Z" fill="#016dbf" stroke="#24405e" stroke-width="0.45"/><path d="M1846.1 386.9L1848.2 389.0L1846.1 391.0L1844.1 389.0Z" fill="#0031a3" stroke="#24405e" stroke-width="0.45"/><path d="M1883.6 432.8L1885.6 434.8L1883.6 436.9L1881.5 434.8Z" fill="#029dd4" stroke="#24405e" stroke-width="0.45"/><path d="M1880.9 433.7L1883.0 435.8L1880.9 437.8L1878.9 435.8Z" fill="#039fd5" stroke="#24405e" stroke-width="0.45"/><path d="M1861.8 405.1L1863.8 407.1L1861.8 409.2L1859.8 407.1Z" fill="#0157b6" stroke="#24405e" stroke-width="0.45"/><path d="M1883.6 427.0L1885.6 429.0L1883.6 431.0L1881.6 429.0Z" fill="#028ece" stroke="#24405e" stroke-width="0.45"/><path d="M1880.3 431.8L1882.3 433.8L1880.3 435.8L1878.3 433.8Z" fill="#029ad3" stroke="#24405e" stroke-width="0.45"/><path d="M1875.5 442.4L1877.4 444.4L1875.5 446.4L1873.5 444.4Z" fill="#03b5df" stroke="#24405e" stroke-width="0.45"/><path d="M1875.1 408.6L1877.0 410.5L1875.1 412.5L1873.1 410.5Z" fill="#0160ba" stroke="#24405e" stroke-width="0.45"/><path d="M1868.0 406.4L1869.9 408.4L1868.0 410.3L1866.0 408.4Z" fill="#015ab7" stroke="#24405e" stroke-width="0.45"/><path d="M1867.6 396.7L1869.5 398.6L1867.6 400.6L1865.6 398.6Z" fill="#0042ad" stroke="#24405e" stroke-width="0.45"/><path d="M1878.6 425.5L1880.5 427.3L1878.6 429.2L1876.7 427.3Z" fill="#028acc" stroke="#24405e" stroke-width="0.45"/><path d="M1869.5 413.2L1871.3 415.0L1869.5 416.9L1867.6 415.0Z" fill="#016bbf" stroke="#24405e" stroke-width="0.45"/><path d="M1874.2 414.6L1876.0 416.4L1874.2 418.2L1872.4 416.4Z" fill="#016fc0" stroke="#24405e" stroke-width="0.45"/><path d="M1884.8 439.4L1886.5 441.2L1884.8 442.9L1883.0 441.2Z" fill="#03addb" stroke="#24405e" stroke-width="0.45"/><path d="M1881.2 433.0L1882.9 434.7L1881.2 436.5L1879.5 434.7Z" fill="#029cd4" stroke="#24405e" stroke-width="0.45"/><path d="M1873.6 410.4L1875.3 412.1L1873.6 413.8L1871.9 412.1Z" fill="#0164bb" stroke="#24405e" stroke-width="0.45"/><path d="M1871.0 417.2L1872.7 418.9L1871.0 420.6L1869.3 418.9Z" fill="#0175c3" stroke="#24405e" stroke-width="0.45"/><path d="M1870.4 406.8L1872.1 408.5L1870.4 410.1L1868.7 408.5Z" fill="#015bb7" stroke="#24405e" stroke-width="0.45"/><path d="M1874.7 430.0L1876.3 431.7L1874.7 433.3L1873.1 431.7Z" fill="#0295d1" stroke="#24405e" stroke-width="0.45"/><path d="M1874.7 414.0L1876.3 415.6L1874.7 417.2L1873.0 415.6Z" fill="#016dbf" stroke="#24405e" stroke-width="0.45"/><path d="M1878.0 432.9L1879.6 434.4L1878.0 436.0L1876.4 434.4Z" fill="#029cd4" stroke="#24405e" stroke-width="0.45"/><path d="M1889.7 436.8L1891.3 438.3L1889.7 439.9L1888.2 438.3Z" fill="#03a5d8" stroke="#24405e" stroke-width="0.45"/><path d="M1870.2 412.7L1871.8 414.2L1870.2 415.8L1868.7 414.2Z" fill="#0169be" stroke="#24405e" stroke-width="0.45"/><path d="M1871.3 469.2L1872.9 470.8L1871.3 472.4L1869.7 470.8Z" fill="#05f7fb" stroke="#24405e" stroke-width="0.45"/><path d="M1851.4 428.3L1852.9 429.9L1851.4 431.4L1849.8 429.9Z" fill="#0290cf" stroke="#24405e" stroke-width="0.45"/><path d="M1862.9 400.9L1864.5 402.4L1862.9 403.9L1861.4 402.4Z" fill="#004bb1" stroke="#24405e" stroke-width="0.45"/><path d="M1863.9 406.9L1865.4 408.5L1863.9 410.0L1862.4 408.5Z" fill="#015bb7" stroke="#24405e" stroke-width="0.45"/><path d="M1873.7 408.4L1875.2 409.8L1873.7 411.3L1872.3 409.8Z" fill="#015eb9" stroke="#24405e" stroke-width="0.45"/><path d="M1864.6 398.8L1866.0 400.2L1864.6 401.6L1863.1 400.2Z" fill="#0046ae" stroke="#24405e" stroke-width="0.45"/><path d="M1870.9 404.8L1872.3 406.2L1870.9 407.6L1869.5 406.2Z" fill="#0155b5" stroke="#24405e" stroke-width="0.45"/><path d="M1872.7 413.2L1874.1 414.5L1872.7 415.9L1871.4 414.5Z" fill="#016abe" stroke="#24405e" stroke-width="0.45"/><path d="M1832.3 456.3L1833.6 457.6L1832.3 458.9L1830.9 457.6Z" fill="#04d6ed" stroke="#24405e" stroke-width="0.45"/><path d="M1869.9 415.4L1871.2 416.7L1869.9 418.0L1868.6 416.7Z" fill="#016fc0" stroke="#24405e" stroke-width="0.45"/><path d="M1862.7 408.5L1863.9 409.8L1862.7 411.0L1861.5 409.8Z" fill="#015eb9" stroke="#24405e" stroke-width="0.45"/><path d="M1865.1 396.3L1866.2 397.4L1865.1 398.5L1864.0 397.4Z" fill="#003fab" stroke="#24405e" stroke-width="0.45"/><path d="M1864.8 406.6L1865.9 407.7L1864.8 408.8L1863.7 407.7Z" fill="#0159b7" stroke="#24405e" stroke-width="0.45"/><path d="M1881.4 437.8L1882.5 438.9L1881.4 440.0L1880.4 438.9Z" fill="#03a7d9" stroke="#24405e" stroke-width="0.45"/><path d="M1878.1 415.1L1879.0 416.1L1878.1 417.0L1877.1 416.1Z" fill="#016ec0" stroke="#24405e" stroke-width="0.45"/><path d="M1882.4 416.6L1883.3 417.5L1882.4 418.3L1881.6 417.5Z" fill="#0171c1" stroke="#24405e" stroke-width="0.45"/><path d="M1869.1 422.8L1870.0 423.6L1869.1 424.5L1868.3 423.6Z" fill="#0281c8" stroke="#24405e" stroke-width="0.45"/><path d="M1878.2 429.4L1879.1 430.2L1878.2 431.0L1877.4 430.2Z" fill="#0291cf" stroke="#24405e" stroke-width="0.45"/><path d="M1867.0 399.5L1867.8 400.3L1867.0 401.2L1866.2 400.3Z" fill="#0046af" stroke="#24405e" stroke-width="0.45"/><path d="M1866.1 417.0L1866.9 417.9L1866.1 418.7L1865.3 417.9Z" fill="#0172c2" stroke="#24405e" stroke-width="0.45"/><path d="M1877.7 423.0L1878.5 423.8L1877.7 424.6L1876.9 423.8Z" fill="#0281c8" stroke="#24405e" stroke-width="0.45"/><path d="M1865.6 397.8L1866.4 398.6L1865.6 399.4L1864.8 398.6Z" fill="#0042ad" stroke="#24405e" stroke-width="0.45"/><path d="M1868.4 411.9L1869.2 412.7L1868.4 413.5L1867.6 412.7Z" fill="#0165bc" stroke="#24405e" stroke-width="0.45"/><g font-size="7.3" fill="#222"><text x="1614.1" y="340.8" text-anchor="middle">5</text><text x="1618.2" y="407.0" text-anchor="middle">0</text><text x="1623.8" y="470.7" text-anchor="middle">−5</text><text x="1628.4" y="532.4" text-anchor="middle">−10</text><text x="1632.0" y="592.0" text-anchor="middle">−15</text></g><g transform="translate(1602.9 501.2) rotate(90)" font-size="8.200" fill="#222" text-anchor="middle"><text x="0" y="-4">Depth</text><text x="0" y="7.500">(Km)</text></g><rect x="2253.8" y="286" width="15.800" height="469" fill="url(#p6jet)" stroke="#555" stroke-width="0.5"/><text x="2253.5" y="279.500" font-size="8.600" fill="#222">depth</text><g font-size="7.400" fill="#222"><text x="2272.5" y="360.8">0</text><path d="M2269.6 358.0h2" stroke="#444" stroke-width=".6"/><text x="2272.5" y="459.7">−5</text><path d="M2269.6 456.9h2" stroke="#444" stroke-width=".6"/><text x="2272.5" y="558.6">−10</text><path d="M2269.6 555.8h2" stroke="#444" stroke-width=".6"/><text x="2272.5" y="657.5">−15</text><path d="M2269.6 654.7h2" stroke="#444" stroke-width=".6"/><text x="2272.5" y="756.4">−20</text><path d="M2269.6 753.6h2" stroke="#444" stroke-width=".6"/></g><g transform="translate(1466.8 612.3) scale(0.7340)" font-family="'Liberation Sans',sans-serif"><rect x="0" y="0" width="268" height="203" fill="#ebebeb"/><rect x="76.700" y="1" width="103.300" height="19.800" fill="#fff"/><text x="91.200" y="16.200" font-size="14.500" fill="#222" textLength="73.700" lengthAdjust="spacingAndGlyphs">SIMBOLOGÍA</text><rect x="6.900" y="27.0" width="13.500" height="11.500" fill="#6a6666"/><text x="24.2" y="37.7" font-size="14.500" fill="#1a1a1a" textLength="110.0" lengthAdjust="spacingAndGlyphs">Estaciones Sísmicas</text><circle cx="13.3" cy="49.4" r="6.600" fill="#fa0808"/><text x="23.1" y="55.2" font-size="14.500" fill="#1a1a1a" textLength="168.1" lengthAdjust="spacingAndGlyphs">Eventos de Largo Periodo (LP)</text><circle cx="13.3" cy="69.0" r="6.300" fill="#efefef" stroke="#ee8a8a" stroke-width="0.700"/><text x="23.1" y="74.0" font-size="14.500" fill="#1a1a1a" textLength="204.6" lengthAdjust="spacingAndGlyphs">Eventos de Muy Largo Periodo (VLP)</text><path d="M13.3 81.8l8 8l-8 8l-8-8z" fill="#dd2cc0"/><text x="23.1" y="94.8" font-size="14.500" fill="#1a1a1a" textLength="181.9" lengthAdjust="spacingAndGlyphs">Eventos Volcano Tectónicos (VT)</text><path d="M13.3 102.0l7.500 8l-7.500 8l-7.500-8z" fill="#efefef" stroke="#e0a0dc" stroke-width="0.700"/><text x="23.1" y="115.0" font-size="14.500" fill="#1a1a1a" textLength="237.9" lengthAdjust="spacingAndGlyphs">Eventos Volcano Tectónicos Distales (VTD)</text><circle cx="13.3" cy="129.4" r="6.700" fill="#ed7d31" stroke="#c06020" stroke-width=".5"/><text x="23.8" y="134.4" font-size="14.500" fill="#1a1a1a" textLength="122.7" lengthAdjust="spacingAndGlyphs">Eventos Híbridos (HB)</text><circle cx="13.3" cy="151.0" r="6.800" fill="#70ad47" stroke="#508030" stroke-width=".5"/><text x="24.2" y="156.3" font-size="14.500" fill="#1a1a1a" textLength="95.8" lengthAdjust="spacingAndGlyphs">Explosiones(EXP)</text><path d="M10.3 163.3h6v4h4v6h-4v4h-6v-4h-4v-6h4z" fill="#548235"/><text x="23.8" y="176.3" font-size="14.500" fill="#1a1a1a" textLength="84.8" lengthAdjust="spacingAndGlyphs">Tremor (TREM)</text><path d="M10.3 183.6h6v4h4v6h-4v4h-6v-4h-4v-6h4z" fill="#efefef" stroke="#70a050" stroke-width=".7"/><text x="23.1" y="195.6" font-size="14.500" fill="#1a1a1a" textLength="129.8" lengthAdjust="spacingAndGlyphs">Eventos no clasificados</text></g></svg></div>
<div class="panel" id="p7" style="left:2306.6px;top:242.6px;width:700.2px;height:551.5px"><div class="ptitle">Eventos Chiles Cerro Negro - Streetmap</div><svg width="698.2" height="549.5" viewBox="2307.6 243.6 698.2 549.5" ><defs><clipPath id="p7clip"><rect x="2327.0" y="272.8" width="627.0" height="487.6"/></clipPath><filter id="p7T" x="2247.0" y="192.8" width="787.0" height="647.6" filterUnits="userSpaceOnUse" color-interpolation-filters="sRGB">
<feGaussianBlur in="SourceGraphic" stdDeviation="7" result="b"/>
<feTurbulence type="fractalNoise" baseFrequency="0.012" numOctaves="3" seed="4" result="n"/>
<feDisplacementMap in="b" in2="n" scale="34" xChannelSelector="R" yChannelSelector="G" result="d"/>
<feTurbulence type="fractalNoise" baseFrequency="0.11 0.209" numOctaves="4" seed="11" result="t0"/>
<feColorMatrix in="t0" type="matrix" values="1 0 0 0 0  1 0 0 0 0  1 0 0 0 0  0 0 0 0 1" result="t"/>
<feComposite in="d" in2="t" operator="arithmetic" k1="0.95" k2="0.5" k3="0" k4="0" result="tx"/>
<feTurbulence type="fractalNoise" baseFrequency="0.022" numOctaves="3" seed="17" result="m0"/>
<feColorMatrix in="m0" type="matrix" values="0 1 0 0 0  0 1 0 0 0  0 1 0 0 0  0 0 0 0 1" result="m"/>
<feComposite in="tx" in2="m" operator="arithmetic" k1="0.5" k2="0.72" k3="0" k4="0"/>
</filter>
<filter id="p7C" x="2247.0" y="192.8" width="787.0" height="647.6" filterUnits="userSpaceOnUse" color-interpolation-filters="sRGB">
<feGaussianBlur in="SourceGraphic" stdDeviation="3.2" result="b"/>
<feTurbulence type="fractalNoise" baseFrequency="0.05" numOctaves="4" seed="25" result="n0"/>
<feDisplacementMap in="b" in2="n0" scale="10" xChannelSelector="R" yChannelSelector="G" result="bd"/>
<feColorMatrix in="n0" type="matrix" values="0 0 0 0 1  0 0 0 0 1  0 0 0 0 1  1.1 0 0 0 0" result="n"/>
<feComposite in="bd" in2="n" operator="arithmetic" k1="2.5" k2="0.0" k3="0" k4="0" result="a"/>
<feComponentTransfer in="a" result="cl"><feFuncA type="linear" slope="1.9" intercept="-0.72"/></feComponentTransfer>
<feOffset in="cl" dx="4" dy="5" result="so"/>
<feColorMatrix in="so" type="matrix" values="0 0 0 0 0.02  0 0 0 0 0.05  0 0 0 0 0.02  0 0 0 0.5 0" result="sh0"/>
<feGaussianBlur in="sh0" stdDeviation="1.3" result="sh"/>
<feGaussianBlur in="cl" stdDeviation="1.1" result="cl2"/>
<feMerge><feMergeNode in="sh"/><feMergeNode in="cl2"/></feMerge>
</filter><linearGradient id="p7jet" x1="0" y1="0" x2="0" y2="1"><stop offset="0.000" stop-color="rgb(0,0,131)"/><stop offset="0.125" stop-color="rgb(0,60,170)"/><stop offset="0.375" stop-color="rgb(5,255,255)"/><stop offset="0.625" stop-color="rgb(255,255,0)"/><stop offset="0.875" stop-color="rgb(250,0,0)"/><stop offset="1.000" stop-color="rgb(128,0,0)"/></linearGradient></defs><g clip-path="url(#p7clip)"><g filter="url(#p7T)"><rect x="2247.0" y="192.8" width="787.0" height="647.6" fill="#344e32"/><ellipse cx="2435.8" cy="404.0" rx="152.9" ry="152.9" fill="#2f462d"/><ellipse cx="2412.7" cy="566.2" rx="120.5" ry="92.7" fill="#334c30"/><ellipse cx="2542.4" cy="334.5" rx="92.7" ry="55.6" fill="#385337"/><ellipse cx="2890.0" cy="459.6" rx="101.9" ry="139.0" fill="#3e5a36"/><ellipse cx="2852.9" cy="334.5" rx="69.5" ry="51.0" fill="#324930"/><ellipse cx="2899.2" cy="543.0" rx="69.5" ry="55.6" fill="#415d38"/><polygon points="2616.6,274.3 2700.0,265.0 2783.4,274.3 2804.2,348.4 2790.3,417.9 2732.4,464.3 2783.4,506.0 2806.6,552.3 2806.6,626.4 2822.8,635.7 2822.8,774.7 2523.9,774.7 2523.9,649.6 2516.9,589.4 2537.8,524.5 2579.5,482.8 2598.0,450.4 2618.9,404.0 2605.0,357.7" fill="#57472e"/><polygon points="2366.3,621.8 2505.4,596.3 2526.2,728.4 2435.8,756.2 2375.6,682.1" fill="#54462d"/><ellipse cx="2672.2" cy="561.6" rx="101.9" ry="74.1" fill="#5f4e30"/><ellipse cx="2704.6" cy="348.4" rx="69.5" ry="60.2" fill="#54462c"/><ellipse cx="2662.9" cy="482.8" rx="20.9" ry="11.6" fill="#9a8868"/><ellipse cx="2737.1" cy="709.9" rx="69.5" ry="41.7" fill="#4f4028"/><polygon points="2812.1,632.0 3015.1,632.0 3015.1,821.1 2812.1,821.1" fill="#38463c"/><ellipse cx="2625.8" cy="733.0" rx="51.0" ry="27.8" fill="#335234"/></g><polygon points="2820.5,635.7 2959.5,635.7 2959.5,765.5 2820.5,765.5" fill="#2c3c34" opacity="0.35"/><path d="M2333.9 272.9L2340.9 292.8L2347.8 306.7L2375.6 327.6L2403.4 329.9L2428.9 346.1L2472.9 360.0L2505.4 378.5L2542.4 399.4L2570.2 411.0L2588.8 431.8L2607.3 455.0L2616.6 468.9L2644.4 475.8L2686.1 487.4L2713.9 493.0L2774.1 502.3L2801.9 512.9L2852.9 509.7L2894.6 492.1L2917.8 464.3L2953.5 448.0" fill="none" stroke="#20262a" stroke-width="2.6" stroke-linejoin="round" opacity=".8"/><path d="M2333.9 272.9L2340.9 292.8L2347.8 306.7L2375.6 327.6L2403.4 329.9L2428.9 346.1L2472.9 360.0L2505.4 378.5L2542.4 399.4L2570.2 411.0L2588.8 431.8L2607.3 455.0L2616.6 468.9L2644.4 475.8L2686.1 487.4L2713.9 493.0L2774.1 502.3L2801.9 512.9L2852.9 509.7L2894.6 492.1L2917.8 464.3L2953.5 448.0" fill="none" stroke="#a8b0b4" stroke-width="1.1" stroke-linejoin="round"/><g filter="url(#p7C)" opacity="0.93"><ellipse cx="2484.5" cy="290.5" rx="8.5" ry="11.1" fill="#fff" transform="rotate(-20 2484.5 290.5)"/><ellipse cx="2873.8" cy="285.9" rx="20.5" ry="12.8" fill="#fff" transform="rotate(-20 2873.8 285.9)"/><ellipse cx="2899.2" cy="311.3" rx="11.1" ry="9.4" fill="#fff" transform="rotate(-20 2899.2 311.3)"/><ellipse cx="2818.1" cy="346.1" rx="11.1" ry="8.5" fill="#fff" transform="rotate(-20 2818.1 346.1)"/><ellipse cx="2725.5" cy="355.4" rx="5.5" ry="6.0" fill="#fff" transform="rotate(-20 2725.5 355.4)"/><ellipse cx="2744.0" cy="399.4" rx="4.3" ry="5.5" fill="#fff" transform="rotate(-20 2744.0 399.4)"/><ellipse cx="2505.4" cy="387.8" rx="20.5" ry="6.8" fill="#fff" transform="rotate(-20 2505.4 387.8)"/><ellipse cx="2493.8" cy="450.4" rx="7.7" ry="11.1" fill="#fff" transform="rotate(-20 2493.8 450.4)"/><ellipse cx="2523.9" cy="459.6" rx="5.1" ry="9.4" fill="#fff" transform="rotate(-20 2523.9 459.6)"/><ellipse cx="2454.4" cy="436.5" rx="10.2" ry="6.4" fill="#fff" transform="rotate(-20 2454.4 436.5)"/><ellipse cx="2364.0" cy="475.8" rx="32.0" ry="24.7" fill="#fff" transform="rotate(-20 2364.0 475.8)"/><ellipse cx="2366.3" cy="524.5" rx="29.8" ry="22.2" fill="#fff" transform="rotate(-20 2366.3 524.5)"/><ellipse cx="2347.8" cy="450.4" rx="17.1" ry="12.8" fill="#fff" transform="rotate(-20 2347.8 450.4)"/><ellipse cx="2347.8" cy="561.6" rx="16.2" ry="10.7" fill="#fff" transform="rotate(-20 2347.8 561.6)"/><ellipse cx="2452.1" cy="510.6" rx="11.9" ry="9.4" fill="#fff" transform="rotate(-20 2452.1 510.6)"/><ellipse cx="2491.5" cy="552.3" rx="23.4" ry="11.9" fill="#fff" transform="rotate(-20 2491.5 552.3)"/><ellipse cx="2338.5" cy="427.2" rx="9.4" ry="11.9" fill="#fff" transform="rotate(-20 2338.5 427.2)"/><ellipse cx="2695.3" cy="626.4" rx="8.5" ry="13.6" fill="#fff" transform="rotate(-20 2695.3 626.4)"/><ellipse cx="2760.2" cy="621.8" rx="10.7" ry="6.8" fill="#fff" transform="rotate(-20 2760.2 621.8)"/><ellipse cx="2827.4" cy="617.2" rx="14.5" ry="8.5" fill="#fff" transform="rotate(-20 2827.4 617.2)"/><ellipse cx="2788.0" cy="654.2" rx="15.3" ry="11.1" fill="#fff" transform="rotate(-20 2788.0 654.2)"/><ellipse cx="2890.0" cy="672.8" rx="17.1" ry="12.8" fill="#fff" transform="rotate(-20 2890.0 672.8)"/><ellipse cx="2908.5" cy="696.0" rx="12.8" ry="12.8" fill="#fff" transform="rotate(-20 2908.5 696.0)"/><ellipse cx="2852.9" cy="705.2" rx="14.9" ry="10.7" fill="#fff" transform="rotate(-20 2852.9 705.2)"/><ellipse cx="2940.9" cy="654.2" rx="9.4" ry="9.4" fill="#fff" transform="rotate(-20 2940.9 654.2)"/><ellipse cx="2357.1" cy="672.8" rx="19.2" ry="19.2" fill="#fff" transform="rotate(-20 2357.1 672.8)"/><ellipse cx="2472.9" cy="654.2" rx="42.6" ry="17.1" fill="#fff" transform="rotate(-20 2472.9 654.2)"/><ellipse cx="2454.4" cy="696.0" rx="17.1" ry="9.4" fill="#fff" transform="rotate(-20 2454.4 696.0)"/><ellipse cx="2528.5" cy="719.1" rx="40.5" ry="17.9" fill="#fff" transform="rotate(-20 2528.5 719.1)"/><ellipse cx="2505.4" cy="682.1" rx="11.9" ry="7.7" fill="#fff" transform="rotate(-20 2505.4 682.1)"/><ellipse cx="2366.3" cy="737.7" rx="17.1" ry="11.9" fill="#fff" transform="rotate(-20 2366.3 737.7)"/><ellipse cx="2329.3" cy="524.5" rx="7.7" ry="14.9" fill="#fff" transform="rotate(-20 2329.3 524.5)"/><ellipse cx="2880.7" cy="278.9" rx="17.1" ry="10.7" fill="#fff" transform="rotate(-20 2880.7 278.9)"/><ellipse cx="2398.8" cy="709.9" rx="10.7" ry="8.5" fill="#fff" transform="rotate(-20 2398.8 709.9)"/></g><ellipse cx="2554.0" cy="618.1" rx="5.6" ry="3.2" fill="#0c120c" opacity="0.90"/><ellipse cx="2644.4" cy="348.4" rx="2.8" ry="2.3" fill="#0c120c" opacity="0.90"/><ellipse cx="2666.2" cy="677.4" rx="3.7" ry="2.8" fill="#0c120c" opacity="0.90"/><ellipse cx="2776.4" cy="686.7" rx="4.6" ry="3.7" fill="#0c120c" opacity="0.90"/><ellipse cx="2769.5" cy="726.1" rx="4.2" ry="3.2" fill="#0c120c" opacity="0.90"/><ellipse cx="2880.7" cy="334.5" rx="4.2" ry="4.2" fill="#0c120c" opacity="0.90"/><circle cx="2656.4" cy="536.5" r="3.1" fill="#1c8ee6" opacity="0.92"/><circle cx="2685.3" cy="596.0" r="2.7" fill="#1c8ee6" opacity="0.92"/><circle cx="2684.8" cy="528.9" r="2.7" fill="#1c8ee6" opacity="0.92"/><circle cx="2645.4" cy="527.1" r="2.6" fill="#1c8ee6" opacity="0.92"/><circle cx="2683.7" cy="537.6" r="2.6" fill="#1c8ee6" opacity="0.92"/><circle cx="2651.0" cy="533.6" r="2.6" fill="#1c8ee6" opacity="0.92"/><circle cx="2664.3" cy="539.1" r="2.5" fill="#1c8ee6" opacity="0.92"/><circle cx="2594.4" cy="501.7" r="2.5" fill="#1c8ee6" opacity="0.92"/><circle cx="2646.8" cy="526.8" r="2.5" fill="#1c8ee6" opacity="0.92"/><circle cx="2664.6" cy="525.7" r="2.4" fill="#1c8ee6" opacity="0.92"/><circle cx="2663.6" cy="513.0" r="2.4" fill="#1c8ee6" opacity="0.92"/><circle cx="2674.4" cy="505.5" r="2.3" fill="#1c8ee6" opacity="0.92"/><circle cx="2665.7" cy="517.0" r="2.3" fill="#1c8ee6" opacity="0.92"/><circle cx="2667.1" cy="511.4" r="2.3" fill="#1c8ee6" opacity="0.92"/><circle cx="2665.6" cy="521.2" r="2.3" fill="#1c8ee6" opacity="0.92"/><circle cx="2660.7" cy="522.4" r="2.3" fill="#1c8ee6" opacity="0.92"/><circle cx="2664.3" cy="507.7" r="2.3" fill="#1c8ee6" opacity="0.92"/><circle cx="2675.3" cy="532.0" r="2.3" fill="#1c8ee6" opacity="0.92"/><circle cx="2696.8" cy="535.4" r="2.3" fill="#1c8ee6" opacity="0.92"/><circle cx="2664.4" cy="515.7" r="2.3" fill="#1c8ee6" opacity="0.92"/><circle cx="2697.9" cy="561.5" r="2.3" fill="#1c8ee6" opacity="0.92"/><circle cx="2664.3" cy="506.1" r="2.2" fill="#1c8ee6" opacity="0.92"/><circle cx="2657.9" cy="522.1" r="2.2" fill="#1c8ee6" opacity="0.92"/><circle cx="2664.3" cy="532.7" r="2.2" fill="#1c8ee6" opacity="0.92"/><circle cx="2652.6" cy="519.1" r="2.2" fill="#1c8ee6" opacity="0.92"/><circle cx="2660.6" cy="535.7" r="2.2" fill="#1c8ee6" opacity="0.92"/><circle cx="2664.1" cy="512.7" r="2.2" fill="#1c8ee6" opacity="0.92"/><circle cx="2663.4" cy="535.7" r="2.2" fill="#1c8ee6" opacity="0.92"/><circle cx="2660.8" cy="541.1" r="2.2" fill="#1c8ee6" opacity="0.92"/><circle cx="2665.5" cy="520.1" r="2.2" fill="#1c8ee6" opacity="0.92"/><circle cx="2666.6" cy="537.3" r="2.1" fill="#1c8ee6" opacity="0.92"/><circle cx="2668.7" cy="499.9" r="2.1" fill="#1c8ee6" opacity="0.92"/><circle cx="2662.8" cy="526.0" r="2.1" fill="#1c8ee6" opacity="0.92"/><circle cx="2667.2" cy="502.7" r="2.1" fill="#1c8ee6" opacity="0.92"/><circle cx="2667.9" cy="516.1" r="2.0" fill="#1c8ee6" opacity="0.92"/><circle cx="2661.2" cy="516.9" r="2.0" fill="#1c8ee6" opacity="0.92"/><circle cx="2656.3" cy="523.3" r="2.0" fill="#1c8ee6" opacity="0.92"/><circle cx="2649.1" cy="538.9" r="2.0" fill="#1c8ee6" opacity="0.92"/><circle cx="2655.5" cy="539.4" r="2.0" fill="#1c8ee6" opacity="0.92"/><circle cx="2649.8" cy="523.4" r="2.0" fill="#1c8ee6" opacity="0.92"/><circle cx="2670.1" cy="515.3" r="2.0" fill="#1c8ee6" opacity="0.92"/><circle cx="2663.3" cy="524.1" r="2.0" fill="#1c8ee6" opacity="0.92"/><circle cx="2660.8" cy="510.1" r="2.0" fill="#1c8ee6" opacity="0.92"/><circle cx="2665.7" cy="518.6" r="2.0" fill="#1c8ee6" opacity="0.92"/><circle cx="2654.1" cy="509.8" r="2.0" fill="#1c8ee6" opacity="0.92"/><circle cx="2657.0" cy="514.3" r="2.0" fill="#1c8ee6" opacity="0.92"/><circle cx="2654.8" cy="525.6" r="2.0" fill="#1c8ee6" opacity="0.92"/><circle cx="2672.3" cy="526.9" r="2.0" fill="#1c8ee6" opacity="0.92"/><circle cx="2660.2" cy="515.9" r="2.0" fill="#1c8ee6" opacity="0.92"/><circle cx="2660.2" cy="526.3" r="2.0" fill="#1c8ee6" opacity="0.92"/><circle cx="2670.2" cy="508.6" r="2.0" fill="#1c8ee6" opacity="0.92"/><circle cx="2666.3" cy="497.6" r="1.9" fill="#1c8ee6" opacity="0.92"/><circle cx="2665.0" cy="511.6" r="1.9" fill="#1c8ee6" opacity="0.92"/><circle cx="2663.9" cy="507.5" r="1.9" fill="#1c8ee6" opacity="0.92"/><circle cx="2792.6" cy="317.6" r="1.9" fill="#1c8ee6" opacity="0.92"/><circle cx="2664.3" cy="499.7" r="1.9" fill="#1c8ee6" opacity="0.92"/><circle cx="2664.7" cy="527.4" r="1.9" fill="#1c8ee6" opacity="0.92"/><circle cx="2666.9" cy="512.5" r="1.9" fill="#1c8ee6" opacity="0.92"/><circle cx="2678.2" cy="527.6" r="1.9" fill="#1c8ee6" opacity="0.92"/><circle cx="2656.0" cy="512.4" r="1.9" fill="#1c8ee6" opacity="0.92"/><circle cx="2670.4" cy="511.8" r="1.9" fill="#1c8ee6" opacity="0.92"/><circle cx="2663.5" cy="508.2" r="1.8" fill="#1c8ee6" opacity="0.92"/><circle cx="2673.0" cy="522.6" r="1.8" fill="#1c8ee6" opacity="0.92"/><circle cx="2665.7" cy="514.1" r="1.8" fill="#1c8ee6" opacity="0.92"/><circle cx="2671.3" cy="516.1" r="1.8" fill="#1c8ee6" opacity="0.92"/><circle cx="2655.7" cy="509.4" r="1.8" fill="#1c8ee6" opacity="0.92"/><circle cx="2663.1" cy="522.2" r="1.8" fill="#1c8ee6" opacity="0.92"/><circle cx="2659.1" cy="522.5" r="1.8" fill="#1c8ee6" opacity="0.92"/><circle cx="2641.3" cy="531.1" r="1.8" fill="#1c8ee6" opacity="0.92"/><circle cx="2653.6" cy="529.2" r="1.8" fill="#1c8ee6" opacity="0.92"/><circle cx="2660.1" cy="511.4" r="1.8" fill="#1c8ee6" opacity="0.92"/><circle cx="2678.8" cy="502.9" r="1.8" fill="#1c8ee6" opacity="0.92"/><circle cx="2665.9" cy="518.6" r="1.8" fill="#1c8ee6" opacity="0.92"/><circle cx="2668.7" cy="508.6" r="1.8" fill="#1c8ee6" opacity="0.92"/><circle cx="2667.1" cy="517.2" r="1.8" fill="#1c8ee6" opacity="0.92"/><circle cx="2647.9" cy="498.8" r="1.8" fill="#1c8ee6" opacity="0.92"/><circle cx="2664.4" cy="515.0" r="1.8" fill="#1c8ee6" opacity="0.92"/><circle cx="2665.8" cy="534.2" r="1.8" fill="#1c8ee6" opacity="0.92"/><circle cx="2646.6" cy="520.2" r="1.7" fill="#1c8ee6" opacity="0.92"/><circle cx="2670.0" cy="512.0" r="1.7" fill="#1c8ee6" opacity="0.92"/><circle cx="2667.0" cy="531.6" r="1.7" fill="#1c8ee6" opacity="0.92"/><circle cx="2662.7" cy="514.3" r="1.7" fill="#1c8ee6" opacity="0.92"/><circle cx="2663.3" cy="527.2" r="1.7" fill="#1c8ee6" opacity="0.92"/><circle cx="2657.2" cy="507.1" r="1.7" fill="#1c8ee6" opacity="0.92"/><circle cx="2660.5" cy="506.0" r="1.7" fill="#1c8ee6" opacity="0.92"/><circle cx="2662.9" cy="527.2" r="1.7" fill="#1c8ee6" opacity="0.92"/><circle cx="2661.7" cy="531.1" r="1.7" fill="#1c8ee6" opacity="0.92"/><circle cx="2659.9" cy="504.9" r="1.7" fill="#1c8ee6" opacity="0.92"/><circle cx="2667.6" cy="506.6" r="1.7" fill="#1c8ee6" opacity="0.92"/><circle cx="2669.4" cy="500.3" r="1.7" fill="#1c8ee6" opacity="0.92"/><circle cx="2672.5" cy="516.1" r="1.7" fill="#1c8ee6" opacity="0.92"/><circle cx="2676.4" cy="525.1" r="1.7" fill="#1c8ee6" opacity="0.92"/><circle cx="2671.1" cy="525.8" r="1.7" fill="#1c8ee6" opacity="0.92"/><circle cx="2662.1" cy="526.0" r="1.7" fill="#1c8ee6" opacity="0.92"/><circle cx="2662.9" cy="530.0" r="1.6" fill="#1c8ee6" opacity="0.92"/><circle cx="2668.8" cy="523.9" r="1.6" fill="#1c8ee6" opacity="0.92"/><circle cx="2604.2" cy="472.3" r="1.6" fill="#1c8ee6" opacity="0.92"/><circle cx="2667.5" cy="495.9" r="1.6" fill="#1c8ee6" opacity="0.92"/><circle cx="2667.3" cy="500.9" r="1.6" fill="#1c8ee6" opacity="0.92"/><circle cx="2657.9" cy="523.4" r="1.6" fill="#1c8ee6" opacity="0.92"/><circle cx="2669.6" cy="530.2" r="1.6" fill="#1c8ee6" opacity="0.92"/><circle cx="2668.1" cy="516.6" r="1.6" fill="#1c8ee6" opacity="0.92"/><circle cx="2663.4" cy="512.2" r="1.6" fill="#1c8ee6" opacity="0.92"/><circle cx="2667.3" cy="513.0" r="1.6" fill="#1c8ee6" opacity="0.92"/><circle cx="2657.3" cy="531.3" r="1.6" fill="#1c8ee6" opacity="0.92"/><circle cx="2672.1" cy="509.3" r="1.6" fill="#1c8ee6" opacity="0.92"/><circle cx="2653.9" cy="503.4" r="1.6" fill="#1c8ee6" opacity="0.92"/><circle cx="2659.4" cy="532.3" r="1.6" fill="#1c8ee6" opacity="0.92"/><circle cx="2668.5" cy="519.7" r="1.6" fill="#1c8ee6" opacity="0.92"/><circle cx="2661.5" cy="514.5" r="1.6" fill="#1c8ee6" opacity="0.92"/><circle cx="2668.8" cy="501.6" r="1.5" fill="#1c8ee6" opacity="0.92"/><circle cx="2669.9" cy="520.7" r="1.5" fill="#1c8ee6" opacity="0.92"/><circle cx="2665.7" cy="507.1" r="1.5" fill="#1c8ee6" opacity="0.92"/><circle cx="2672.8" cy="519.9" r="1.5" fill="#1c8ee6" opacity="0.92"/><circle cx="2657.9" cy="532.7" r="1.5" fill="#1c8ee6" opacity="0.92"/><circle cx="2661.3" cy="516.1" r="1.5" fill="#1c8ee6" opacity="0.92"/><circle cx="2675.3" cy="511.0" r="1.5" fill="#1c8ee6" opacity="0.92"/><circle cx="2661.5" cy="513.2" r="1.5" fill="#1c8ee6" opacity="0.92"/><circle cx="2647.8" cy="523.4" r="1.5" fill="#1c8ee6" opacity="0.92"/><circle cx="2664.0" cy="501.2" r="1.5" fill="#1c8ee6" opacity="0.92"/><circle cx="2662.6" cy="500.6" r="1.5" fill="#1c8ee6" opacity="0.92"/><circle cx="2662.4" cy="506.7" r="1.5" fill="#1c8ee6" opacity="0.92"/><circle cx="2656.9" cy="519.5" r="1.5" fill="#1c8ee6" opacity="0.92"/><circle cx="2644.6" cy="517.3" r="1.5" fill="#1c8ee6" opacity="0.92"/><circle cx="2670.4" cy="509.8" r="1.5" fill="#1c8ee6" opacity="0.92"/><circle cx="2667.0" cy="514.4" r="1.5" fill="#1c8ee6" opacity="0.92"/><circle cx="2665.5" cy="503.1" r="1.4" fill="#1c8ee6" opacity="0.92"/><circle cx="2651.3" cy="521.3" r="1.4" fill="#1c8ee6" opacity="0.92"/><circle cx="2654.2" cy="537.8" r="1.4" fill="#1c8ee6" opacity="0.92"/><circle cx="2601.0" cy="500.6" r="1.4" fill="#1c8ee6" opacity="0.92"/><circle cx="2648.9" cy="541.9" r="1.4" fill="#1c8ee6" opacity="0.92"/><circle cx="2669.6" cy="519.5" r="1.4" fill="#1c8ee6" opacity="0.92"/><circle cx="2667.5" cy="505.1" r="1.4" fill="#1c8ee6" opacity="0.92"/><circle cx="2678.2" cy="536.0" r="1.4" fill="#1c8ee6" opacity="0.92"/><circle cx="2670.4" cy="494.7" r="1.4" fill="#1c8ee6" opacity="0.92"/><circle cx="2672.6" cy="508.2" r="1.4" fill="#1c8ee6" opacity="0.92"/><circle cx="2670.4" cy="532.5" r="1.4" fill="#1c8ee6" opacity="0.92"/><circle cx="2674.6" cy="516.6" r="1.4" fill="#1c8ee6" opacity="0.92"/><circle cx="2681.6" cy="509.3" r="1.4" fill="#1c8ee6" opacity="0.92"/><circle cx="2665.8" cy="541.6" r="1.4" fill="#1c8ee6" opacity="0.92"/><circle cx="2663.6" cy="502.1" r="1.4" fill="#1c8ee6" opacity="0.92"/><circle cx="2664.9" cy="522.9" r="1.3" fill="#1c8ee6" opacity="0.92"/><circle cx="2653.9" cy="541.9" r="1.3" fill="#1c8ee6" opacity="0.92"/><circle cx="2658.8" cy="501.0" r="1.3" fill="#1c8ee6" opacity="0.92"/><circle cx="2664.7" cy="517.5" r="1.3" fill="#1c8ee6" opacity="0.92"/><circle cx="2650.6" cy="524.8" r="1.3" fill="#1c8ee6" opacity="0.92"/><circle cx="2645.6" cy="535.4" r="1.3" fill="#1c8ee6" opacity="0.92"/><circle cx="2660.6" cy="509.5" r="1.3" fill="#1c8ee6" opacity="0.92"/><circle cx="2652.6" cy="527.6" r="1.3" fill="#1c8ee6" opacity="0.92"/><circle cx="2673.7" cy="516.8" r="1.3" fill="#1c8ee6" opacity="0.92"/><circle cx="2647.6" cy="531.7" r="1.3" fill="#1c8ee6" opacity="0.92"/><circle cx="2661.9" cy="521.4" r="1.3" fill="#1c8ee6" opacity="0.92"/><circle cx="2665.8" cy="536.3" r="1.3" fill="#1c8ee6" opacity="0.92"/><circle cx="2667.0" cy="535.0" r="1.3" fill="#1c8ee6" opacity="0.92"/><circle cx="2658.2" cy="526.7" r="1.3" fill="#1c8ee6" opacity="0.92"/><circle cx="2656.5" cy="532.3" r="1.3" fill="#1c8ee6" opacity="0.92"/><circle cx="2668.3" cy="528.2" r="1.3" fill="#1c8ee6" opacity="0.92"/><circle cx="2665.2" cy="538.0" r="1.3" fill="#1c8ee6" opacity="0.92"/><circle cx="2656.6" cy="509.9" r="1.3" fill="#1c8ee6" opacity="0.92"/><circle cx="2659.0" cy="506.0" r="1.2" fill="#1c8ee6" opacity="0.92"/><circle cx="2662.4" cy="523.3" r="1.2" fill="#1c8ee6" opacity="0.92"/><circle cx="2677.8" cy="530.5" r="1.2" fill="#1c8ee6" opacity="0.92"/><circle cx="2672.7" cy="524.3" r="1.2" fill="#1c8ee6" opacity="0.92"/><circle cx="2656.4" cy="514.6" r="1.2" fill="#1c8ee6" opacity="0.92"/><circle cx="2687.0" cy="483.1" r="1.2" fill="#1c8ee6" opacity="0.92"/><circle cx="2662.2" cy="533.1" r="1.2" fill="#1c8ee6" opacity="0.92"/><circle cx="2665.6" cy="530.4" r="1.2" fill="#1c8ee6" opacity="0.92"/><circle cx="2680.5" cy="506.1" r="1.2" fill="#1c8ee6" opacity="0.92"/><circle cx="2649.3" cy="526.2" r="1.2" fill="#1c8ee6" opacity="0.92"/><circle cx="2662.6" cy="527.9" r="1.1" fill="#1c8ee6" opacity="0.92"/><circle cx="2569.4" cy="470.1" r="1.1" fill="#1c8ee6" opacity="0.92"/><circle cx="2654.7" cy="514.8" r="1.1" fill="#1c8ee6" opacity="0.92"/><circle cx="2651.0" cy="500.8" r="1.1" fill="#1c8ee6" opacity="0.92"/><circle cx="2669.6" cy="510.0" r="1.1" fill="#1c8ee6" opacity="0.92"/><circle cx="2655.5" cy="521.2" r="1.1" fill="#1c8ee6" opacity="0.92"/><circle cx="2662.1" cy="509.3" r="1.1" fill="#1c8ee6" opacity="0.92"/><circle cx="2661.5" cy="516.9" r="1.0" fill="#1c8ee6" opacity="0.92"/><circle cx="2658.8" cy="533.3" r="1.0" fill="#1c8ee6" opacity="0.92"/><circle cx="2668.4" cy="532.4" r="1.0" fill="#1c8ee6" opacity="0.92"/><circle cx="2682.0" cy="526.8" r="1.0" fill="#1c8ee6" opacity="0.92"/><circle cx="2671.8" cy="517.0" r="1.0" fill="#1c8ee6" opacity="0.92"/><circle cx="2675.0" cy="517.7" r="1.0" fill="#1c8ee6" opacity="0.92"/><circle cx="2663.0" cy="518.6" r="0.9" fill="#1c8ee6" opacity="0.92"/><circle cx="2658.9" cy="516.3" r="0.9" fill="#1c8ee6" opacity="0.92"/><circle cx="2668.9" cy="527.2" r="0.9" fill="#1c8ee6" opacity="0.92"/><circle cx="2655.4" cy="539.9" r="0.9" fill="#1c8ee6" opacity="0.92"/><circle cx="2662.9" cy="510.9" r="0.9" fill="#1c8ee6" opacity="0.92"/><circle cx="2670.7" cy="516.9" r="0.9" fill="#1c8ee6" opacity="0.92"/><circle cx="2733.8" cy="516.9" r="0.9" fill="#1c8ee6" opacity="0.92"/><circle cx="2663.1" cy="498.8" r="0.9" fill="#1c8ee6" opacity="0.92"/><circle cx="2671.9" cy="505.1" r="0.9" fill="#1c8ee6" opacity="0.92"/><circle cx="2657.5" cy="514.0" r="0.8" fill="#1c8ee6" opacity="0.92"/><circle cx="2663.9" cy="502.0" r="0.8" fill="#1c8ee6" opacity="0.92"/><circle cx="2665.0" cy="513.2" r="0.8" fill="#1c8ee6" opacity="0.92"/><circle cx="2660.2" cy="513.7" r="0.8" fill="#1c8ee6" opacity="0.92"/><circle cx="2548.7" cy="386.2" r="0.7" fill="#1c8ee6" opacity="0.92"/><circle cx="2663.8" cy="510.8" r="0.7" fill="#1c8ee6" opacity="0.92"/><circle cx="2655.0" cy="494.1" r="0.7" fill="#1c8ee6" opacity="0.92"/><circle cx="2676.0" cy="509.3" r="0.6" fill="#1c8ee6" opacity="0.92"/><circle cx="2668.7" cy="504.9" r="0.6" fill="#1c8ee6" opacity="0.92"/><circle cx="2672.2" cy="534.8" r="0.6" fill="#1c8ee6" opacity="0.92"/><circle cx="2658.6" cy="521.9" r="0.6" fill="#1c8ee6" opacity="0.92"/><circle cx="2656.0" cy="527.9" r="0.6" fill="#1c8ee6" opacity="0.92"/><circle cx="2672.3" cy="514.1" r="0.6" fill="#1c8ee6" opacity="0.92"/><circle cx="2660.0" cy="522.9" r="0.6" fill="#1c8ee6" opacity="0.92"/><circle cx="2671.4" cy="510.0" r="0.6" fill="#1c8ee6" opacity="0.92"/><circle cx="2676.3" cy="511.1" r="0.6" fill="#1c8ee6" opacity="0.92"/><circle cx="2662.3" cy="523.2" r="0.6" fill="#1c8ee6" opacity="0.92"/><circle cx="2664.6" cy="504.0" r="0.6" fill="#1c8ee6" opacity="0.92"/><circle cx="2671.2" cy="512.3" r="0.6" fill="#1c8ee6" opacity="0.92"/><path d="M2421.9 388.5l7.600 12.400h-15.200z" fill="#fff" stroke="#ddd" stroke-width=".3"/><text x="2419.4" y="390.7" text-anchor="end" font-size="6" fill="#b9bdb4" opacity=".9">CHIW</text><path d="M2638.8 384.8l7.600 12.400h-15.200z" fill="#fff" stroke="#ddd" stroke-width=".3"/><text x="2636.3" y="387.0" text-anchor="end" font-size="6" fill="#b9bdb4" opacity=".9">ICAN</text><path d="M2774.6 411.2l7.600 12.400h-15.200z" fill="#fff" stroke="#ddd" stroke-width=".3"/><text x="2772.1" y="413.4" text-anchor="end" font-size="6" fill="#b9bdb4" opacity=".9">IPAN</text><path d="M2611.5 445.0l7.600 12.400h-15.200z" fill="#fff" stroke="#ddd" stroke-width=".3"/><text x="2609.0" y="447.2" text-anchor="end" font-size="6" fill="#b9bdb4" opacity=".9">CERN</text><path d="M2656.0 471.9l7.600 12.400h-15.200z" fill="#fff" stroke="#ddd" stroke-width=".3"/><text x="2653.5" y="474.1" text-anchor="end" font-size="6" fill="#b9bdb4" opacity=".9">ICHI</text><path d="M2701.8 505.7l7.600 12.400h-15.200z" fill="#fff" stroke="#ddd" stroke-width=".3"/><text x="2699.3" y="507.9" text-anchor="end" font-size="6" fill="#b9bdb4" opacity=".9">CHL2</text><path d="M2647.6 525.2l7.600 12.400h-15.200z" fill="#fff" stroke="#ddd" stroke-width=".3"/><text x="2645.1" y="527.4" text-anchor="end" font-size="6" fill="#b9bdb4" opacity=".9">CHL1</text><path d="M2809.3 490.4l7.600 12.400h-15.200z" fill="#fff" stroke="#ddd" stroke-width=".3"/><text x="2806.8" y="492.6" text-anchor="end" font-size="6" fill="#b9bdb4" opacity=".9">ITER</text><path d="M2536.9 625.7l7.600 12.400h-15.200z" fill="#fff" stroke="#ddd" stroke-width=".3"/><text x="2534.4" y="627.9" text-anchor="end" font-size="6" fill="#b9bdb4" opacity=".9">LNGL</text><g font-weight="bold" fill="#e8ece6" stroke="#222" stroke-width="1.2" paint-order="stroke" stroke-opacity=".55"><text x="2408.0" y="339.6" text-anchor="middle" font-size="6.8" letter-spacing="0.1">Punte Palo</text><text x="2441.9" y="457.3" text-anchor="middle" font-size="6.8" letter-spacing="0.6">EL LAUREL</text><text x="2438.2" y="581.5" text-anchor="middle" font-size="6.8" letter-spacing="0.1">El Morán</text><text x="2842.2" y="494.4" text-anchor="middle" font-size="9" letter-spacing="0.1">Chiles</text><text x="2922.4" y="392.4" text-anchor="start" font-size="6.8" letter-spacing="0.1">La Bolle</text><text x="2893.2" y="439.2" text-anchor="middle" font-size="6.8" letter-spacing="0.1">Panán</text><text x="2931.7" y="564.8" text-anchor="middle" font-size="6.8" letter-spacing="0.1">Arrayán</text><text x="2839.0" y="283.5" text-anchor="middle" font-size="6.5" letter-spacing="0.1">La Drdiga</text><text x="2935.4" y="308.1" text-anchor="start" font-size="8.5" letter-spacing="0.1">Cum</text><text x="2615.2" y="759.9" text-anchor="middle" font-size="6.8" letter-spacing="0.1">Jesus del</text><text x="2327.0" y="299.7" text-anchor="start" font-size="6.5" letter-spacing="0.1">ldonado</text><text x="2943.3" y="487.4" text-anchor="start" font-size="6.8" letter-spacing="0.1">San</text></g><g font-size="6.3" font-style="italic" fill="#55c070" text-anchor="middle"><text x="2637.0" y="661.3">Reserva Ecológica</text><text x="2637.0" y="669.3">El Ángel</text></g><circle cx="2339.9" cy="748.3" r="5" fill="#fff" stroke="#333" stroke-width="1"/><circle cx="2340.2" cy="748.1" r="2.300" fill="none" stroke="#333" stroke-width="1.2"/><circle cx="2938.6" cy="746.9" r="6.300" fill="#9aa" opacity=".75"/><text x="2938.6" y="750.0" text-anchor="middle" font-size="9" font-weight="bold" fill="#444">i</text></g><rect x="2960.3" y="294.400" width="13.200" height="459.600" fill="url(#p7jet)"/><text x="2960" y="288.500" font-size="8.600" class="dj" fill="#aaa">depth</text><text x="2976.200" y="366.3" font-size="7.400" class="dj" fill="#aaa">0</text><path d="M2973.500 363.6h2" stroke="#aaa" stroke-width=".5"/><text x="2976.200" y="463.9" font-size="7.400" class="dj" fill="#aaa">−5</text><path d="M2973.500 461.2h2" stroke="#aaa" stroke-width=".5"/><text x="2976.200" y="561.5" font-size="7.400" class="dj" fill="#aaa">−10</text><path d="M2973.500 558.8h2" stroke="#aaa" stroke-width=".5"/><text x="2976.200" y="659.1" font-size="7.400" class="dj" fill="#aaa">−15</text><path d="M2973.500 656.4h2" stroke="#aaa" stroke-width=".5"/><text x="2976.200" y="756.7" font-size="7.400" class="dj" fill="#aaa">−20</text><path d="M2973.500 754.0h2" stroke="#aaa" stroke-width=".5"/></svg></div>
<div class="panel" id="p8" style="left:190.1px;top:774.1px;width:1546.8px;height:652.7px"><div class="ptitle">Events over time</div><svg width="1544.8" height="650.7" viewBox="191.1 775.1 1544.8 650.7" ><defs><clipPath id="p8clip"><rect x="196.3" y="801.5" width="1532.4" height="598.1"/></clipPath><filter id="p8T" x="96.3" y="701.5" width="1732.4" height="798.1" filterUnits="userSpaceOnUse" color-interpolation-filters="sRGB">
<feGaussianBlur in="SourceGraphic" stdDeviation="9" result="b"/>
<feTurbulence type="fractalNoise" baseFrequency="0.012" numOctaves="3" seed="9" result="n"/>
<feDisplacementMap in="b" in2="n" scale="46" xChannelSelector="R" yChannelSelector="G" result="d"/>
<feTurbulence type="fractalNoise" baseFrequency="0.07 0.133" numOctaves="4" seed="16" result="t0"/>
<feColorMatrix in="t0" type="matrix" values="1 0 0 0 0  1 0 0 0 0  1 0 0 0 0  0 0 0 0 1" result="t"/>
<feComposite in="d" in2="t" operator="arithmetic" k1="0.95" k2="0.5" k3="0" k4="0" result="tx"/>
<feTurbulence type="fractalNoise" baseFrequency="0.022" numOctaves="3" seed="22" result="m0"/>
<feColorMatrix in="m0" type="matrix" values="0 1 0 0 0  0 1 0 0 0  0 1 0 0 0  0 0 0 0 1" result="m"/>
<feComposite in="tx" in2="m" operator="arithmetic" k1="0.5" k2="0.72" k3="0" k4="0"/>
</filter>
<filter id="p8C" x="96.3" y="701.5" width="1732.4" height="798.1" filterUnits="userSpaceOnUse" color-interpolation-filters="sRGB">
<feGaussianBlur in="SourceGraphic" stdDeviation="5.5" result="b"/>
<feTurbulence type="fractalNoise" baseFrequency="0.04" numOctaves="4" seed="30" result="n0"/>
<feDisplacementMap in="b" in2="n0" scale="20" xChannelSelector="R" yChannelSelector="G" result="bd"/>
<feColorMatrix in="n0" type="matrix" values="0 0 0 0 1  0 0 0 0 1  0 0 0 0 1  1.1 0 0 0 0" result="n"/>
<feComposite in="bd" in2="n" operator="arithmetic" k1="2.5" k2="0.0" k3="0" k4="0" result="a"/>
<feComponentTransfer in="a" result="cl"><feFuncA type="linear" slope="1.9" intercept="-0.72"/></feComponentTransfer>
<feOffset in="cl" dx="4" dy="5" result="so"/>
<feColorMatrix in="so" type="matrix" values="0 0 0 0 0.02  0 0 0 0 0.05  0 0 0 0 0.02  0 0 0 0.5 0" result="sh0"/>
<feGaussianBlur in="sh0" stdDeviation="1.3" result="sh"/>
<feGaussianBlur in="cl" stdDeviation="1.1" result="cl2"/>
<feMerge><feMergeNode in="sh"/><feMergeNode in="cl2"/></feMerge>
</filter><filter id="p8H" x="1100" y="790" width="480" height="320" filterUnits="userSpaceOnUse"><feGaussianBlur stdDeviation="1.6"/></filter></defs><g clip-path="url(#p8clip)"><g filter="url(#p8T)"><rect x="96.3" y="701.5" width="1732.4" height="798.1" fill="#31492f"/><ellipse cx="369.3" cy="950.4" rx="98.6" ry="50.8" fill="#3d5936"/><ellipse cx="234.8" cy="1064.0" rx="50.8" ry="41.8" fill="#3f6134"/><ellipse cx="623.4" cy="884.7" rx="89.7" ry="44.8" fill="#2f482e"/><ellipse cx="922.3" cy="899.6" rx="59.8" ry="89.7" fill="#36502f"/><ellipse cx="339.5" cy="1289.3" rx="134.5" ry="98.6" fill="#4a5537"/><ellipse cx="474.0" cy="1199.6" rx="113.6" ry="65.8" fill="#3b5632"/><ellipse cx="563.6" cy="1334.1" rx="89.7" ry="59.8" fill="#385331"/><ellipse cx="243.8" cy="1169.7" rx="44.8" ry="59.8" fill="#3d5834"/><polygon points="1140.0,700.0 1152.0,870.0 1116.0,930.0 1104.0,963.0 1146.0,987.0 1231.0,1005.0 1146.0,1036.0 1086.0,1045.0 1035.0,1066.0 1000.0,1100.0 960.0,1110.0 900.0,1115.0 830.0,1125.0 818.0,1185.0 848.0,1230.0 833.0,1280.0 862.0,1319.0 907.0,1334.0 922.0,1379.0 960.0,1394.0 1100.0,1402.0 1170.0,1386.0 1400.0,1380.0 1690.0,1382.0 1695.0,1300.0 1700.0,1150.0 1745.0,1100.0 1745.0,1000.0 1640.0,960.0 1600.0,900.0 1570.0,850.0 1540.0,700.0" fill="#574730"/><ellipse cx="1290.9" cy="1170.2" rx="180.5" ry="75.2" fill="#625036"/><ellipse cx="1321.0" cy="1035.7" rx="120.3" ry="45.1" fill="#5f4e36"/><ellipse cx="1405.3" cy="855.2" rx="22.6" ry="21.1" fill="#9c865c"/><ellipse cx="1396.2" cy="894.3" rx="33.1" ry="27.1" fill="#5a452e"/><ellipse cx="1260.9" cy="828.1" rx="21.1" ry="15.0" fill="#7a6648"/><ellipse cx="1215.7" cy="873.2" rx="39.1" ry="13.5" fill="#31432c" transform="rotate(20 1215.7 873.2)"/><ellipse cx="1170.6" cy="981.5" rx="69.2" ry="27.1" fill="#2f432b" transform="rotate(12 1170.6 981.5)"/><ellipse cx="1546.7" cy="885.3" rx="69.2" ry="24.1" fill="#39432e" transform="rotate(25 1546.7 885.3)"/><ellipse cx="1471.4" cy="963.5" rx="36.1" ry="9.0" fill="#2e3e29" transform="rotate(20 1471.4 963.5)"/><ellipse cx="1516.6" cy="834.1" rx="39.1" ry="27.1" fill="#36482f"/><ellipse cx="1661.0" cy="879.2" rx="69.2" ry="84.2" fill="#3b5132"/><ellipse cx="1636.9" cy="1020.6" rx="60.2" ry="45.1" fill="#4a4a2c"/><ellipse cx="1712.1" cy="1245.4" rx="36.1" ry="150.4" fill="#32482e"/><ellipse cx="1411.3" cy="1398.9" rx="270.8" ry="12.0" fill="#304d2d"/><ellipse cx="728.0" cy="1301.2" rx="20.9" ry="32.9" fill="#1d2715"/></g><ellipse cx="1179.0" cy="1138.6" rx="17.4" ry="6.6" fill="#0a0e08" transform="rotate(-32 1179.0 1138.6)" opacity="0.92"/><ellipse cx="1411.3" cy="1026.7" rx="10.5" ry="4.5" fill="#1c2a18" transform="rotate(-10 1411.3 1026.7)" opacity="0.80"/><g filter="url(#p8C)" opacity="0.95"><ellipse cx="279.7" cy="807.0" rx="30.8" ry="9.0" fill="#fff" transform="rotate(-25 279.7 807.0)"/><ellipse cx="357.4" cy="811.4" rx="23.1" ry="11.6" fill="#fff" transform="rotate(-25 357.4 811.4)"/><ellipse cx="200.5" cy="833.9" rx="10.3" ry="20.6" fill="#fff" transform="rotate(-25 200.5 833.9)"/><ellipse cx="411.2" cy="821.9" rx="18.0" ry="15.4" fill="#fff" transform="rotate(-25 411.2 821.9)"/><ellipse cx="234.8" cy="815.9" rx="33.4" ry="12.9" fill="#fff" transform="rotate(-25 234.8 815.9)"/><ellipse cx="213.9" cy="869.7" rx="18.0" ry="33.4" fill="#fff" transform="rotate(-25 213.9 869.7)"/><ellipse cx="315.5" cy="812.9" rx="38.6" ry="10.3" fill="#fff" transform="rotate(-25 315.5 812.9)"/><ellipse cx="384.3" cy="830.9" rx="25.7" ry="20.6" fill="#fff" transform="rotate(-25 384.3 830.9)"/><ellipse cx="429.1" cy="809.9" rx="20.6" ry="10.3" fill="#fff" transform="rotate(-25 429.1 809.9)"/><ellipse cx="545.7" cy="818.9" rx="38.6" ry="15.4" fill="#fff" transform="rotate(-25 545.7 818.9)"/><ellipse cx="557.7" cy="839.8" rx="10.3" ry="7.7" fill="#fff" transform="rotate(-25 557.7 839.8)"/><ellipse cx="465.0" cy="866.7" rx="38.6" ry="28.3" fill="#fff" transform="rotate(-25 465.0 866.7)"/><ellipse cx="447.1" cy="839.8" rx="12.9" ry="15.4" fill="#fff" transform="rotate(-25 447.1 839.8)"/><ellipse cx="757.9" cy="824.9" rx="23.1" ry="20.6" fill="#fff" transform="rotate(-25 757.9 824.9)"/><ellipse cx="832.7" cy="833.9" rx="38.6" ry="25.7" fill="#fff" transform="rotate(-25 832.7 833.9)"/><ellipse cx="787.8" cy="878.7" rx="51.4" ry="28.3" fill="#fff" transform="rotate(-25 787.8 878.7)"/><ellipse cx="802.8" cy="920.5" rx="38.6" ry="23.1" fill="#fff" transform="rotate(-25 802.8 920.5)"/><ellipse cx="793.8" cy="950.4" rx="38.6" ry="15.4" fill="#fff" transform="rotate(-25 793.8 950.4)"/><ellipse cx="832.7" cy="980.3" rx="18.0" ry="12.9" fill="#fff" transform="rotate(-25 832.7 980.3)"/><ellipse cx="704.1" cy="860.8" rx="7.7" ry="7.7" fill="#fff" transform="rotate(-25 704.1 860.8)"/><ellipse cx="725.0" cy="917.6" rx="10.3" ry="7.7" fill="#fff" transform="rotate(-25 725.0 917.6)"/><ellipse cx="856.6" cy="938.5" rx="12.9" ry="7.7" fill="#fff" transform="rotate(-25 856.6 938.5)"/><ellipse cx="698.1" cy="893.6" rx="6.4" ry="6.4" fill="#fff" transform="rotate(-25 698.1 893.6)"/><ellipse cx="749.0" cy="1031.1" rx="46.3" ry="18.0" fill="#fff" transform="rotate(-25 749.0 1031.1)"/><ellipse cx="737.0" cy="1010.2" rx="10.3" ry="12.9" fill="#fff" transform="rotate(-25 737.0 1010.2)"/><ellipse cx="856.6" cy="1034.1" rx="7.7" ry="25.7" fill="#fff" transform="rotate(-25 856.6 1034.1)"/><ellipse cx="874.5" cy="1043.1" rx="7.7" ry="12.9" fill="#fff" transform="rotate(-25 874.5 1043.1)"/><ellipse cx="766.9" cy="1067.0" rx="7.7" ry="7.7" fill="#fff" transform="rotate(-25 766.9 1067.0)"/><ellipse cx="832.7" cy="1010.2" rx="10.3" ry="10.3" fill="#fff" transform="rotate(-25 832.7 1010.2)"/><ellipse cx="578.6" cy="992.3" rx="10.3" ry="7.7" fill="#fff" transform="rotate(-25 578.6 992.3)"/><ellipse cx="596.5" cy="1016.2" rx="6.4" ry="9.0" fill="#fff" transform="rotate(-25 596.5 1016.2)"/><ellipse cx="627.9" cy="1025.2" rx="10.3" ry="3.9" fill="#fff" transform="rotate(-25 627.9 1025.2)"/><ellipse cx="635.4" cy="1049.1" rx="12.9" ry="6.4" fill="#fff" transform="rotate(-25 635.4 1049.1)"/><ellipse cx="599.5" cy="971.4" rx="5.1" ry="3.9" fill="#fff" transform="rotate(-25 599.5 971.4)"/><ellipse cx="441.1" cy="1059.5" rx="6.4" ry="5.1" fill="#fff" transform="rotate(-25 441.1 1059.5)"/><ellipse cx="465.0" cy="1079.0" rx="10.3" ry="12.9" fill="#fff" transform="rotate(-25 465.0 1079.0)"/><ellipse cx="484.4" cy="1093.9" rx="7.7" ry="7.7" fill="#fff" transform="rotate(-25 484.4 1093.9)"/><ellipse cx="680.2" cy="1082.0" rx="15.4" ry="9.0" fill="#fff" transform="rotate(-25 680.2 1082.0)"/><ellipse cx="608.5" cy="1093.9" rx="10.3" ry="7.7" fill="#fff" transform="rotate(-25 608.5 1093.9)"/><ellipse cx="760.9" cy="1090.9" rx="10.3" ry="9.0" fill="#fff" transform="rotate(-25 760.9 1090.9)"/><ellipse cx="811.7" cy="1090.9" rx="10.3" ry="7.7" fill="#fff" transform="rotate(-25 811.7 1090.9)"/><ellipse cx="213.9" cy="956.4" rx="7.7" ry="10.3" fill="#fff" transform="rotate(-25 213.9 956.4)"/><ellipse cx="237.8" cy="963.9" rx="5.1" ry="5.1" fill="#fff" transform="rotate(-25 237.8 963.9)"/><ellipse cx="324.5" cy="893.6" rx="7.7" ry="5.1" fill="#fff" transform="rotate(-25 324.5 893.6)"/><ellipse cx="390.3" cy="899.6" rx="5.1" ry="3.9" fill="#fff" transform="rotate(-25 390.3 899.6)"/><ellipse cx="949.2" cy="923.5" rx="15.4" ry="15.4" fill="#fff" transform="rotate(-25 949.2 923.5)"/><ellipse cx="913.4" cy="1061.0" rx="10.3" ry="7.7" fill="#fff" transform="rotate(-25 913.4 1061.0)"/><ellipse cx="784.8" cy="974.3" rx="6.4" ry="7.7" fill="#fff" transform="rotate(-25 784.8 974.3)"/><ellipse cx="459.0" cy="1115.9" rx="11.6" ry="20.6" fill="#fff" transform="rotate(-25 459.0 1115.9)"/><ellipse cx="488.9" cy="1101.0" rx="10.3" ry="7.7" fill="#fff" transform="rotate(-25 488.9 1101.0)"/><ellipse cx="547.2" cy="1139.8" rx="11.6" ry="20.6" fill="#fff" transform="rotate(-25 547.2 1139.8)"/><ellipse cx="605.5" cy="1104.0" rx="12.9" ry="7.7" fill="#fff" transform="rotate(-25 605.5 1104.0)"/><ellipse cx="608.5" cy="1196.6" rx="15.4" ry="6.4" fill="#fff" transform="rotate(-25 608.5 1196.6)"/><ellipse cx="656.3" cy="1169.7" rx="23.1" ry="20.6" fill="#fff" transform="rotate(-25 656.3 1169.7)"/><ellipse cx="695.2" cy="1145.8" rx="12.9" ry="11.6" fill="#fff" transform="rotate(-25 695.2 1145.8)"/><ellipse cx="650.3" cy="1121.9" rx="5.1" ry="6.4" fill="#fff" transform="rotate(-25 650.3 1121.9)"/><ellipse cx="623.4" cy="1262.4" rx="18.0" ry="15.4" fill="#fff" transform="rotate(-25 623.4 1262.4)"/><ellipse cx="677.2" cy="1241.5" rx="15.4" ry="10.3" fill="#fff" transform="rotate(-25 677.2 1241.5)"/><ellipse cx="650.3" cy="1250.4" rx="25.7" ry="10.3" fill="#fff" transform="rotate(-25 650.3 1250.4)"/><ellipse cx="599.5" cy="1289.3" rx="3.9" ry="3.9" fill="#fff" transform="rotate(-25 599.5 1289.3)"/><ellipse cx="743.0" cy="1202.6" rx="7.7" ry="10.3" fill="#fff" transform="rotate(-25 743.0 1202.6)"/><ellipse cx="757.9" cy="1235.5" rx="25.7" ry="20.6" fill="#fff" transform="rotate(-25 757.9 1235.5)"/><ellipse cx="784.8" cy="1268.4" rx="33.4" ry="28.3" fill="#fff" transform="rotate(-25 784.8 1268.4)"/><ellipse cx="802.8" cy="1304.2" rx="25.7" ry="25.7" fill="#fff" transform="rotate(-25 802.8 1304.2)"/><ellipse cx="775.9" cy="1325.2" rx="12.9" ry="10.3" fill="#fff" transform="rotate(-25 775.9 1325.2)"/><ellipse cx="808.7" cy="1349.1" rx="7.7" ry="15.4" fill="#fff" transform="rotate(-25 808.7 1349.1)"/><ellipse cx="817.7" cy="1384.9" rx="20.6" ry="12.9" fill="#fff" transform="rotate(-25 817.7 1384.9)"/><ellipse cx="790.8" cy="1160.8" rx="10.3" ry="9.0" fill="#fff" transform="rotate(-25 790.8 1160.8)"/><ellipse cx="814.7" cy="1148.8" rx="11.6" ry="12.9" fill="#fff" transform="rotate(-25 814.7 1148.8)"/><ellipse cx="796.8" cy="1181.7" rx="7.7" ry="6.4" fill="#fff" transform="rotate(-25 796.8 1181.7)"/><ellipse cx="871.5" cy="1259.4" rx="10.3" ry="12.9" fill="#fff" transform="rotate(-25 871.5 1259.4)"/><ellipse cx="847.6" cy="1277.3" rx="10.3" ry="12.9" fill="#fff" transform="rotate(-25 847.6 1277.3)"/><ellipse cx="931.3" cy="1226.5" rx="23.1" ry="20.6" fill="#fff" transform="rotate(-25 931.3 1226.5)"/><ellipse cx="949.2" cy="1274.3" rx="10.3" ry="12.9" fill="#fff" transform="rotate(-25 949.2 1274.3)"/><ellipse cx="284.2" cy="1347.6" rx="9.0" ry="6.4" fill="#fff" transform="rotate(-25 284.2 1347.6)"/><ellipse cx="766.9" cy="1101.0" rx="7.7" ry="6.4" fill="#fff" transform="rotate(-25 766.9 1101.0)"/><ellipse cx="814.7" cy="1098.0" rx="7.7" ry="3.9" fill="#fff" transform="rotate(-25 814.7 1098.0)"/><ellipse cx="1053.3" cy="816.1" rx="12.9" ry="12.9" fill="#fff" transform="rotate(-25 1053.3 816.1)"/><ellipse cx="1116.4" cy="819.1" rx="10.3" ry="12.9" fill="#fff" transform="rotate(-25 1116.4 819.1)"/><ellipse cx="1089.4" cy="852.2" rx="5.2" ry="5.2" fill="#fff" transform="rotate(-25 1089.4 852.2)"/><ellipse cx="969.0" cy="915.3" rx="12.9" ry="15.5" fill="#fff" transform="rotate(-25 969.0 915.3)"/><ellipse cx="1074.3" cy="1002.6" rx="23.3" ry="28.5" fill="#fff" transform="rotate(-25 1074.3 1002.6)"/><ellipse cx="1026.2" cy="1032.7" rx="20.7" ry="25.9" fill="#fff" transform="rotate(-25 1026.2 1032.7)"/><ellipse cx="978.1" cy="1059.7" rx="15.5" ry="7.8" fill="#fff" transform="rotate(-25 978.1 1059.7)"/><ellipse cx="1044.2" cy="990.6" rx="15.5" ry="10.3" fill="#fff" transform="rotate(-25 1044.2 990.6)"/><ellipse cx="1095.4" cy="945.4" rx="6.5" ry="7.8" fill="#fff" transform="rotate(-25 1095.4 945.4)"/><ellipse cx="1035.2" cy="1194.3" rx="46.6" ry="33.6" fill="#fff" transform="rotate(-25 1035.2 1194.3)"/><ellipse cx="1074.3" cy="1173.2" rx="20.7" ry="15.5" fill="#fff" transform="rotate(-25 1074.3 1173.2)"/><ellipse cx="990.1" cy="1290.6" rx="20.7" ry="15.5" fill="#fff" transform="rotate(-25 990.1 1290.6)"/><ellipse cx="978.1" cy="1329.7" rx="15.5" ry="10.3" fill="#fff" transform="rotate(-25 978.1 1329.7)"/><ellipse cx="1050.3" cy="1263.5" rx="15.5" ry="10.3" fill="#fff" transform="rotate(-25 1050.3 1263.5)"/><ellipse cx="1110.4" cy="1380.8" rx="38.8" ry="12.9" fill="#fff" transform="rotate(-25 1110.4 1380.8)"/><ellipse cx="1453.4" cy="1152.2" rx="18.1" ry="23.3" fill="#fff" transform="rotate(-25 1453.4 1152.2)"/><ellipse cx="1495.5" cy="1170.2" rx="10.3" ry="7.8" fill="#fff" transform="rotate(-25 1495.5 1170.2)"/><ellipse cx="1591.8" cy="1143.1" rx="23.3" ry="15.5" fill="#fff" transform="rotate(-25 1591.8 1143.1)"/><ellipse cx="1645.9" cy="1203.3" rx="31.0" ry="23.3" fill="#fff" transform="rotate(-25 1645.9 1203.3)"/><ellipse cx="1706.1" cy="1134.1" rx="15.5" ry="12.9" fill="#fff" transform="rotate(-25 1706.1 1134.1)"/><ellipse cx="1724.2" cy="1317.6" rx="7.8" ry="10.3" fill="#fff" transform="rotate(-25 1724.2 1317.6)"/><ellipse cx="1712.1" cy="1113.1" rx="12.9" ry="10.3" fill="#fff" transform="rotate(-25 1712.1 1113.1)"/><ellipse cx="1576.7" cy="1155.2" rx="7.8" ry="7.8" fill="#fff" transform="rotate(-25 1576.7 1155.2)"/></g><g filter="url(#p8H)"><circle cx="1230.8" cy="847.9" r="3.300" fill="#e8eef8" opacity=".8"/><circle cx="1230.8" cy="847.9" r="1.700" fill="#8fa3cf"/><circle cx="1290.9" cy="852.2" r="3.300" fill="#e8eef8" opacity=".8"/><circle cx="1290.9" cy="852.2" r="1.700" fill="#8fa3cf"/><circle cx="1310.5" cy="857.6" r="3.300" fill="#e8eef8" opacity=".8"/><circle cx="1310.5" cy="857.6" r="1.700" fill="#8fa3cf"/><circle cx="1146.5" cy="844.0" r="3.300" fill="#e8eef8" opacity=".8"/><circle cx="1146.5" cy="844.0" r="1.700" fill="#8fa3cf"/><circle cx="1456.4" cy="820.0" r="3.300" fill="#e8eef8" opacity=".8"/><circle cx="1456.4" cy="820.0" r="1.700" fill="#8fa3cf"/><circle cx="1433.8" cy="872.0" r="3.300" fill="#e8eef8" opacity=".8"/><circle cx="1433.8" cy="872.0" r="1.700" fill="#8fa3cf"/><circle cx="1410.4" cy="880.1" r="3.300" fill="#e8eef8" opacity=".8"/><circle cx="1410.4" cy="880.1" r="1.700" fill="#8fa3cf"/><circle cx="1426.6" cy="880.1" r="3.300" fill="#e8eef8" opacity=".8"/><circle cx="1426.6" cy="880.1" r="1.700" fill="#8fa3cf"/><circle cx="1271.4" cy="891.9" r="3.300" fill="#e8eef8" opacity=".8"/><circle cx="1271.4" cy="891.9" r="1.700" fill="#8fa3cf"/><circle cx="1278.0" cy="888.0" r="3.300" fill="#e8eef8" opacity=".8"/><circle cx="1278.0" cy="888.0" r="1.700" fill="#8fa3cf"/><circle cx="1283.4" cy="903.9" r="3.300" fill="#e8eef8" opacity=".8"/><circle cx="1283.4" cy="903.9" r="1.700" fill="#8fa3cf"/><circle cx="1300.9" cy="900.0" r="3.300" fill="#e8eef8" opacity=".8"/><circle cx="1300.9" cy="900.0" r="1.700" fill="#8fa3cf"/><circle cx="1272.9" cy="906.3" r="3.300" fill="#e8eef8" opacity=".8"/><circle cx="1272.9" cy="906.3" r="1.700" fill="#8fa3cf"/><circle cx="1264.5" cy="932.2" r="3.300" fill="#e8eef8" opacity=".8"/><circle cx="1264.5" cy="932.2" r="1.700" fill="#8fa3cf"/><circle cx="1270.8" cy="946.9" r="3.300" fill="#e8eef8" opacity=".8"/><circle cx="1270.8" cy="946.9" r="1.700" fill="#8fa3cf"/><circle cx="1355.0" cy="935.8" r="3.300" fill="#e8eef8" opacity=".8"/><circle cx="1355.0" cy="935.8" r="1.700" fill="#8fa3cf"/><circle cx="1366.8" cy="935.8" r="3.300" fill="#e8eef8" opacity=".8"/><circle cx="1366.8" cy="935.8" r="1.700" fill="#8fa3cf"/><circle cx="1362.5" cy="943.9" r="3.300" fill="#e8eef8" opacity=".8"/><circle cx="1362.5" cy="943.9" r="1.700" fill="#8fa3cf"/><circle cx="1370.7" cy="919.9" r="3.300" fill="#e8eef8" opacity=".8"/><circle cx="1370.7" cy="919.9" r="1.700" fill="#8fa3cf"/><circle cx="1375.2" cy="951.4" r="3.300" fill="#e8eef8" opacity=".8"/><circle cx="1375.2" cy="951.4" r="1.700" fill="#8fa3cf"/><circle cx="1355.0" cy="957.8" r="3.300" fill="#e8eef8" opacity=".8"/><circle cx="1355.0" cy="957.8" r="1.700" fill="#8fa3cf"/><circle cx="1370.7" cy="976.1" r="3.300" fill="#e8eef8" opacity=".8"/><circle cx="1370.7" cy="976.1" r="1.700" fill="#8fa3cf"/><circle cx="1382.7" cy="972.2" r="3.300" fill="#e8eef8" opacity=".8"/><circle cx="1382.7" cy="972.2" r="1.700" fill="#8fa3cf"/><circle cx="1391.7" cy="969.5" r="3.300" fill="#e8eef8" opacity=".8"/><circle cx="1391.7" cy="969.5" r="1.700" fill="#8fa3cf"/><circle cx="1406.8" cy="972.5" r="3.300" fill="#e8eef8" opacity=".8"/><circle cx="1406.8" cy="972.5" r="1.700" fill="#8fa3cf"/><circle cx="1417.3" cy="975.5" r="3.300" fill="#e8eef8" opacity=".8"/><circle cx="1417.3" cy="975.5" r="1.700" fill="#8fa3cf"/><circle cx="1430.8" cy="969.5" r="3.300" fill="#e8eef8" opacity=".8"/><circle cx="1430.8" cy="969.5" r="1.700" fill="#8fa3cf"/><circle cx="1441.4" cy="957.5" r="3.300" fill="#e8eef8" opacity=".8"/><circle cx="1441.4" cy="957.5" r="1.700" fill="#8fa3cf"/><circle cx="1454.9" cy="1012.2" r="3.300" fill="#e8eef8" opacity=".8"/><circle cx="1454.9" cy="1012.2" r="1.700" fill="#8fa3cf"/><circle cx="1434.7" cy="1075.4" r="3.300" fill="#e8eef8" opacity=".8"/><circle cx="1434.7" cy="1075.4" r="1.700" fill="#8fa3cf"/><circle cx="1281.3" cy="1022.7" r="3.300" fill="#e8eef8" opacity=".8"/><circle cx="1281.3" cy="1022.7" r="1.700" fill="#8fa3cf"/><circle cx="1387.2" cy="901.8" r="3.300" fill="#e8eef8" opacity=".8"/><circle cx="1387.2" cy="901.8" r="1.700" fill="#8fa3cf"/><circle cx="1432.3" cy="903.9" r="3.300" fill="#e8eef8" opacity=".8"/><circle cx="1432.3" cy="903.9" r="1.700" fill="#8fa3cf"/><circle cx="1405.3" cy="891.3" r="3.300" fill="#e8eef8" opacity=".8"/><circle cx="1405.3" cy="891.3" r="1.700" fill="#8fa3cf"/><circle cx="1418.8" cy="895.8" r="3.300" fill="#e8eef8" opacity=".8"/><circle cx="1418.8" cy="895.8" r="1.700" fill="#8fa3cf"/><circle cx="1376.7" cy="910.8" r="3.300" fill="#e8eef8" opacity=".8"/><circle cx="1376.7" cy="910.8" r="1.700" fill="#8fa3cf"/><circle cx="1384.2" cy="963.5" r="3.300" fill="#e8eef8" opacity=".8"/><circle cx="1384.2" cy="963.5" r="1.700" fill="#8fa3cf"/><circle cx="1420.3" cy="936.4" r="3.300" fill="#e8eef8" opacity=".8"/><circle cx="1420.3" cy="936.4" r="1.700" fill="#8fa3cf"/><circle cx="1394.7" cy="897.3" r="3.300" fill="#e8eef8" opacity=".8"/><circle cx="1394.7" cy="897.3" r="1.700" fill="#8fa3cf"/></g><g filter="url(#p8H)"><polygon points="1381.2,915.3 1393.2,913.8 1405.3,912.9 1417.3,917.7 1430.8,919.0 1417.3,922.9 1408.3,925.0 1411.3,931.9 1417.3,936.4 1414.3,945.4 1420.3,951.4 1417.3,960.5 1412.8,966.5 1405.3,962.0 1397.7,957.5 1393.2,951.4 1387.2,943.9 1381.2,936.4 1382.7,927.4 1378.2,921.4" fill="#dfe6f6" stroke="#dfe6f6" stroke-width="9" stroke-linejoin="round" opacity=".9"/><polygon points="1381.2,915.3 1393.2,913.8 1405.3,912.9 1417.3,917.7 1430.8,919.0 1417.3,922.9 1408.3,925.0 1411.3,931.9 1417.3,936.4 1414.3,945.4 1420.3,951.4 1417.3,960.5 1412.8,966.5 1405.3,962.0 1397.7,957.5 1393.2,951.4 1387.2,943.9 1381.2,936.4 1382.7,927.4 1378.2,921.4" fill="#8f9fd0" stroke="#8f9fd0" stroke-width="4.500" stroke-linejoin="round"/><polygon points="1381.2,915.3 1393.2,913.8 1405.3,912.9 1417.3,917.7 1430.8,919.0 1417.3,922.9 1408.3,925.0 1411.3,931.9 1417.3,936.4 1414.3,945.4 1420.3,951.4 1417.3,960.5 1412.8,966.5 1405.3,962.0 1397.7,957.5 1393.2,951.4 1387.2,943.9 1381.2,936.4 1382.7,927.4 1378.2,921.4" fill="#9c1f9a" stroke="#9c1f9a" stroke-width="1" stroke-linejoin="round"/><ellipse cx="1408.3" cy="903.9" rx="6" ry="2.400" fill="#dfe6f6"/><ellipse cx="1408.3" cy="903.9" rx="3.500" ry="1" fill="#9c1f9a"/><circle cx="1419.4" cy="896.7" r="3" fill="#dfe6f6"/><circle cx="1419.4" cy="896.7" r="1.200" fill="#9c1f9a"/></g><text x="1722.700" y="1393.800" text-anchor="end" font-size="6.300" fill="#9aa39a" opacity=".55">© kepler.gl | © Mapbox | © OpenStreetMap | <tspan font-weight="bold">Improve this map</tspan></text><circle cx="1680.500" cy="1379.800" r="3.600" fill="none" stroke="#fff" stroke-width="1.400"/><text x="1686" y="1382.500" font-size="7.500" font-weight="bold" fill="#fff">mapbox</text></g><rect x="224.800" y="809" width="12" height="12.500" fill="#6a7490" opacity=".85"/><path d="M229.800 812.700l2.200 2.500l-2.200 2.500" fill="none" stroke="#1c2430" stroke-width="1"/><rect x="1700.700" y="810.6" width="20" height="20.200" fill="#29323f" opacity=".93"/><g transform="translate(1710.700 820.7)"><path d="M-4 -3.500h8v7h-8zM0 -3.500v7" fill="none" stroke="#8a96b4" stroke-width="1"/></g><rect x="1700.700" y="837.4" width="20" height="20.200" fill="#29323f" opacity=".93"/><g transform="translate(1710.700 847.5)"><path d="M0 -4.500l4.200 2.300v4.600l-4.200 2.300l-4.200-2.300v-4.600zM0 0.200l4.200-2.400M0 0.200l-4.200-2.400M0 0.200v4.500" fill="#8a96b4" stroke="#2b3444" stroke-width=".7"/></g><rect x="1700.700" y="864.1" width="20" height="20.200" fill="#29323f" opacity=".93"/><g transform="translate(1710.700 874.2)"><path d="M-3.500 -4.500h7v9h-7zM-3.500 -2.200h7M-3.500 0h7M-3.500 2.200h7M-0.800 -4.500v9" fill="none" stroke="#8a96b4" stroke-width="1"/></g><rect x="1700.700" y="890.9" width="20" height="20.200" fill="#29323f" opacity=".93"/><g transform="translate(1710.700 901.0)"><path d="M-4.500 3.800l1.500-6l4-2.500l3.500 3l-.5 5.500z" fill="none" stroke="#8a96b4" stroke-width=".9"/><circle cx="0" cy="0" r=".7" fill="#8a96b4"/><circle cx="2" cy="-1.200" r=".6" fill="#8a96b4"/></g><rect x="1700.700" y="917.6" width="20" height="20.200" fill="#29323f" opacity=".93"/><g transform="translate(1710.700 927.7)"><text x="0" y="2.500" text-anchor="middle" font-size="6.500" fill="#8a96b4">EN</text></g><rect x="1291.800" y="1176.800" width="154.100" height="43.100" rx="21.500" fill="#29323c" opacity=".9"/><g text-anchor="middle"><text x="1332.500" y="1193" font-size="7.800" fill="#a4abb8">05/01/2022</text><text x="1332.500" y="1208.800" font-size="9.500" fill="#f0f2f5">6:51 AM</text><text x="1405" y="1193" font-size="7.800" fill="#a4abb8">05/31/2022</text><text x="1405" y="1208.800" font-size="9.500" fill="#f0f2f5">6:51 PM</text></g><path d="M1365.500 1198h6" stroke="#c8ccd4" stroke-width="1.300"/><rect x="1022.300" y="1232.800" width="693.700" height="146.500" fill="#29323c"/><rect x="1064.400" y="1272.800" width="496.700" height="68" fill="#2d3745"/><circle cx="1048.700" cy="1248.800" r="3.300" fill="none" stroke="#a0a7b4" stroke-width=".8"/><path d="M1048.700 1246.800v2.200l1.400 1" fill="none" stroke="#a0a7b4" stroke-width=".7"/><text x="1057.800" y="1251.300" font-size="7.600" fill="#a0a7b4">creation_time</text><path d="M1128.500 1251l2.200-2.600l1.700 1.300l2.800-3" fill="none" stroke="#a0a7b4" stroke-width="1"/><text x="1144" y="1251.300" font-size="7.600" fill="#6a7485">Y Axis</text><circle cx="1688" cy="1248.800" r="6" fill="#c2c6d2"/><path d="M1685.800 1251l1.500-1.500M1690.200 1246.600l-1.500 1.500M1685.500 1249.500v1.800h1.800M1690.500 1248v-1.800h-1.800" stroke="#29323c" stroke-width=".8" fill="none"/><path d="M1064.0 1340.800v-7.5h2.700v7.5zM1067.0 1340.800v-3.6h2.700v3.6zM1082.0 1340.800v-3.0h2.700v3.0zM1085.7 1340.800v-3.0h2.700v3.0zM1089.3 1340.800v-3.0h2.700v3.0zM1097.1 1340.800v-6.6h2.700v6.6zM1108.2 1340.800v-3.0h2.700v3.0zM1112.1 1340.800v-3.0h2.700v3.0zM1138.6 1340.800v-3.0h2.700v3.0zM1142.2 1340.800v-6.0h2.700v6.0zM1145.8 1340.800v-3.0h2.700v3.0zM1149.7 1340.800v-3.0h2.700v3.0zM1157.3 1340.800v-3.0h2.700v3.0zM1164.8 1340.800v-12.6h2.700v12.6zM1168.7 1340.800v-3.0h2.700v3.0zM1172.3 1340.800v-3.0h2.700v3.0zM1191.0 1340.800v-3.0h2.700v3.0zM1194.9 1340.800v-6.0h2.700v6.0zM1206.0 1340.800v-3.0h2.700v3.0zM1213.8 1340.800v-3.0h2.700v3.0zM1217.4 1340.800v-3.0h2.700v3.0zM1228.9 1340.800v-3.0h2.700v3.0zM1232.5 1340.800v-6.0h2.700v6.0zM1247.5 1340.800v-3.0h2.700v3.0zM1251.1 1340.800v-3.0h2.700v3.0zM1255.0 1340.800v-3.0h2.700v3.0zM1270.4 1340.800v-3.0h2.700v3.0zM1277.6 1340.800v-6.0h2.700v6.0zM1300.5 1340.800v-6.0h2.700v6.0zM1315.8 1340.800v-3.0h2.700v3.0zM1357.3 1340.800v-3.0h2.700v3.0zM1360.9 1340.800v-3.0h2.700v3.0zM1372.4 1340.800v-6.0h2.700v6.0zM1379.9 1340.800v-3.0h2.700v3.0zM1398.8 1340.800v-3.0h2.700v3.0zM1402.5 1340.800v-3.0h2.700v3.0zM1425.3 1340.800v-3.0h2.700v3.0zM1428.9 1340.800v-6.0h2.700v6.0zM1432.8 1340.800v-3.0h2.700v3.0zM1443.7 1340.800v-6.0h2.700v6.0zM1451.5 1340.800v-6.0h2.700v6.0zM1455.1 1340.800v-3.0h2.700v3.0zM1462.9 1340.800v-3.0h2.700v3.0zM1466.5 1340.800v-6.0h2.700v6.0zM1474.1 1340.800v-9.0h2.700v9.0zM1478.0 1340.800v-3.0h2.700v3.0zM1481.6 1340.800v-15.6h2.700v15.6zM1489.1 1340.800v-21.7h2.700v21.7zM1493.0 1340.800v-24.7h2.700v24.7zM1496.6 1340.800v-24.7h2.700v24.7zM1500.5 1340.800v-36.7h2.700v36.7zM1504.1 1340.800v-30.7h2.700v30.7zM1508.1 1340.800v-24.7h2.700v24.7zM1511.7 1340.800v-27.7h2.700v27.7zM1515.6 1340.800v-46.6h2.700v46.6zM1519.2 1340.800v-40.0h2.700v40.0zM1523.1 1340.800v-40.0h2.700v40.0zM1527.0 1340.800v-46.6h2.700v46.6zM1530.6 1340.800v-37.0h2.700v37.0zM1534.5 1340.800v-37.0h2.700v37.0zM1538.1 1340.800v-68.0h2.700v68.0zM1542.1 1340.800v-37.0h2.700v37.0zM1545.7 1340.800v-31.0h2.700v31.0zM1549.6 1340.800v-24.7h2.700v24.7zM1553.2 1340.800v-24.7h2.700v24.7zM1557.1 1340.800v-55.7h2.700v55.7zM1560.7 1340.800v-15.6h2.700v15.6z" fill="#1fa7c9"/><rect x="1060.500" y="1294" width="3.600" height="25.500" rx="1.500" fill="#e4e8f0"/><rect x="1561.200" y="1294" width="3.600" height="25.500" rx="1.500" fill="#e4e8f0"/><g font-size="6.600" fill="#8d95a5"><text x="1091.8" y="1360.600" text-anchor="middle">Tue 03</text><text x="1124.4" y="1360.600" text-anchor="middle">Thu 05</text><text x="1157.0" y="1360.600" text-anchor="middle">Sat 07</text><text x="1189.7" y="1360.600" text-anchor="middle">Mon 09</text><text x="1222.3" y="1360.600" text-anchor="middle">Wed 11</text><text x="1254.9" y="1360.600" text-anchor="middle">Fri 13</text><text x="1287.5" y="1360.600" text-anchor="middle">May 15</text><text x="1320.1" y="1360.600" text-anchor="middle">Tue 17</text><text x="1352.8" y="1360.600" text-anchor="middle">Thu 19</text><text x="1385.4" y="1360.600" text-anchor="middle">Sat 21</text><text x="1418.0" y="1360.600" text-anchor="middle">Mon 23</text><text x="1450.6" y="1360.600" text-anchor="middle">Wed 25</text><text x="1483.2" y="1360.600" text-anchor="middle">Fri 27</text><text x="1515.9" y="1360.600" text-anchor="middle">May 29</text><text x="1548.5" y="1360.600" text-anchor="middle">Tue 31</text></g><rect x="1584.3" y="1342.900" width="21.600" height="20.800" rx="1.500" fill="#6a7485"/><g transform="translate(1595.1 1353.300)"><path d="M-4.500 -2.800h7.500v5.600h-7.500zM-3 -1.500v3M4.500 -1.200l1 1.200l-1 1.200" fill="none" stroke="#fff" stroke-width=".9"/></g><rect x="1610.2" y="1342.900" width="21.600" height="20.800" rx="1.500" fill="#6a7485"/><g transform="translate(1621.0 1353.300)"><path d="M4.500 -4.500c-4 .3-6 2.500-7 5.500l2 2c3-1 5-3 5-7.500zM-3 1.500l-2 .8l1.500 1M-1 3.500l-.6 2l-1.200-1.400" fill="#fff"/></g><rect x="1636.1" y="1342.900" width="21.600" height="20.800" rx="1.500" fill="#6a7485"/><g transform="translate(1646.9 1353.300)"><path d="M-3.500 1a3.800 3.800 0 1 0 1.200-3.600" fill="none" stroke="#fff" stroke-width="1.300"/><path d="M-4.800 -3.800l.3 3.700l3.500-1.200z" fill="#fff"/></g><rect x="1662.2" y="1342.900" width="21.600" height="20.800" rx="1.500" fill="#6a7485"/><g transform="translate(1673.0 1353.300)"><path d="M-3 -4.500l7.500 4.500l-7.500 4.500z" fill="#fff"/></g></svg></div>
<div class="panel" id="p9" style="left:1742.2px;top:799.4px;width:1264.6px;height:273.1px"><div class="ptitle">analisys by event type</div><svg width="1262.6" height="271.1" viewBox="1743.2 800.4 1262.6 271.1" ><path d="M2082.0 830V1039.700M2239.5 830V1039.700M2397.0 830V1039.700M2554.5 830V1039.700M2712.0 830V1039.700M2869.5 830V1039.700" stroke="#ececec" stroke-width="0.700"/><path d="M1924.500 830V1039.700" stroke="#444" stroke-width="0.900"/><path d="M1946.5 882.7H2038.5M2409.4 882.7H2927.3M1946.5 870.0V895.4M2927.3 870.0V895.4" stroke="#00fa9a" stroke-width="1.300" fill="none"/><rect x="2038.5" y="856.9" width="370.9" height="51.6" fill="#00fa9a" fill-opacity="0.5" stroke="#00fa9a" stroke-width="1.300"/><path d="M2247.8 856.9V908.5" stroke="#00fa9a" stroke-width="1.300"/><path d="M2269.4 856.9V908.5M2269.4 856.9L2505.7 882.7L2269.4 908.5L2033.2 882.7Z" stroke="#00fa9a" stroke-width="0.900" stroke-dasharray="2.300 1.500" fill="none"/><path d="M1946.5 987.8H1958.0M1980.9 987.8H2013.6M1946.5 974.8V1000.8M2013.6 974.8V1000.8" stroke="#00fa9a" stroke-width="1.300" fill="none"/><rect x="1958.0" y="962.0" width="22.9" height="51.6" fill="#00fa9a" fill-opacity="0.5" stroke="#00fa9a" stroke-width="1.300"/><path d="M1969.4 962.0V1013.6" stroke="#00fa9a" stroke-width="1.300"/><path d="M1975.1 962.0V1013.6M1975.1 962.0L2002.1 987.8L1975.1 1013.6L1948.0 987.8Z" stroke="#00fa9a" stroke-width="0.900" stroke-dasharray="2.300 1.500" fill="none"/><g fill="none" stroke="#ff8c00" stroke-width="1.100"><circle cx="1946.5" cy="882.700" r="3.500" opacity="0.6"/><circle cx="1969.1" cy="882.700" r="3.500" opacity="0.6"/><circle cx="1980.3" cy="882.700" r="3.500" opacity="0.95"/><circle cx="2002.5" cy="882.700" r="3.500" opacity="0.6"/><circle cx="2013.6" cy="882.700" r="3.500" opacity="0.6"/><circle cx="2024.8" cy="882.700" r="3.500" opacity="0.6"/><circle cx="2080.4" cy="882.700" r="3.500" opacity="0.95"/><circle cx="2191.8" cy="882.700" r="3.500" opacity="0.6"/><circle cx="2203.0" cy="882.700" r="3.500" opacity="0.6"/><circle cx="2214.0" cy="882.700" r="3.500" opacity="0.6"/><circle cx="2236.3" cy="882.700" r="3.500" opacity="0.6"/><circle cx="2247.4" cy="882.700" r="3.500" opacity="0.6"/><circle cx="2269.4" cy="882.700" r="3.500" opacity="0.6"/><circle cx="2325.5" cy="882.700" r="3.500" opacity="0.6"/><circle cx="2336.5" cy="882.700" r="3.500" opacity="0.6"/><circle cx="2347.7" cy="882.700" r="3.500" opacity="0.6"/><circle cx="2369.9" cy="882.700" r="3.500" opacity="0.6"/><circle cx="2392.3" cy="882.700" r="3.500" opacity="0.6"/><circle cx="2415.0" cy="882.700" r="3.500" opacity="0.6"/><circle cx="2470.4" cy="882.700" r="3.500" opacity="0.95"/><circle cx="2548.5" cy="882.700" r="3.500" opacity="0.6"/><circle cx="2748.2" cy="882.700" r="3.500" opacity="0.6"/><circle cx="2927.3" cy="882.700" r="3.500" opacity="0.6"/><circle cx="1946.5" cy="987.800" r="3.500" stroke-width="1.700"/><circle cx="1957.9" cy="987.800" r="3.500" stroke-width="1.700"/><circle cx="1969.0" cy="987.800" r="3.500" stroke-width="1.700"/><circle cx="1980.2" cy="987.800" r="3.500" stroke-width="1.700"/><circle cx="1991.3" cy="987.800" r="3.500" stroke-width="1.700"/><circle cx="2002.5" cy="987.800" r="3.500" stroke-width="1.700"/><circle cx="2013.6" cy="987.800" r="3.500" stroke-width="1.700"/><circle cx="2024.8" cy="987.800" r="3.500" stroke-width="1.700"/><circle cx="2047.0" cy="987.800" r="3.500" opacity=".65"/><circle cx="2058.2" cy="987.800" r="3.500" opacity=".65"/><circle cx="2069.2" cy="987.800" r="3.500" opacity=".65"/><circle cx="2102.5" cy="987.800" r="3.500" opacity=".65"/><circle cx="2266.3" cy="987.800" r="3.500" opacity=".65"/></g><circle cx="2047.0" cy="993.5" r="1.700" fill="#00e890"/><circle cx="2058.2" cy="989.6" r="1.700" fill="#00e890"/><circle cx="2069.2" cy="984.2" r="1.700" fill="#00e890"/><circle cx="2102.5" cy="987.8" r="1.700" fill="#00e890"/><circle cx="2266.3" cy="986.3" r="1.700" fill="#00e890"/><circle cx="2024.8" cy="981.3" r="1.700" fill="none" stroke="#00fa9a" stroke-width=".7" opacity=".8"/><circle cx="2024.8" cy="994.3" r="1.700" fill="none" stroke="#00fa9a" stroke-width=".7" opacity=".8"/><circle cx="2024.8" cy="983.5" r="1.700" fill="none" stroke="#00fa9a" stroke-width=".7" opacity=".8"/><g font-size="7.800" fill="#a8a8a8" class="dj"><text x="1924.5" y="1048.700" text-anchor="middle">0</text><text x="2082.0" y="1048.700" text-anchor="middle">1</text><text x="2239.5" y="1048.700" text-anchor="middle">2</text><text x="2397.0" y="1048.700" text-anchor="middle">3</text><text x="2554.5" y="1048.700" text-anchor="middle">4</text><text x="2712.0" y="1048.700" text-anchor="middle">5</text><text x="2869.5" y="1048.700" text-anchor="middle">6</text><text x="1882.200" y="885.500" text-anchor="middle">LP</text><text x="1882" y="990.600" text-anchor="middle">VT</text></g><rect x="1751.200" y="830.300" width="82.500" height="22.300" rx="2" fill="#fff" stroke="#c4c9e0" stroke-width=".8"/><text x="1760" y="844.300" font-size="8.300" fill="#aaa">lat_uncert</text><path d="M1824 838.500h5.200l-2.600 4.500z" fill="#777"/><rect x="2834" y="828.800" width="159.800" height="14.600" fill="#6b6b6b"/><circle cx="2846.4" cy="835.400" r="3" fill="none" stroke="#eee" stroke-width="1.300"/><path d="M2848.2 837.600l2.600 2.800" stroke="#eee" stroke-width="1.500"/><path d="M2863.0 831.500v9M2858.5 836h9" stroke="#b5b5b5" stroke-width="1.200"/><rect x="2875.5" y="832" width="8" height="8" fill="none" stroke="#b5b5b5" stroke-width=".9" stroke-dasharray="1.500 1"/><ellipse cx="2895.5" cy="835" rx="4" ry="3" fill="none" stroke="#b5b5b5" stroke-width="1"/><path d="M2893.5 837.500l-1.500 3" stroke="#b5b5b5" stroke-width="1"/><rect x="2912.5" y="832" width="8" height="8" fill="#b5b5b5"/><path d="M2916.5 833.500v5M2914.0 836h5" stroke="#6b6b6b" stroke-width="1.200"/><rect x="2928.5" y="832" width="8" height="8" fill="#b5b5b5"/><path d="M2930.0 836h5" stroke="#6b6b6b" stroke-width="1.200"/><path d="M2944.5 832l8 8M2944.5 840l8-8" stroke="#b5b5b5" stroke-width="1.100"/><path d="M2944.5 832h2.500M2944.5 832v2.500M2952.5 840h-2.500M2952.5 840v-2.500" stroke="#b5b5b5" stroke-width="1"/><path d="M2960.0 836l4.500-4l4.500 4h-1.500v4h-6v-4z" fill="#b5b5b5"/><rect x="2981.0" y="832.500" width="9" height="7" rx="1" fill="#b5b5b5"/><circle cx="2985.5" cy="836" r="1.800" fill="#6b6b6b"/></svg></div>
<div class="panel" id="p10" style="left:1742.2px;top:1077.8px;width:1264.6px;height:399.6px"><div class="ptitle">data_source</div><style>#tb{position:absolute;left:0;top:0;font-size:9.600px;color:#3d4249;white-space:nowrap}#tb .c{position:absolute;height:24.030px;line-height:24.600px;border-right:1px solid #e2e4e6;border-bottom:1px solid #e2e4e6;overflow:hidden;letter-spacing:-0.02px}#tb .h{position:absolute;top:21.300px;height:22.400px;line-height:22.800px;background:#f4f5f5;color:#3a6fe0;border-right:1px solid #e2e4e6;overflow:hidden}#tb .r{text-align:right;padding-right:4.600px}#tb .l{text-align:left;padding-left:4px}</style><div id="tb"><div class="h r" style="left:-0.40px;width:100.05px">Time<svg style="position:static;vertical-align:-1.500px;margin-left:2.500px" width="8.500" height="8.500" viewBox="0 0 24 24" fill="none" stroke="#555b63" stroke-width="2" stroke-linejoin="round"><path d="M2.500 3h19l-7.500 9v8.500l-4-2.500v-6z"/></svg></div><div class="h r" style="left:99.65px;width:100.05px">latitude<svg style="position:static;vertical-align:-1.500px;margin-left:2.500px" width="8.500" height="8.500" viewBox="0 0 24 24" fill="none" stroke="#555b63" stroke-width="2" stroke-linejoin="round"><path d="M2.500 3h19l-7.500 9v8.500l-4-2.500v-6z"/></svg></div><div class="h r" style="left:199.70px;width:100.05px">lat_error<svg style="position:static;vertical-align:-1.500px;margin-left:2.500px" width="8.500" height="8.500" viewBox="0 0 24 24" fill="none" stroke="#555b63" stroke-width="2" stroke-linejoin="round"><path d="M2.500 3h19l-7.500 9v8.500l-4-2.500v-6z"/></svg></div><div class="h r" style="left:299.75px;width:100.05px">longitude<svg style="position:static;vertical-align:-1.500px;margin-left:2.500px" width="8.500" height="8.500" viewBox="0 0 24 24" fill="none" stroke="#555b63" stroke-width="2" stroke-linejoin="round"><path d="M2.500 3h19l-7.500 9v8.500l-4-2.500v-6z"/></svg></div><div class="h r" style="left:399.80px;width:100.05px">lon_error<svg style="position:static;vertical-align:-1.500px;margin-left:2.500px" width="8.500" height="8.500" viewBox="0 0 24 24" fill="none" stroke="#555b63" stroke-width="2" stroke-linejoin="round"><path d="M2.500 3h19l-7.500 9v8.500l-4-2.500v-6z"/></svg></div><div class="h r" style="left:499.85px;width:100.05px">depth_km<svg style="position:static;vertical-align:-1.500px;margin-left:2.500px" width="8.500" height="8.500" viewBox="0 0 24 24" fill="none" stroke="#555b63" stroke-width="2" stroke-linejoin="round"><path d="M2.500 3h19l-7.500 9v8.500l-4-2.500v-6z"/></svg></div><div class="h r" style="left:599.90px;width:100.05px">depth_error<svg style="position:static;vertical-align:-1.500px;margin-left:2.500px" width="8.500" height="8.500" viewBox="0 0 24 24" fill="none" stroke="#555b63" stroke-width="2" stroke-linejoin="round"><path d="M2.500 3h19l-7.500 9v8.500l-4-2.500v-6z"/></svg></div><div class="h r" style="left:699.95px;width:100.05px">mag_val<svg style="position:static;vertical-align:-1.500px;margin-left:2.500px" width="8.500" height="8.500" viewBox="0 0 24 24" fill="none" stroke="#555b63" stroke-width="2" stroke-linejoin="round"><path d="M2.500 3h19l-7.500 9v8.500l-4-2.500v-6z"/></svg></div><div class="h r" style="left:800.00px;width:100.05px">rms<svg style="position:static;vertical-align:-1.500px;margin-left:2.500px" width="8.500" height="8.500" viewBox="0 0 24 24" fill="none" stroke="#555b63" stroke-width="2" stroke-linejoin="round"><path d="M2.500 3h19l-7.500 9v8.500l-4-2.500v-6z"/></svg></div><div class="h l" style="left:900.05px;width:100.05px">event_id<svg style="position:static;vertical-align:-1.500px;margin-left:2.500px" width="8.500" height="8.500" viewBox="0 0 24 24" fill="none" stroke="#555b63" stroke-width="2" stroke-linejoin="round"><path d="M2.500 3h19l-7.500 9v8.500l-4-2.500v-6z"/></svg></div><div class="h l" style="left:1000.10px;width:100.05px">earthquake_name<svg style="position:static;vertical-align:-1.500px;margin-left:2.500px" width="8.500" height="8.500" viewBox="0 0 24 24" fill="none" stroke="#555b63" stroke-width="2" stroke-linejoin="round"><path d="M2.500 3h19l-7.500 9v8.500l-4-2.500v-6z"/></svg></div><div class="h l" style="left:1100.15px;width:100.05px">event_type<svg style="position:static;vertical-align:-1.500px;margin-left:2.500px" width="8.500" height="8.500" viewBox="0 0 24 24" fill="none" stroke="#555b63" stroke-width="2" stroke-linejoin="round"><path d="M2.500 3h19l-7.500 9v8.500l-4-2.500v-6z"/></svg></div><div class="h l" style="left:1200.20px;width:100.05px">evaluationStatus<svg style="position:static;vertical-align:-1.500px;margin-left:2.500px" width="8.500" height="8.500" viewBox="0 0 24 24" fill="none" stroke="#555b63" stroke-width="2" stroke-linejoin="round"><path d="M2.500 3h19l-7.500 9v8.500l-4-2.500v-6z"/></svg></div><div class="c r" style="left:-0.40px;top:43.70px;width:100.05px">1654041075.0000</div><div class="c r" style="left:99.65px;top:43.70px;width:100.05px">0.7958</div><div class="c r" style="left:199.70px;top:43.70px;width:100.05px">0.1414</div><div class="c r" style="left:299.75px;top:43.70px;width:100.05px">-77.9313</div><div class="c r" style="left:399.80px;top:43.70px;width:100.05px">0.1414</div><div class="c r" style="left:499.85px;top:43.70px;width:100.05px">-0.7800</div><div class="c r" style="left:599.90px;top:43.70px;width:100.05px"></div><div class="c r" style="left:699.95px;top:43.70px;width:100.05px">0.9388</div><div class="c r" style="left:800.00px;top:43.70px;width:100.05px">0.0800</div><div class="c l" style="left:900.05px;top:43.70px;width:100.05px">igepn2022kpmu</div><div class="c l" style="left:1000.10px;top:43.70px;width:100.05px">VT</div><div class="c l" style="left:1100.15px;top:43.70px;width:100.05px">volcanic eruption</div><div class="c l" style="left:1200.20px;top:43.70px;width:100.05px">reviewed</div><div class="c r" style="left:-0.40px;top:67.73px;width:100.05px">1654040450.0000</div><div class="c r" style="left:99.65px;top:67.73px;width:100.05px">0.7637</div><div class="c r" style="left:199.70px;top:67.73px;width:100.05px">0.2828</div><div class="c r" style="left:299.75px;top:67.73px;width:100.05px">-77.9273</div><div class="c r" style="left:399.80px;top:67.73px;width:100.05px">0.2828</div><div class="c r" style="left:499.85px;top:67.73px;width:100.05px">-1.2400</div><div class="c r" style="left:599.90px;top:67.73px;width:100.05px">0.1000</div><div class="c r" style="left:699.95px;top:67.73px;width:100.05px">1.8921</div><div class="c r" style="left:800.00px;top:67.73px;width:100.05px">0.1300</div><div class="c l" style="left:900.05px;top:67.73px;width:100.05px">igepn2022kpml</div><div class="c l" style="left:1000.10px;top:67.73px;width:100.05px">VT</div><div class="c l" style="left:1100.15px;top:67.73px;width:100.05px">volcanic eruption</div><div class="c l" style="left:1200.20px;top:67.73px;width:100.05px">reviewed</div><div class="c r" style="left:-0.40px;top:91.76px;width:100.05px">1654039898.0000</div><div class="c r" style="left:99.65px;top:91.76px;width:100.05px">0.8022</div><div class="c r" style="left:199.70px;top:91.76px;width:100.05px">0.2121</div><div class="c r" style="left:299.75px;top:91.76px;width:100.05px">-77.9363</div><div class="c r" style="left:399.80px;top:91.76px;width:100.05px">0.2121</div><div class="c r" style="left:499.85px;top:91.76px;width:100.05px">-0.4300</div><div class="c r" style="left:599.90px;top:91.76px;width:100.05px">0.1000</div><div class="c r" style="left:699.95px;top:91.76px;width:100.05px">1.3245</div><div class="c r" style="left:800.00px;top:91.76px;width:100.05px">0.1200</div><div class="c l" style="left:900.05px;top:91.76px;width:100.05px">igepn2022kplz</div><div class="c l" style="left:1000.10px;top:91.76px;width:100.05px">VT</div><div class="c l" style="left:1100.15px;top:91.76px;width:100.05px">volcanic eruption</div><div class="c l" style="left:1200.20px;top:91.76px;width:100.05px">reviewed</div><div class="c r" style="left:-0.40px;top:115.79px;width:100.05px">1654039502.0000</div><div class="c r" style="left:99.65px;top:115.79px;width:100.05px">0.7963</div><div class="c r" style="left:199.70px;top:115.79px;width:100.05px">0.2121</div><div class="c r" style="left:299.75px;top:115.79px;width:100.05px">-77.9347</div><div class="c r" style="left:399.80px;top:115.79px;width:100.05px">0.2121</div><div class="c r" style="left:499.85px;top:115.79px;width:100.05px">-1.0000</div><div class="c r" style="left:599.90px;top:115.79px;width:100.05px">0.1000</div><div class="c r" style="left:699.95px;top:115.79px;width:100.05px">1.3787</div><div class="c r" style="left:800.00px;top:115.79px;width:100.05px">0.0900</div><div class="c l" style="left:900.05px;top:115.79px;width:100.05px">igepn2022kplx</div><div class="c l" style="left:1000.10px;top:115.79px;width:100.05px">VT</div><div class="c l" style="left:1100.15px;top:115.79px;width:100.05px">volcanic eruption</div><div class="c l" style="left:1200.20px;top:115.79px;width:100.05px">reviewed</div><div class="c r" style="left:-0.40px;top:139.82px;width:100.05px">1654038558.0000</div><div class="c r" style="left:99.65px;top:139.82px;width:100.05px">0.7795</div><div class="c r" style="left:199.70px;top:139.82px;width:100.05px">0.4243</div><div class="c r" style="left:299.75px;top:139.82px;width:100.05px">-77.9217</div><div class="c r" style="left:399.80px;top:139.82px;width:100.05px">0.4243</div><div class="c r" style="left:499.85px;top:139.82px;width:100.05px">-2.6600</div><div class="c r" style="left:599.90px;top:139.82px;width:100.05px">0.1000</div><div class="c r" style="left:699.95px;top:139.82px;width:100.05px">1.4713</div><div class="c r" style="left:800.00px;top:139.82px;width:100.05px">0.2100</div><div class="c l" style="left:900.05px;top:139.82px;width:100.05px">igepn2022kplk</div><div class="c l" style="left:1000.10px;top:139.82px;width:100.05px">VT</div><div class="c l" style="left:1100.15px;top:139.82px;width:100.05px">volcanic eruption</div><div class="c l" style="left:1200.20px;top:139.82px;width:100.05px">reviewed</div><div class="c r" style="left:-0.40px;top:163.85px;width:100.05px">1654036868.0000</div><div class="c r" style="left:99.65px;top:163.85px;width:100.05px">0.8038</div><div class="c r" style="left:199.70px;top:163.85px;width:100.05px">0.2121</div><div class="c r" style="left:299.75px;top:163.85px;width:100.05px">-77.9353</div><div class="c r" style="left:399.80px;top:163.85px;width:100.05px">0.2121</div><div class="c r" style="left:499.85px;top:163.85px;width:100.05px">-0.5500</div><div class="c r" style="left:599.90px;top:163.85px;width:100.05px">0.2000</div><div class="c r" style="left:699.95px;top:163.85px;width:100.05px">0.4462</div><div class="c r" style="left:800.00px;top:163.85px;width:100.05px">1.4391</div><div class="c l" style="left:900.05px;top:163.85px;width:100.05px">igepn2022kpkj</div><div class="c l" style="left:1000.10px;top:163.85px;width:100.05px">VT</div><div class="c l" style="left:1100.15px;top:163.85px;width:100.05px">volcanic eruption</div><div class="c l" style="left:1200.20px;top:163.85px;width:100.05px">reviewed</div><div class="c r" style="left:-0.40px;top:187.88px;width:100.05px">1654036168.0000</div><div class="c r" style="left:99.65px;top:187.88px;width:100.05px">0.7983</div><div class="c r" style="left:199.70px;top:187.88px;width:100.05px">0.2121</div><div class="c r" style="left:299.75px;top:187.88px;width:100.05px">-77.9363</div><div class="c r" style="left:399.80px;top:187.88px;width:100.05px">0.2121</div><div class="c r" style="left:499.85px;top:187.88px;width:100.05px">-1.1400</div><div class="c r" style="left:599.90px;top:187.88px;width:100.05px">0.2000</div><div class="c r" style="left:699.95px;top:187.88px;width:100.05px">0.6660</div><div class="c r" style="left:800.00px;top:187.88px;width:100.05px">0.0900</div><div class="c l" style="left:900.05px;top:187.88px;width:100.05px">igepn2022kpjy</div><div class="c l" style="left:1000.10px;top:187.88px;width:100.05px">VT</div><div class="c l" style="left:1100.15px;top:187.88px;width:100.05px">volcanic eruption</div><div class="c l" style="left:1200.20px;top:187.88px;width:100.05px">reviewed</div><div class="c r" style="left:-0.40px;top:211.91px;width:100.05px">1654034516.0000</div><div class="c r" style="left:99.65px;top:211.91px;width:100.05px">0.7995</div><div class="c r" style="left:199.70px;top:211.91px;width:100.05px">0.2828</div><div class="c r" style="left:299.75px;top:211.91px;width:100.05px">-77.9372</div><div class="c r" style="left:399.80px;top:211.91px;width:100.05px">0.2828</div><div class="c r" style="left:499.85px;top:211.91px;width:100.05px">-0.6800</div><div class="c r" style="left:599.90px;top:211.91px;width:100.05px">0.2000</div><div class="c r" style="left:699.95px;top:211.91px;width:100.05px">0.8686</div><div class="c r" style="left:800.00px;top:211.91px;width:100.05px">0.1200</div><div class="c l" style="left:900.05px;top:211.91px;width:100.05px">igepn2022kpje</div><div class="c l" style="left:1000.10px;top:211.91px;width:100.05px">VT</div><div class="c l" style="left:1100.15px;top:211.91px;width:100.05px">volcanic eruption</div><div class="c l" style="left:1200.20px;top:211.91px;width:100.05px">reviewed</div><div class="c r" style="left:-0.40px;top:235.94px;width:100.05px">1654032071.0000</div><div class="c r" style="left:99.65px;top:235.94px;width:100.05px">0.8005</div><div class="c r" style="left:199.70px;top:235.94px;width:100.05px">0.2121</div><div class="c r" style="left:299.75px;top:235.94px;width:100.05px">-77.9385</div><div class="c r" style="left:399.80px;top:235.94px;width:100.05px">0.2121</div><div class="c r" style="left:499.85px;top:235.94px;width:100.05px">-0.1900</div><div class="c r" style="left:599.90px;top:235.94px;width:100.05px">0.2000</div><div class="c r" style="left:699.95px;top:235.94px;width:100.05px">0.9880</div><div class="c r" style="left:800.00px;top:235.94px;width:100.05px">0.1000</div><div class="c l" style="left:900.05px;top:235.94px;width:100.05px">igepn2022kpht</div><div class="c l" style="left:1000.10px;top:235.94px;width:100.05px">VT</div><div class="c l" style="left:1100.15px;top:235.94px;width:100.05px">volcanic eruption</div><div class="c l" style="left:1200.20px;top:235.94px;width:100.05px">reviewed</div><div class="c r" style="left:-0.40px;top:259.97px;width:100.05px">1654031873.0000</div><div class="c r" style="left:99.65px;top:259.97px;width:100.05px">0.8005</div><div class="c r" style="left:199.70px;top:259.97px;width:100.05px">0.2121</div><div class="c r" style="left:299.75px;top:259.97px;width:100.05px">-77.9372</div><div class="c r" style="left:399.80px;top:259.97px;width:100.05px">0.2121</div><div class="c r" style="left:499.85px;top:259.97px;width:100.05px">0.0500</div><div class="c r" style="left:599.90px;top:259.97px;width:100.05px">0.2000</div><div class="c r" style="left:699.95px;top:259.97px;width:100.05px">0.7637</div><div class="c r" style="left:800.00px;top:259.97px;width:100.05px">0.1100</div><div class="c l" style="left:900.05px;top:259.97px;width:100.05px">igepn2022kphs</div><div class="c l" style="left:1000.10px;top:259.97px;width:100.05px">VT</div><div class="c l" style="left:1100.15px;top:259.97px;width:100.05px">volcanic eruption</div><div class="c l" style="left:1200.20px;top:259.97px;width:100.05px">reviewed</div><div class="c r" style="left:-0.40px;top:284.00px;width:100.05px">1654031311.0000</div><div class="c r" style="left:99.65px;top:284.00px;width:100.05px">0.8038</div><div class="c r" style="left:199.70px;top:284.00px;width:100.05px">0.3536</div><div class="c r" style="left:299.75px;top:284.00px;width:100.05px">-77.9303</div><div class="c r" style="left:399.80px;top:284.00px;width:100.05px">0.3536</div><div class="c r" style="left:499.85px;top:284.00px;width:100.05px">-0.5800</div><div class="c r" style="left:599.90px;top:284.00px;width:100.05px">0.2000</div><div class="c r" style="left:699.95px;top:284.00px;width:100.05px">0.0624</div><div class="c r" style="left:800.00px;top:284.00px;width:100.05px">0.1200</div><div class="c l" style="left:900.05px;top:284.00px;width:100.05px">igepn2022kphj</div><div class="c l" style="left:1000.10px;top:284.00px;width:100.05px">VT</div><div class="c l" style="left:1100.15px;top:284.00px;width:100.05px">volcanic eruption</div><div class="c l" style="left:1200.20px;top:284.00px;width:100.05px">reviewed</div><div class="c r" style="left:-0.40px;top:308.03px;width:100.05px">1654029822.0000</div><div class="c r" style="left:99.65px;top:308.03px;width:100.05px">0.8038</div><div class="c r" style="left:199.70px;top:308.03px;width:100.05px">0.2828</div><div class="c r" style="left:299.75px;top:308.03px;width:100.05px">-77.9343</div><div class="c r" style="left:399.80px;top:308.03px;width:100.05px">0.2828</div><div class="c r" style="left:499.85px;top:308.03px;width:100.05px">-1.0000</div><div class="c r" style="left:599.90px;top:308.03px;width:100.05px">0.2000</div><div class="c r" style="left:699.95px;top:308.03px;width:100.05px">0.5425</div><div class="c r" style="left:800.00px;top:308.03px;width:100.05px">0.1400</div><div class="c l" style="left:900.05px;top:308.03px;width:100.05px">igepn2022kpgp</div><div class="c l" style="left:1000.10px;top:308.03px;width:100.05px">VT</div><div class="c l" style="left:1100.15px;top:308.03px;width:100.05px">volcanic eruption</div><div class="c l" style="left:1200.20px;top:308.03px;width:100.05px">reviewed</div><div class="c r" style="left:-0.40px;top:332.06px;width:100.05px">1654029426.0000</div><div class="c r" style="left:99.65px;top:332.06px;width:100.05px">0.7997</div><div class="c r" style="left:199.70px;top:332.06px;width:100.05px">0.3536</div><div class="c r" style="left:299.75px;top:332.06px;width:100.05px">-77.9443</div><div class="c r" style="left:399.80px;top:332.06px;width:100.05px">0.3536</div><div class="c r" style="left:499.85px;top:332.06px;width:100.05px">-1.0000</div><div class="c r" style="left:599.90px;top:332.06px;width:100.05px">0.2000</div><div class="c r" style="left:699.95px;top:332.06px;width:100.05px">0.8933</div><div class="c r" style="left:800.00px;top:332.06px;width:100.05px">0.1500</div><div class="c l" style="left:900.05px;top:332.06px;width:100.05px">igepn2022kpgj</div><div class="c l" style="left:1000.10px;top:332.06px;width:100.05px">VT</div><div class="c l" style="left:1100.15px;top:332.06px;width:100.05px">volcanic eruption</div><div class="c l" style="left:1200.20px;top:332.06px;width:100.05px">reviewed</div><div class="c r" style="left:-0.40px;top:356.09px;width:100.05px">1654028791.0000</div><div class="c r" style="left:99.65px;top:356.09px;width:100.05px">0.8012</div><div class="c r" style="left:199.70px;top:356.09px;width:100.05px">0.2121</div><div class="c r" style="left:299.75px;top:356.09px;width:100.05px">-77.9358</div><div class="c r" style="left:399.80px;top:356.09px;width:100.05px">0.2121</div><div class="c r" style="left:499.85px;top:356.09px;width:100.05px">-0.9000</div><div class="c r" style="left:599.90px;top:356.09px;width:100.05px">0.2000</div><div class="c r" style="left:699.95px;top:356.09px;width:100.05px">0.7712</div><div class="c r" style="left:800.00px;top:356.09px;width:100.05px">0.1100</div><div class="c l" style="left:900.05px;top:356.09px;width:100.05px">igepn2022kpfx</div><div class="c l" style="left:1000.10px;top:356.09px;width:100.05px">VT</div><div class="c l" style="left:1100.15px;top:356.09px;width:100.05px">volcanic eruption</div><div class="c l" style="left:1200.20px;top:356.09px;width:100.05px">reviewed</div><div style="position:absolute;left:1257.500px;top:21.300px;width:6px;height:400px;background:#f0f1f2"></div><div style="position:absolute;left:1258.500px;top:23.500px;width:4px;height:330px;border-radius:2px;background:#d5d8db"></div></div></div>
<div class="panel" id="p11" style="left:49.0px;top:1432.1px;width:700.2px;height:95.9px"></div>
<div class="panel" id="p12" style="left:754.5px;top:1432.1px;width:700.2px;height:95.9px"></div>
</body></html>
